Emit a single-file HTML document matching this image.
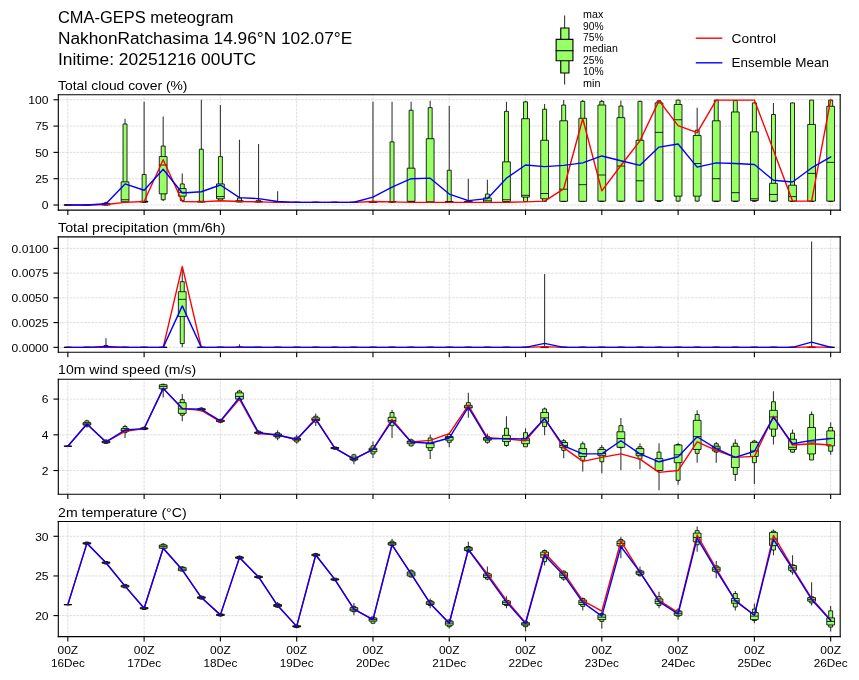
<!DOCTYPE html>
<html><head><meta charset="utf-8"><title>CMA-GEPS meteogram</title><style>html,body{margin:0;padding:0;background:#fff;overflow:hidden}svg{display:block;font-family:"Liberation Sans",sans-serif;will-change:transform}</style></head><body>
<svg width="859" height="680" viewBox="0 0 618.48 489.6" version="1.1">
<defs>
<style type="text/css">*{stroke-linejoin: round; stroke-linecap: butt}</style>
</defs>
<g id="figure_1">
<g id="patch_1">
<path d="M 0 489.6 L 618.48 489.6 L 618.48 0 L 0 0 z
" style="fill: #ffffff"/>
</g>
<g id="axes_1">
<g id="patch_2">
<path d="M 41.98 151.27 L 604.94 151.27 L 604.94 68.18 L 41.98 68.18 z
" style="fill: #ffffff"/>
</g>
<g id="matplotlib.axis_1">
<g id="xtick_1">
<g id="line2d_1">
<path d="M 48.84 151.27 L 48.84 68.18 " clip-path="url(#p63c5d4109b)" style="fill: none; stroke-dasharray: 1.85,0.8; stroke-dashoffset: 0; stroke: #b0b0b0; stroke-opacity: 0.6; stroke-width: 0.5"/>
</g>
<g id="line2d_2">
<defs>
<path id="mde36ec28b2" d="M 0 0 L 0 3.5 " style="stroke: #000000; stroke-width: 0.8"/>
</defs>
<g>
<use href="#mde36ec28b2" x="48.84" y="151.27" style="stroke: #000000; stroke-width: 0.8"/>
</g>
</g>
</g>
<g id="xtick_2">
<g id="line2d_3">
<path d="M 103.77 151.27 L 103.77 68.18 " clip-path="url(#p63c5d4109b)" style="fill: none; stroke-dasharray: 1.85,0.8; stroke-dashoffset: 0; stroke: #b0b0b0; stroke-opacity: 0.6; stroke-width: 0.5"/>
</g>
<g id="line2d_4">
<g>
<use href="#mde36ec28b2" x="103.77" y="151.27" style="stroke: #000000; stroke-width: 0.8"/>
</g>
</g>
</g>
<g id="xtick_3">
<g id="line2d_5">
<path d="M 158.69 151.27 L 158.69 68.18 " clip-path="url(#p63c5d4109b)" style="fill: none; stroke-dasharray: 1.85,0.8; stroke-dashoffset: 0; stroke: #b0b0b0; stroke-opacity: 0.6; stroke-width: 0.5"/>
</g>
<g id="line2d_6">
<g>
<use href="#mde36ec28b2" x="158.69" y="151.27" style="stroke: #000000; stroke-width: 0.8"/>
</g>
</g>
</g>
<g id="xtick_4">
<g id="line2d_7">
<path d="M 213.61 151.27 L 213.61 68.18 " clip-path="url(#p63c5d4109b)" style="fill: none; stroke-dasharray: 1.85,0.8; stroke-dashoffset: 0; stroke: #b0b0b0; stroke-opacity: 0.6; stroke-width: 0.5"/>
</g>
<g id="line2d_8">
<g>
<use href="#mde36ec28b2" x="213.61" y="151.27" style="stroke: #000000; stroke-width: 0.8"/>
</g>
</g>
</g>
<g id="xtick_5">
<g id="line2d_9">
<path d="M 268.54 151.27 L 268.54 68.18 " clip-path="url(#p63c5d4109b)" style="fill: none; stroke-dasharray: 1.85,0.8; stroke-dashoffset: 0; stroke: #b0b0b0; stroke-opacity: 0.6; stroke-width: 0.5"/>
</g>
<g id="line2d_10">
<g>
<use href="#mde36ec28b2" x="268.54" y="151.27" style="stroke: #000000; stroke-width: 0.8"/>
</g>
</g>
</g>
<g id="xtick_6">
<g id="line2d_11">
<path d="M 323.46 151.27 L 323.46 68.18 " clip-path="url(#p63c5d4109b)" style="fill: none; stroke-dasharray: 1.85,0.8; stroke-dashoffset: 0; stroke: #b0b0b0; stroke-opacity: 0.6; stroke-width: 0.5"/>
</g>
<g id="line2d_12">
<g>
<use href="#mde36ec28b2" x="323.46" y="151.27" style="stroke: #000000; stroke-width: 0.8"/>
</g>
</g>
</g>
<g id="xtick_7">
<g id="line2d_13">
<path d="M 378.38 151.27 L 378.38 68.18 " clip-path="url(#p63c5d4109b)" style="fill: none; stroke-dasharray: 1.85,0.8; stroke-dashoffset: 0; stroke: #b0b0b0; stroke-opacity: 0.6; stroke-width: 0.5"/>
</g>
<g id="line2d_14">
<g>
<use href="#mde36ec28b2" x="378.38" y="151.27" style="stroke: #000000; stroke-width: 0.8"/>
</g>
</g>
</g>
<g id="xtick_8">
<g id="line2d_15">
<path d="M 433.31 151.27 L 433.31 68.18 " clip-path="url(#p63c5d4109b)" style="fill: none; stroke-dasharray: 1.85,0.8; stroke-dashoffset: 0; stroke: #b0b0b0; stroke-opacity: 0.6; stroke-width: 0.5"/>
</g>
<g id="line2d_16">
<g>
<use href="#mde36ec28b2" x="433.31" y="151.27" style="stroke: #000000; stroke-width: 0.8"/>
</g>
</g>
</g>
<g id="xtick_9">
<g id="line2d_17">
<path d="M 488.23 151.27 L 488.23 68.18 " clip-path="url(#p63c5d4109b)" style="fill: none; stroke-dasharray: 1.85,0.8; stroke-dashoffset: 0; stroke: #b0b0b0; stroke-opacity: 0.6; stroke-width: 0.5"/>
</g>
<g id="line2d_18">
<g>
<use href="#mde36ec28b2" x="488.23" y="151.27" style="stroke: #000000; stroke-width: 0.8"/>
</g>
</g>
</g>
<g id="xtick_10">
<g id="line2d_19">
<path d="M 543.15 151.27 L 543.15 68.18 " clip-path="url(#p63c5d4109b)" style="fill: none; stroke-dasharray: 1.85,0.8; stroke-dashoffset: 0; stroke: #b0b0b0; stroke-opacity: 0.6; stroke-width: 0.5"/>
</g>
<g id="line2d_20">
<g>
<use href="#mde36ec28b2" x="543.15" y="151.27" style="stroke: #000000; stroke-width: 0.8"/>
</g>
</g>
</g>
<g id="xtick_11">
<g id="line2d_21">
<path d="M 598.08 151.27 L 598.08 68.18 " clip-path="url(#p63c5d4109b)" style="fill: none; stroke-dasharray: 1.85,0.8; stroke-dashoffset: 0; stroke: #b0b0b0; stroke-opacity: 0.6; stroke-width: 0.5"/>
</g>
<g id="line2d_22">
<g>
<use href="#mde36ec28b2" x="598.08" y="151.27" style="stroke: #000000; stroke-width: 0.8"/>
</g>
</g>
</g>
</g>
<g id="matplotlib.axis_2">
<g id="ytick_1">
<g id="line2d_23">
<path d="M 41.98 147.6 L 604.94 147.6 " clip-path="url(#p63c5d4109b)" style="fill: none; stroke-dasharray: 1.85,0.8; stroke-dashoffset: 0; stroke: #b0b0b0; stroke-opacity: 0.6; stroke-width: 0.5"/>
</g>
<g id="line2d_24">
<defs>
<path id="mc78ae8635a" d="M 0 0 L -3.5 0 " style="stroke: #000000; stroke-width: 0.8"/>
</defs>
<g>
<use href="#mc78ae8635a" x="41.98" y="147.6" style="stroke: #000000; stroke-width: 0.8"/>
</g>
</g>
<g id="text_1">
<text style="font-size: 8.28px; font-family: 'Liberation Sans'; text-anchor: end" x="34.98" y="150.64" transform="rotate(-0 34.98 150.64)" textLength="4.85" lengthAdjust="spacingAndGlyphs">0</text>
</g>
</g>
<g id="ytick_2">
<g id="line2d_25">
<path d="M 41.98 128.66 L 604.94 128.66 " clip-path="url(#p63c5d4109b)" style="fill: none; stroke-dasharray: 1.85,0.8; stroke-dashoffset: 0; stroke: #b0b0b0; stroke-opacity: 0.6; stroke-width: 0.5"/>
</g>
<g id="line2d_26">
<g>
<use href="#mc78ae8635a" x="41.98" y="128.66" style="stroke: #000000; stroke-width: 0.8"/>
</g>
</g>
<g id="text_2">
<text style="font-size: 8.28px; font-family: 'Liberation Sans'; text-anchor: end" x="34.98" y="131.69" transform="rotate(-0 34.98 131.69)" textLength="9.69" lengthAdjust="spacingAndGlyphs">25</text>
</g>
</g>
<g id="ytick_3">
<g id="line2d_27">
<path d="M 41.98 109.71 L 604.94 109.71 " clip-path="url(#p63c5d4109b)" style="fill: none; stroke-dasharray: 1.85,0.8; stroke-dashoffset: 0; stroke: #b0b0b0; stroke-opacity: 0.6; stroke-width: 0.5"/>
</g>
<g id="line2d_28">
<g>
<use href="#mc78ae8635a" x="41.98" y="109.71" style="stroke: #000000; stroke-width: 0.8"/>
</g>
</g>
<g id="text_3">
<text style="font-size: 8.28px; font-family: 'Liberation Sans'; text-anchor: end" x="34.98" y="112.75" transform="rotate(-0 34.98 112.75)" textLength="9.69" lengthAdjust="spacingAndGlyphs">50</text>
</g>
</g>
<g id="ytick_4">
<g id="line2d_29">
<path d="M 41.98 90.77 L 604.94 90.77 " clip-path="url(#p63c5d4109b)" style="fill: none; stroke-dasharray: 1.85,0.8; stroke-dashoffset: 0; stroke: #b0b0b0; stroke-opacity: 0.6; stroke-width: 0.5"/>
</g>
<g id="line2d_30">
<g>
<use href="#mc78ae8635a" x="41.98" y="90.77" style="stroke: #000000; stroke-width: 0.8"/>
</g>
</g>
<g id="text_4">
<text style="font-size: 8.28px; font-family: 'Liberation Sans'; text-anchor: end" x="34.98" y="93.81" transform="rotate(-0 34.98 93.81)" textLength="9.69" lengthAdjust="spacingAndGlyphs">75</text>
</g>
</g>
<g id="ytick_5">
<g id="line2d_31">
<path d="M 41.98 71.83 L 604.94 71.83 " clip-path="url(#p63c5d4109b)" style="fill: none; stroke-dasharray: 1.85,0.8; stroke-dashoffset: 0; stroke: #b0b0b0; stroke-opacity: 0.6; stroke-width: 0.5"/>
</g>
<g id="line2d_32">
<g>
<use href="#mc78ae8635a" x="41.98" y="71.83" style="stroke: #000000; stroke-width: 0.8"/>
</g>
</g>
<g id="text_5">
<text style="font-size: 8.28px; font-family: 'Liberation Sans'; text-anchor: end" x="34.98" y="74.87" transform="rotate(-0 34.98 74.87)" textLength="14.54" lengthAdjust="spacingAndGlyphs">100</text>
</g>
</g>
</g>
<g id="line2d_33">
<path d="M 48.84 147.6 L 48.84 147.22 " clip-path="url(#p63c5d4109b)" style="fill: none; stroke: #3a3a3a; stroke-width: 0.8"/>
</g>
<g id="line2d_34">
<path d="M 62.57 147.6 L 62.57 147.22 " clip-path="url(#p63c5d4109b)" style="fill: none; stroke: #3a3a3a; stroke-width: 0.8"/>
</g>
<g id="line2d_35">
<path d="M 76.3 147.6 L 76.3 145.32 " clip-path="url(#p63c5d4109b)" style="fill: none; stroke: #3a3a3a; stroke-width: 0.8"/>
</g>
<g id="line2d_36">
<path d="M 90.03 146.08 L 90.03 85.47 " clip-path="url(#p63c5d4109b)" style="fill: none; stroke: #3a3a3a; stroke-width: 0.8"/>
</g>
<g id="line2d_37">
<path d="M 103.77 145.7 L 103.77 73.34 " clip-path="url(#p63c5d4109b)" style="fill: none; stroke: #3a3a3a; stroke-width: 0.8"/>
</g>
<g id="line2d_38">
<path d="M 117.5 144.79 L 117.5 83.95 " clip-path="url(#p63c5d4109b)" style="fill: none; stroke: #3a3a3a; stroke-width: 0.8"/>
</g>
<g id="line2d_39">
<path d="M 131.23 144.79 L 131.23 124.87 " clip-path="url(#p63c5d4109b)" style="fill: none; stroke: #3a3a3a; stroke-width: 0.8"/>
</g>
<g id="line2d_40">
<path d="M 144.96 145.32 L 144.96 71.83 " clip-path="url(#p63c5d4109b)" style="fill: none; stroke: #3a3a3a; stroke-width: 0.8"/>
</g>
<g id="line2d_41">
<path d="M 158.69 144.57 L 158.69 75.62 " clip-path="url(#p63c5d4109b)" style="fill: none; stroke: #3a3a3a; stroke-width: 0.8"/>
</g>
<g id="line2d_42">
<path d="M 172.42 145.32 L 172.42 100.62 " clip-path="url(#p63c5d4109b)" style="fill: none; stroke: #3a3a3a; stroke-width: 0.8"/>
</g>
<g id="line2d_43">
<path d="M 186.15 145.32 L 186.15 103.65 " clip-path="url(#p63c5d4109b)" style="fill: none; stroke: #3a3a3a; stroke-width: 0.8"/>
</g>
<g id="line2d_44">
<path d="M 199.88 145.7 L 199.88 137.75 " clip-path="url(#p63c5d4109b)" style="fill: none; stroke: #3a3a3a; stroke-width: 0.8"/>
</g>
<g id="line2d_45">
<path d="M 213.61 145.7 L 213.61 145.7 " clip-path="url(#p63c5d4109b)" style="fill: none; stroke: #3a3a3a; stroke-width: 0.8"/>
</g>
<g id="line2d_46">
<path d="M 227.34 145.7 L 227.34 145.7 " clip-path="url(#p63c5d4109b)" style="fill: none; stroke: #3a3a3a; stroke-width: 0.8"/>
</g>
<g id="line2d_47">
<path d="M 241.07 145.7 L 241.07 145.7 " clip-path="url(#p63c5d4109b)" style="fill: none; stroke: #3a3a3a; stroke-width: 0.8"/>
</g>
<g id="line2d_48">
<path d="M 254.81 145.7 L 254.81 145.7 " clip-path="url(#p63c5d4109b)" style="fill: none; stroke: #3a3a3a; stroke-width: 0.8"/>
</g>
<g id="line2d_49">
<path d="M 268.54 145.7 L 268.54 73.34 " clip-path="url(#p63c5d4109b)" style="fill: none; stroke: #3a3a3a; stroke-width: 0.8"/>
</g>
<g id="line2d_50">
<path d="M 282.27 145.7 L 282.27 73.34 " clip-path="url(#p63c5d4109b)" style="fill: none; stroke: #3a3a3a; stroke-width: 0.8"/>
</g>
<g id="line2d_51">
<path d="M 296 145.7 L 296 73.34 " clip-path="url(#p63c5d4109b)" style="fill: none; stroke: #3a3a3a; stroke-width: 0.8"/>
</g>
<g id="line2d_52">
<path d="M 309.73 145.7 L 309.73 72.59 " clip-path="url(#p63c5d4109b)" style="fill: none; stroke: #3a3a3a; stroke-width: 0.8"/>
</g>
<g id="line2d_53">
<path d="M 323.46 145.7 L 323.46 76.37 " clip-path="url(#p63c5d4109b)" style="fill: none; stroke: #3a3a3a; stroke-width: 0.8"/>
</g>
<g id="line2d_54">
<path d="M 337.19 145.7 L 337.19 128.66 " clip-path="url(#p63c5d4109b)" style="fill: none; stroke: #3a3a3a; stroke-width: 0.8"/>
</g>
<g id="line2d_55">
<path d="M 350.92 145.7 L 350.92 129.41 " clip-path="url(#p63c5d4109b)" style="fill: none; stroke: #3a3a3a; stroke-width: 0.8"/>
</g>
<g id="line2d_56">
<path d="M 364.65 145.7 L 364.65 73.34 " clip-path="url(#p63c5d4109b)" style="fill: none; stroke: #3a3a3a; stroke-width: 0.8"/>
</g>
<g id="line2d_57">
<path d="M 378.38 145.32 L 378.38 72.59 " clip-path="url(#p63c5d4109b)" style="fill: none; stroke: #3a3a3a; stroke-width: 0.8"/>
</g>
<g id="line2d_58">
<path d="M 392.11 145.32 L 392.11 74.86 " clip-path="url(#p63c5d4109b)" style="fill: none; stroke: #3a3a3a; stroke-width: 0.8"/>
</g>
<g id="line2d_59">
<path d="M 405.85 145.32 L 405.85 72.06 " clip-path="url(#p63c5d4109b)" style="fill: none; stroke: #3a3a3a; stroke-width: 0.8"/>
</g>
<g id="line2d_60">
<path d="M 419.58 145.32 L 419.58 72.06 " clip-path="url(#p63c5d4109b)" style="fill: none; stroke: #3a3a3a; stroke-width: 0.8"/>
</g>
<g id="line2d_61">
<path d="M 433.31 145.32 L 433.31 72.06 " clip-path="url(#p63c5d4109b)" style="fill: none; stroke: #3a3a3a; stroke-width: 0.8"/>
</g>
<g id="line2d_62">
<path d="M 447.04 145.32 L 447.04 72.43 " clip-path="url(#p63c5d4109b)" style="fill: none; stroke: #3a3a3a; stroke-width: 0.8"/>
</g>
<g id="line2d_63">
<path d="M 460.77 145.32 L 460.77 72.59 " clip-path="url(#p63c5d4109b)" style="fill: none; stroke: #3a3a3a; stroke-width: 0.8"/>
</g>
<g id="line2d_64">
<path d="M 474.5 145.32 L 474.5 72.21 " clip-path="url(#p63c5d4109b)" style="fill: none; stroke: #3a3a3a; stroke-width: 0.8"/>
</g>
<g id="line2d_65">
<path d="M 488.23 145.32 L 488.23 71.98 " clip-path="url(#p63c5d4109b)" style="fill: none; stroke: #3a3a3a; stroke-width: 0.8"/>
</g>
<g id="line2d_66">
<path d="M 501.96 145.32 L 501.96 77.51 " clip-path="url(#p63c5d4109b)" style="fill: none; stroke: #3a3a3a; stroke-width: 0.8"/>
</g>
<g id="line2d_67">
<path d="M 515.69 145.32 L 515.69 71.98 " clip-path="url(#p63c5d4109b)" style="fill: none; stroke: #3a3a3a; stroke-width: 0.8"/>
</g>
<g id="line2d_68">
<path d="M 529.42 145.32 L 529.42 72.06 " clip-path="url(#p63c5d4109b)" style="fill: none; stroke: #3a3a3a; stroke-width: 0.8"/>
</g>
<g id="line2d_69">
<path d="M 543.15 145.32 L 543.15 73.34 " clip-path="url(#p63c5d4109b)" style="fill: none; stroke: #3a3a3a; stroke-width: 0.8"/>
</g>
<g id="line2d_70">
<path d="M 556.89 145.32 L 556.89 74.1 " clip-path="url(#p63c5d4109b)" style="fill: none; stroke: #3a3a3a; stroke-width: 0.8"/>
</g>
<g id="line2d_71">
<path d="M 570.62 145.32 L 570.62 73.72 " clip-path="url(#p63c5d4109b)" style="fill: none; stroke: #3a3a3a; stroke-width: 0.8"/>
</g>
<g id="line2d_72">
<path d="M 584.35 145.32 L 584.35 72.06 " clip-path="url(#p63c5d4109b)" style="fill: none; stroke: #3a3a3a; stroke-width: 0.8"/>
</g>
<g id="line2d_73">
<path d="M 598.08 145.32 L 598.08 71.98 " clip-path="url(#p63c5d4109b)" style="fill: none; stroke: #3a3a3a; stroke-width: 0.8"/>
</g>
<g id="patch_3">
<path d="M 41.98 151.27 L 41.98 68.18 " style="fill: none; stroke: #000000; stroke-width: 0.8; stroke-linejoin: miter; stroke-linecap: square"/>
</g>
<g id="patch_4">
<path d="M 604.94 151.27 L 604.94 68.18 " style="fill: none; stroke: #000000; stroke-width: 0.8; stroke-linejoin: miter; stroke-linecap: square"/>
</g>
<g id="patch_5">
<path d="M 41.98 151.27 L 604.94 151.27 " style="fill: none; stroke: #000000; stroke-width: 0.8; stroke-linejoin: miter; stroke-linecap: square"/>
</g>
<g id="patch_6">
<path d="M 41.98 68.18 L 604.94 68.18 " style="fill: none; stroke: #000000; stroke-width: 0.8; stroke-linejoin: miter; stroke-linecap: square"/>
</g>
<g id="patch_7">
<path d="M 47.41 147.6 L 50.27 147.6 L 50.27 147.6 L 47.41 147.6 z
" clip-path="url(#p63c5d4109b)" style="fill: #99ff66; stroke: #000000; stroke-width: 0.6; stroke-linejoin: miter"/>
</g>
<g id="patch_8">
<path d="M 61.14 147.6 L 64 147.6 L 64 147.6 L 61.14 147.6 z
" clip-path="url(#p63c5d4109b)" style="fill: #99ff66; stroke: #000000; stroke-width: 0.6; stroke-linejoin: miter"/>
</g>
<g id="patch_9">
<path d="M 74.87 147.6 L 77.73 147.6 L 77.73 146.08 L 74.87 146.08 z
" clip-path="url(#p63c5d4109b)" style="fill: #99ff66; stroke: #000000; stroke-width: 0.6; stroke-linejoin: miter"/>
</g>
<g id="patch_10">
<path d="M 88.6 145.7 L 91.46 145.7 L 91.46 89.26 L 88.6 89.26 z
" clip-path="url(#p63c5d4109b)" style="fill: #99ff66; stroke: #000000; stroke-width: 0.6; stroke-linejoin: miter"/>
</g>
<g id="patch_11">
<path d="M 102.33 145.7 L 105.2 145.7 L 105.2 125.62 L 102.33 125.62 z
" clip-path="url(#p63c5d4109b)" style="fill: #99ff66; stroke: #000000; stroke-width: 0.6; stroke-linejoin: miter"/>
</g>
<g id="patch_12">
<path d="M 116.07 143.81 L 118.93 143.81 L 118.93 105.17 L 116.07 105.17 z
" clip-path="url(#p63c5d4109b)" style="fill: #99ff66; stroke: #000000; stroke-width: 0.6; stroke-linejoin: miter"/>
</g>
<g id="patch_13">
<path d="M 129.8 144.41 L 132.66 144.41 L 132.66 132.44 L 129.8 132.44 z
" clip-path="url(#p63c5d4109b)" style="fill: #99ff66; stroke: #000000; stroke-width: 0.6; stroke-linejoin: miter"/>
</g>
<g id="patch_14">
<path d="M 143.53 145.32 L 146.39 145.32 L 146.39 107.44 L 143.53 107.44 z
" clip-path="url(#p63c5d4109b)" style="fill: #99ff66; stroke: #000000; stroke-width: 0.6; stroke-linejoin: miter"/>
</g>
<g id="patch_15">
<path d="M 157.26 144.19 L 160.12 144.19 L 160.12 112.74 L 157.26 112.74 z
" clip-path="url(#p63c5d4109b)" style="fill: #99ff66; stroke: #000000; stroke-width: 0.6; stroke-linejoin: miter"/>
</g>
<g id="patch_16">
<path d="M 170.99 145.32 L 173.85 145.32 L 173.85 142.52 L 170.99 142.52 z
" clip-path="url(#p63c5d4109b)" style="fill: #99ff66; stroke: #000000; stroke-width: 0.6; stroke-linejoin: miter"/>
</g>
<g id="patch_17">
<path d="M 184.72 145.32 L 187.58 145.32 L 187.58 144.19 L 184.72 144.19 z
" clip-path="url(#p63c5d4109b)" style="fill: #99ff66; stroke: #000000; stroke-width: 0.6; stroke-linejoin: miter"/>
</g>
<g id="patch_18">
<path d="M 198.45 145.7 L 201.31 145.7 L 201.31 145.1 L 198.45 145.1 z
" clip-path="url(#p63c5d4109b)" style="fill: #99ff66; stroke: #000000; stroke-width: 0.6; stroke-linejoin: miter"/>
</g>
<g id="patch_19">
<path d="M 212.18 145.7 L 215.04 145.7 L 215.04 145.7 L 212.18 145.7 z
" clip-path="url(#p63c5d4109b)" style="fill: #99ff66; stroke: #000000; stroke-width: 0.6; stroke-linejoin: miter"/>
</g>
<g id="patch_20">
<path d="M 225.91 145.7 L 228.77 145.7 L 228.77 145.7 L 225.91 145.7 z
" clip-path="url(#p63c5d4109b)" style="fill: #99ff66; stroke: #000000; stroke-width: 0.6; stroke-linejoin: miter"/>
</g>
<g id="patch_21">
<path d="M 239.64 145.7 L 242.5 145.7 L 242.5 145.7 L 239.64 145.7 z
" clip-path="url(#p63c5d4109b)" style="fill: #99ff66; stroke: #000000; stroke-width: 0.6; stroke-linejoin: miter"/>
</g>
<g id="patch_22">
<path d="M 253.38 145.7 L 256.24 145.7 L 256.24 145.7 L 253.38 145.7 z
" clip-path="url(#p63c5d4109b)" style="fill: #99ff66; stroke: #000000; stroke-width: 0.6; stroke-linejoin: miter"/>
</g>
<g id="patch_23">
<path d="M 267.11 145.7 L 269.97 145.7 L 269.97 144.95 L 267.11 144.95 z
" clip-path="url(#p63c5d4109b)" style="fill: #99ff66; stroke: #000000; stroke-width: 0.6; stroke-linejoin: miter"/>
</g>
<g id="patch_24">
<path d="M 280.84 145.7 L 283.7 145.7 L 283.7 102.14 L 280.84 102.14 z
" clip-path="url(#p63c5d4109b)" style="fill: #99ff66; stroke: #000000; stroke-width: 0.6; stroke-linejoin: miter"/>
</g>
<g id="patch_25">
<path d="M 294.57 145.7 L 297.43 145.7 L 297.43 79.41 L 294.57 79.41 z
" clip-path="url(#p63c5d4109b)" style="fill: #99ff66; stroke: #000000; stroke-width: 0.6; stroke-linejoin: miter"/>
</g>
<g id="patch_26">
<path d="M 308.3 145.7 L 311.16 145.7 L 311.16 77.51 L 308.3 77.51 z
" clip-path="url(#p63c5d4109b)" style="fill: #99ff66; stroke: #000000; stroke-width: 0.6; stroke-linejoin: miter"/>
</g>
<g id="patch_27">
<path d="M 322.03 145.7 L 324.89 145.7 L 324.89 122.59 L 322.03 122.59 z
" clip-path="url(#p63c5d4109b)" style="fill: #99ff66; stroke: #000000; stroke-width: 0.6; stroke-linejoin: miter"/>
</g>
<g id="patch_28">
<path d="M 335.76 145.7 L 338.62 145.7 L 338.62 144.57 L 335.76 144.57 z
" clip-path="url(#p63c5d4109b)" style="fill: #99ff66; stroke: #000000; stroke-width: 0.6; stroke-linejoin: miter"/>
</g>
<g id="patch_29">
<path d="M 349.49 145.7 L 352.35 145.7 L 352.35 139.72 L 349.49 139.72 z
" clip-path="url(#p63c5d4109b)" style="fill: #99ff66; stroke: #000000; stroke-width: 0.6; stroke-linejoin: miter"/>
</g>
<g id="patch_30">
<path d="M 363.22 145.32 L 366.08 145.32 L 366.08 80.16 L 363.22 80.16 z
" clip-path="url(#p63c5d4109b)" style="fill: #99ff66; stroke: #000000; stroke-width: 0.6; stroke-linejoin: miter"/>
</g>
<g id="patch_31">
<path d="M 376.95 145.1 L 379.81 145.1 L 379.81 73.34 L 376.95 73.34 z
" clip-path="url(#p63c5d4109b)" style="fill: #99ff66; stroke: #000000; stroke-width: 0.6; stroke-linejoin: miter"/>
</g>
<g id="patch_32">
<path d="M 390.68 144.95 L 393.54 144.95 L 393.54 78.65 L 390.68 78.65 z
" clip-path="url(#p63c5d4109b)" style="fill: #99ff66; stroke: #000000; stroke-width: 0.6; stroke-linejoin: miter"/>
</g>
<g id="patch_33">
<path d="M 404.42 145.1 L 407.28 145.1 L 407.28 75.62 L 404.42 75.62 z
" clip-path="url(#p63c5d4109b)" style="fill: #99ff66; stroke: #000000; stroke-width: 0.6; stroke-linejoin: miter"/>
</g>
<g id="patch_34">
<path d="M 418.15 145.1 L 421.01 145.1 L 421.01 72.97 L 418.15 72.97 z
" clip-path="url(#p63c5d4109b)" style="fill: #99ff66; stroke: #000000; stroke-width: 0.6; stroke-linejoin: miter"/>
</g>
<g id="patch_35">
<path d="M 431.88 145.1 L 434.74 145.1 L 434.74 72.97 L 431.88 72.97 z
" clip-path="url(#p63c5d4109b)" style="fill: #99ff66; stroke: #000000; stroke-width: 0.6; stroke-linejoin: miter"/>
</g>
<g id="patch_36">
<path d="M 445.61 145.1 L 448.47 145.1 L 448.47 76.37 L 445.61 76.37 z
" clip-path="url(#p63c5d4109b)" style="fill: #99ff66; stroke: #000000; stroke-width: 0.6; stroke-linejoin: miter"/>
</g>
<g id="patch_37">
<path d="M 459.34 145.1 L 462.2 145.1 L 462.2 72.97 L 459.34 72.97 z
" clip-path="url(#p63c5d4109b)" style="fill: #99ff66; stroke: #000000; stroke-width: 0.6; stroke-linejoin: miter"/>
</g>
<g id="patch_38">
<path d="M 473.07 145.1 L 475.93 145.1 L 475.93 72.59 L 473.07 72.59 z
" clip-path="url(#p63c5d4109b)" style="fill: #99ff66; stroke: #000000; stroke-width: 0.6; stroke-linejoin: miter"/>
</g>
<g id="patch_39">
<path d="M 486.8 144.79 L 489.66 144.79 L 489.66 72.06 L 486.8 72.06 z
" clip-path="url(#p63c5d4109b)" style="fill: #99ff66; stroke: #000000; stroke-width: 0.6; stroke-linejoin: miter"/>
</g>
<g id="patch_40">
<path d="M 500.53 144.79 L 503.39 144.79 L 503.39 93.8 L 500.53 93.8 z
" clip-path="url(#p63c5d4109b)" style="fill: #99ff66; stroke: #000000; stroke-width: 0.6; stroke-linejoin: miter"/>
</g>
<g id="patch_41">
<path d="M 514.26 145.1 L 517.12 145.1 L 517.12 72.06 L 514.26 72.06 z
" clip-path="url(#p63c5d4109b)" style="fill: #99ff66; stroke: #000000; stroke-width: 0.6; stroke-linejoin: miter"/>
</g>
<g id="patch_42">
<path d="M 527.99 145.1 L 530.85 145.1 L 530.85 72.43 L 527.99 72.43 z
" clip-path="url(#p63c5d4109b)" style="fill: #99ff66; stroke: #000000; stroke-width: 0.6; stroke-linejoin: miter"/>
</g>
<g id="patch_43">
<path d="M 541.72 144.95 L 544.59 144.95 L 544.59 74.1 L 541.72 74.1 z
" clip-path="url(#p63c5d4109b)" style="fill: #99ff66; stroke: #000000; stroke-width: 0.6; stroke-linejoin: miter"/>
</g>
<g id="patch_44">
<path d="M 555.46 145.1 L 558.32 145.1 L 558.32 82.44 L 555.46 82.44 z
" clip-path="url(#p63c5d4109b)" style="fill: #99ff66; stroke: #000000; stroke-width: 0.6; stroke-linejoin: miter"/>
</g>
<g id="patch_45">
<path d="M 569.19 145.1 L 572.05 145.1 L 572.05 74.1 L 569.19 74.1 z
" clip-path="url(#p63c5d4109b)" style="fill: #99ff66; stroke: #000000; stroke-width: 0.6; stroke-linejoin: miter"/>
</g>
<g id="patch_46">
<path d="M 582.92 145.1 L 585.78 145.1 L 585.78 72.06 L 582.92 72.06 z
" clip-path="url(#p63c5d4109b)" style="fill: #99ff66; stroke: #000000; stroke-width: 0.6; stroke-linejoin: miter"/>
</g>
<g id="patch_47">
<path d="M 596.65 145.1 L 599.51 145.1 L 599.51 72.06 L 596.65 72.06 z
" clip-path="url(#p63c5d4109b)" style="fill: #99ff66; stroke: #000000; stroke-width: 0.6; stroke-linejoin: miter"/>
</g>
<g id="patch_48">
<path d="M 46.04 147.6 L 51.64 147.6 L 51.64 147.6 L 46.04 147.6 z
" clip-path="url(#p63c5d4109b)" style="fill: #99ff66; stroke: #000000; stroke-width: 0.6; stroke-linejoin: miter"/>
</g>
<g id="patch_49">
<path d="M 59.77 147.6 L 65.38 147.6 L 65.38 147.6 L 59.77 147.6 z
" clip-path="url(#p63c5d4109b)" style="fill: #99ff66; stroke: #000000; stroke-width: 0.6; stroke-linejoin: miter"/>
</g>
<g id="patch_50">
<path d="M 73.5 147.6 L 79.11 147.6 L 79.11 146.46 L 73.5 146.46 z
" clip-path="url(#p63c5d4109b)" style="fill: #99ff66; stroke: #000000; stroke-width: 0.6; stroke-linejoin: miter"/>
</g>
<g id="patch_51">
<path d="M 87.23 145.32 L 92.84 145.32 L 92.84 130.93 L 87.23 130.93 z
" clip-path="url(#p63c5d4109b)" style="fill: #99ff66; stroke: #000000; stroke-width: 0.6; stroke-linejoin: miter"/>
</g>
<g id="patch_52">
<path d="M 100.96 145.32 L 106.57 145.32 L 106.57 144.95 L 100.96 144.95 z
" clip-path="url(#p63c5d4109b)" style="fill: #99ff66; stroke: #000000; stroke-width: 0.6; stroke-linejoin: miter"/>
</g>
<g id="patch_53">
<path d="M 114.69 139.57 L 120.3 139.57 L 120.3 112.74 L 114.69 112.74 z
" clip-path="url(#p63c5d4109b)" style="fill: #99ff66; stroke: #000000; stroke-width: 0.6; stroke-linejoin: miter"/>
</g>
<g id="patch_54">
<path d="M 128.42 141.23 L 134.03 141.23 L 134.03 135.78 L 128.42 135.78 z
" clip-path="url(#p63c5d4109b)" style="fill: #99ff66; stroke: #000000; stroke-width: 0.6; stroke-linejoin: miter"/>
</g>
<g id="patch_55">
<path d="M 142.15 145.32 L 147.76 145.32 L 147.76 144.95 L 142.15 144.95 z
" clip-path="url(#p63c5d4109b)" style="fill: #99ff66; stroke: #000000; stroke-width: 0.6; stroke-linejoin: miter"/>
</g>
<g id="patch_56">
<path d="M 155.89 143.13 L 161.49 143.13 L 161.49 132.44 L 155.89 132.44 z
" clip-path="url(#p63c5d4109b)" style="fill: #99ff66; stroke: #000000; stroke-width: 0.6; stroke-linejoin: miter"/>
</g>
<g id="patch_57">
<path d="M 169.62 145.32 L 175.22 145.32 L 175.22 144.57 L 169.62 144.57 z
" clip-path="url(#p63c5d4109b)" style="fill: #99ff66; stroke: #000000; stroke-width: 0.6; stroke-linejoin: miter"/>
</g>
<g id="patch_58">
<path d="M 183.35 145.32 L 188.95 145.32 L 188.95 144.95 L 183.35 144.95 z
" clip-path="url(#p63c5d4109b)" style="fill: #99ff66; stroke: #000000; stroke-width: 0.6; stroke-linejoin: miter"/>
</g>
<g id="patch_59">
<path d="M 197.08 145.7 L 202.69 145.7 L 202.69 145.32 L 197.08 145.32 z
" clip-path="url(#p63c5d4109b)" style="fill: #99ff66; stroke: #000000; stroke-width: 0.6; stroke-linejoin: miter"/>
</g>
<g id="patch_60">
<path d="M 210.81 145.7 L 216.42 145.7 L 216.42 145.7 L 210.81 145.7 z
" clip-path="url(#p63c5d4109b)" style="fill: #99ff66; stroke: #000000; stroke-width: 0.6; stroke-linejoin: miter"/>
</g>
<g id="patch_61">
<path d="M 224.54 145.7 L 230.15 145.7 L 230.15 145.7 L 224.54 145.7 z
" clip-path="url(#p63c5d4109b)" style="fill: #99ff66; stroke: #000000; stroke-width: 0.6; stroke-linejoin: miter"/>
</g>
<g id="patch_62">
<path d="M 238.27 145.7 L 243.88 145.7 L 243.88 145.7 L 238.27 145.7 z
" clip-path="url(#p63c5d4109b)" style="fill: #99ff66; stroke: #000000; stroke-width: 0.6; stroke-linejoin: miter"/>
</g>
<g id="patch_63">
<path d="M 252 145.7 L 257.61 145.7 L 257.61 145.7 L 252 145.7 z
" clip-path="url(#p63c5d4109b)" style="fill: #99ff66; stroke: #000000; stroke-width: 0.6; stroke-linejoin: miter"/>
</g>
<g id="patch_64">
<path d="M 265.73 145.7 L 271.34 145.7 L 271.34 145.32 L 265.73 145.32 z
" clip-path="url(#p63c5d4109b)" style="fill: #99ff66; stroke: #000000; stroke-width: 0.6; stroke-linejoin: miter"/>
</g>
<g id="patch_65">
<path d="M 279.46 145.32 L 285.07 145.32 L 285.07 145.1 L 279.46 145.1 z
" clip-path="url(#p63c5d4109b)" style="fill: #99ff66; stroke: #000000; stroke-width: 0.6; stroke-linejoin: miter"/>
</g>
<g id="patch_66">
<path d="M 293.19 145.1 L 298.8 145.1 L 298.8 121.08 L 293.19 121.08 z
" clip-path="url(#p63c5d4109b)" style="fill: #99ff66; stroke: #000000; stroke-width: 0.6; stroke-linejoin: miter"/>
</g>
<g id="patch_67">
<path d="M 306.93 145.7 L 312.53 145.7 L 312.53 99.86 L 306.93 99.86 z
" clip-path="url(#p63c5d4109b)" style="fill: #99ff66; stroke: #000000; stroke-width: 0.6; stroke-linejoin: miter"/>
</g>
<g id="patch_68">
<path d="M 320.66 145.32 L 326.26 145.32 L 326.26 145.1 L 320.66 145.1 z
" clip-path="url(#p63c5d4109b)" style="fill: #99ff66; stroke: #000000; stroke-width: 0.6; stroke-linejoin: miter"/>
</g>
<g id="patch_69">
<path d="M 334.39 145.7 L 339.99 145.7 L 339.99 144.95 L 334.39 144.95 z
" clip-path="url(#p63c5d4109b)" style="fill: #99ff66; stroke: #000000; stroke-width: 0.6; stroke-linejoin: miter"/>
</g>
<g id="patch_70">
<path d="M 348.12 145.7 L 353.73 145.7 L 353.73 142.52 L 348.12 142.52 z
" clip-path="url(#p63c5d4109b)" style="fill: #99ff66; stroke: #000000; stroke-width: 0.6; stroke-linejoin: miter"/>
</g>
<g id="patch_71">
<path d="M 361.85 145.1 L 367.46 145.1 L 367.46 116.53 L 361.85 116.53 z
" clip-path="url(#p63c5d4109b)" style="fill: #99ff66; stroke: #000000; stroke-width: 0.6; stroke-linejoin: miter"/>
</g>
<g id="patch_72">
<path d="M 375.58 141.91 L 381.19 141.91 L 381.19 85.47 L 375.58 85.47 z
" clip-path="url(#p63c5d4109b)" style="fill: #99ff66; stroke: #000000; stroke-width: 0.6; stroke-linejoin: miter"/>
</g>
<g id="patch_73">
<path d="M 389.31 143.13 L 394.92 143.13 L 394.92 101 L 389.31 101 z
" clip-path="url(#p63c5d4109b)" style="fill: #99ff66; stroke: #000000; stroke-width: 0.6; stroke-linejoin: miter"/>
</g>
<g id="patch_74">
<path d="M 403.04 144.95 L 408.65 144.95 L 408.65 86.98 L 403.04 86.98 z
" clip-path="url(#p63c5d4109b)" style="fill: #99ff66; stroke: #000000; stroke-width: 0.6; stroke-linejoin: miter"/>
</g>
<g id="patch_75">
<path d="M 416.77 144.95 L 422.38 144.95 L 422.38 85.16 L 416.77 85.16 z
" clip-path="url(#p63c5d4109b)" style="fill: #99ff66; stroke: #000000; stroke-width: 0.6; stroke-linejoin: miter"/>
</g>
<g id="patch_76">
<path d="M 430.5 144.79 L 436.11 144.79 L 436.11 75.62 L 430.5 75.62 z
" clip-path="url(#p63c5d4109b)" style="fill: #99ff66; stroke: #000000; stroke-width: 0.6; stroke-linejoin: miter"/>
</g>
<g id="patch_77">
<path d="M 444.23 144.79 L 449.84 144.79 L 449.84 84.71 L 444.23 84.71 z
" clip-path="url(#p63c5d4109b)" style="fill: #99ff66; stroke: #000000; stroke-width: 0.6; stroke-linejoin: miter"/>
</g>
<g id="patch_78">
<path d="M 457.97 144.79 L 463.57 144.79 L 463.57 101 L 457.97 101 z
" clip-path="url(#p63c5d4109b)" style="fill: #99ff66; stroke: #000000; stroke-width: 0.6; stroke-linejoin: miter"/>
</g>
<g id="patch_79">
<path d="M 471.7 144.41 L 477.3 144.41 L 477.3 74.1 L 471.7 74.1 z
" clip-path="url(#p63c5d4109b)" style="fill: #99ff66; stroke: #000000; stroke-width: 0.6; stroke-linejoin: miter"/>
</g>
<g id="patch_80">
<path d="M 485.43 141.23 L 491.03 141.23 L 491.03 75.24 L 485.43 75.24 z
" clip-path="url(#p63c5d4109b)" style="fill: #99ff66; stroke: #000000; stroke-width: 0.6; stroke-linejoin: miter"/>
</g>
<g id="patch_81">
<path d="M 499.16 141.23 L 504.77 141.23 L 504.77 97.59 L 499.16 97.59 z
" clip-path="url(#p63c5d4109b)" style="fill: #99ff66; stroke: #000000; stroke-width: 0.6; stroke-linejoin: miter"/>
</g>
<g id="patch_82">
<path d="M 512.89 144.79 L 518.5 144.79 L 518.5 86.98 L 512.89 86.98 z
" clip-path="url(#p63c5d4109b)" style="fill: #99ff66; stroke: #000000; stroke-width: 0.6; stroke-linejoin: miter"/>
</g>
<g id="patch_83">
<path d="M 526.62 144.79 L 532.23 144.79 L 532.23 80.62 L 526.62 80.62 z
" clip-path="url(#p63c5d4109b)" style="fill: #99ff66; stroke: #000000; stroke-width: 0.6; stroke-linejoin: miter"/>
</g>
<g id="patch_84">
<path d="M 540.35 144.41 L 545.96 144.41 L 545.96 94.94 L 540.35 94.94 z
" clip-path="url(#p63c5d4109b)" style="fill: #99ff66; stroke: #000000; stroke-width: 0.6; stroke-linejoin: miter"/>
</g>
<g id="patch_85">
<path d="M 554.08 144.79 L 559.69 144.79 L 559.69 131.99 L 554.08 131.99 z
" clip-path="url(#p63c5d4109b)" style="fill: #99ff66; stroke: #000000; stroke-width: 0.6; stroke-linejoin: miter"/>
</g>
<g id="patch_86">
<path d="M 567.81 144.79 L 573.42 144.79 L 573.42 133.35 L 567.81 133.35 z
" clip-path="url(#p63c5d4109b)" style="fill: #99ff66; stroke: #000000; stroke-width: 0.6; stroke-linejoin: miter"/>
</g>
<g id="patch_87">
<path d="M 581.54 144.79 L 587.15 144.79 L 587.15 89.63 L 581.54 89.63 z
" clip-path="url(#p63c5d4109b)" style="fill: #99ff66; stroke: #000000; stroke-width: 0.6; stroke-linejoin: miter"/>
</g>
<g id="patch_88">
<path d="M 595.28 144.79 L 600.88 144.79 L 600.88 76.53 L 595.28 76.53 z
" clip-path="url(#p63c5d4109b)" style="fill: #99ff66; stroke: #000000; stroke-width: 0.6; stroke-linejoin: miter"/>
</g>
<g id="line2d_74">
<path d="M 46.04 147.6 L 51.64 147.6 " clip-path="url(#p63c5d4109b)" style="fill: none; stroke: #000000; stroke-width: 0.6"/>
</g>
<g id="line2d_75">
<path d="M 59.77 147.6 L 65.38 147.6 " clip-path="url(#p63c5d4109b)" style="fill: none; stroke: #000000; stroke-width: 0.6"/>
</g>
<g id="line2d_76">
<path d="M 73.5 146.84 L 79.11 146.84 " clip-path="url(#p63c5d4109b)" style="fill: none; stroke: #000000; stroke-width: 0.6"/>
</g>
<g id="line2d_77">
<path d="M 87.23 143.81 L 92.84 143.81 " clip-path="url(#p63c5d4109b)" style="fill: none; stroke: #000000; stroke-width: 0.6"/>
</g>
<g id="line2d_78">
<path d="M 100.96 145.32 L 106.57 145.32 " clip-path="url(#p63c5d4109b)" style="fill: none; stroke: #000000; stroke-width: 0.6"/>
</g>
<g id="line2d_79">
<path d="M 114.69 118.81 L 120.3 118.81 " clip-path="url(#p63c5d4109b)" style="fill: none; stroke: #000000; stroke-width: 0.6"/>
</g>
<g id="line2d_80">
<path d="M 128.42 138.5 L 134.03 138.5 " clip-path="url(#p63c5d4109b)" style="fill: none; stroke: #000000; stroke-width: 0.6"/>
</g>
<g id="line2d_81">
<path d="M 142.15 145.32 L 147.76 145.32 " clip-path="url(#p63c5d4109b)" style="fill: none; stroke: #000000; stroke-width: 0.6"/>
</g>
<g id="line2d_82">
<path d="M 155.89 141.54 L 161.49 141.54 " clip-path="url(#p63c5d4109b)" style="fill: none; stroke: #000000; stroke-width: 0.6"/>
</g>
<g id="line2d_83">
<path d="M 169.62 144.95 L 175.22 144.95 " clip-path="url(#p63c5d4109b)" style="fill: none; stroke: #000000; stroke-width: 0.6"/>
</g>
<g id="line2d_84">
<path d="M 183.35 145.32 L 188.95 145.32 " clip-path="url(#p63c5d4109b)" style="fill: none; stroke: #000000; stroke-width: 0.6"/>
</g>
<g id="line2d_85">
<path d="M 197.08 145.7 L 202.69 145.7 " clip-path="url(#p63c5d4109b)" style="fill: none; stroke: #000000; stroke-width: 0.6"/>
</g>
<g id="line2d_86">
<path d="M 210.81 145.7 L 216.42 145.7 " clip-path="url(#p63c5d4109b)" style="fill: none; stroke: #000000; stroke-width: 0.6"/>
</g>
<g id="line2d_87">
<path d="M 224.54 145.7 L 230.15 145.7 " clip-path="url(#p63c5d4109b)" style="fill: none; stroke: #000000; stroke-width: 0.6"/>
</g>
<g id="line2d_88">
<path d="M 238.27 145.7 L 243.88 145.7 " clip-path="url(#p63c5d4109b)" style="fill: none; stroke: #000000; stroke-width: 0.6"/>
</g>
<g id="line2d_89">
<path d="M 252 145.7 L 257.61 145.7 " clip-path="url(#p63c5d4109b)" style="fill: none; stroke: #000000; stroke-width: 0.6"/>
</g>
<g id="line2d_90">
<path d="M 265.73 145.32 L 271.34 145.32 " clip-path="url(#p63c5d4109b)" style="fill: none; stroke: #000000; stroke-width: 0.6"/>
</g>
<g id="line2d_91">
<path d="M 279.46 145.32 L 285.07 145.32 " clip-path="url(#p63c5d4109b)" style="fill: none; stroke: #000000; stroke-width: 0.6"/>
</g>
<g id="line2d_92">
<path d="M 293.19 144.95 L 298.8 144.95 " clip-path="url(#p63c5d4109b)" style="fill: none; stroke: #000000; stroke-width: 0.6"/>
</g>
<g id="line2d_93">
<path d="M 306.93 145.32 L 312.53 145.32 " clip-path="url(#p63c5d4109b)" style="fill: none; stroke: #000000; stroke-width: 0.6"/>
</g>
<g id="line2d_94">
<path d="M 320.66 145.32 L 326.26 145.32 " clip-path="url(#p63c5d4109b)" style="fill: none; stroke: #000000; stroke-width: 0.6"/>
</g>
<g id="line2d_95">
<path d="M 334.39 145.32 L 339.99 145.32 " clip-path="url(#p63c5d4109b)" style="fill: none; stroke: #000000; stroke-width: 0.6"/>
</g>
<g id="line2d_96">
<path d="M 348.12 144.57 L 353.73 144.57 " clip-path="url(#p63c5d4109b)" style="fill: none; stroke: #000000; stroke-width: 0.6"/>
</g>
<g id="line2d_97">
<path d="M 361.85 143.81 L 367.46 143.81 " clip-path="url(#p63c5d4109b)" style="fill: none; stroke: #000000; stroke-width: 0.6"/>
</g>
<g id="line2d_98">
<path d="M 375.58 140.63 L 381.19 140.63 " clip-path="url(#p63c5d4109b)" style="fill: none; stroke: #000000; stroke-width: 0.6"/>
</g>
<g id="line2d_99">
<path d="M 389.31 139.34 L 394.92 139.34 " clip-path="url(#p63c5d4109b)" style="fill: none; stroke: #000000; stroke-width: 0.6"/>
</g>
<g id="line2d_100">
<path d="M 403.04 136.23 L 408.65 136.23 " clip-path="url(#p63c5d4109b)" style="fill: none; stroke: #000000; stroke-width: 0.6"/>
</g>
<g id="line2d_101">
<path d="M 416.77 132.97 L 422.38 132.97 " clip-path="url(#p63c5d4109b)" style="fill: none; stroke: #000000; stroke-width: 0.6"/>
</g>
<g id="line2d_102">
<path d="M 430.5 126 L 436.11 126 " clip-path="url(#p63c5d4109b)" style="fill: none; stroke: #000000; stroke-width: 0.6"/>
</g>
<g id="line2d_103">
<path d="M 444.23 119.56 L 449.84 119.56 " clip-path="url(#p63c5d4109b)" style="fill: none; stroke: #000000; stroke-width: 0.6"/>
</g>
<g id="line2d_104">
<path d="M 457.97 130.17 L 463.57 130.17 " clip-path="url(#p63c5d4109b)" style="fill: none; stroke: #000000; stroke-width: 0.6"/>
</g>
<g id="line2d_105">
<path d="M 471.7 95.32 L 477.3 95.32 " clip-path="url(#p63c5d4109b)" style="fill: none; stroke: #000000; stroke-width: 0.6"/>
</g>
<g id="line2d_106">
<path d="M 485.43 86.22 L 491.03 86.22 " clip-path="url(#p63c5d4109b)" style="fill: none; stroke: #000000; stroke-width: 0.6"/>
</g>
<g id="line2d_107">
<path d="M 499.16 117.74 L 504.77 117.74 " clip-path="url(#p63c5d4109b)" style="fill: none; stroke: #000000; stroke-width: 0.6"/>
</g>
<g id="line2d_108">
<path d="M 512.89 128.66 L 518.5 128.66 " clip-path="url(#p63c5d4109b)" style="fill: none; stroke: #000000; stroke-width: 0.6"/>
</g>
<g id="line2d_109">
<path d="M 526.62 138.73 L 532.23 138.73 " clip-path="url(#p63c5d4109b)" style="fill: none; stroke: #000000; stroke-width: 0.6"/>
</g>
<g id="line2d_110">
<path d="M 540.35 143.13 L 545.96 143.13 " clip-path="url(#p63c5d4109b)" style="fill: none; stroke: #000000; stroke-width: 0.6"/>
</g>
<g id="line2d_111">
<path d="M 554.08 140.02 L 559.69 140.02 " clip-path="url(#p63c5d4109b)" style="fill: none; stroke: #000000; stroke-width: 0.6"/>
</g>
<g id="line2d_112">
<path d="M 567.81 141.54 L 573.42 141.54 " clip-path="url(#p63c5d4109b)" style="fill: none; stroke: #000000; stroke-width: 0.6"/>
</g>
<g id="line2d_113">
<path d="M 581.54 124.87 L 587.15 124.87 " clip-path="url(#p63c5d4109b)" style="fill: none; stroke: #000000; stroke-width: 0.6"/>
</g>
<g id="line2d_114">
<path d="M 595.28 116.91 L 600.88 116.91 " clip-path="url(#p63c5d4109b)" style="fill: none; stroke: #000000; stroke-width: 0.6"/>
</g>
<g id="line2d_115">
<path d="M 48.84 147.6 L 62.57 147.6 L 76.3 147.22 L 90.03 145.7 L 103.77 145.1 L 117.5 115.02 L 131.23 145.1 L 144.96 145.32 L 158.69 144.57 L 172.42 145.1 L 186.15 145.32 L 199.88 145.7 L 213.61 145.7 L 227.34 145.7 L 241.07 145.7 L 254.81 145.7 L 268.54 145.1 L 282.27 145.32 L 296 145.7 L 309.73 145.7 L 323.46 145.7 L 337.19 145.7 L 350.92 145.7 L 364.65 145.7 L 378.38 145.32 L 392.11 144.79 L 405.85 135.93 L 419.58 85.47 L 433.31 137.44 L 447.04 119.18 L 460.77 101.38 L 474.5 72.43 L 488.23 90.47 L 501.96 95.54 L 515.69 72.06 L 529.42 72.06 L 543.15 72.06 L 556.89 108.2 L 570.62 144.79 L 584.35 144.79 L 598.08 72.06 " clip-path="url(#p63c5d4109b)" style="fill: none; stroke: #ff0000; stroke-linecap: square"/>
</g>
<g id="line2d_116">
<path d="M 48.84 147.6 L 62.57 147.6 L 76.3 146.69 L 90.03 132.44 L 103.77 136.99 L 117.5 121.84 L 131.23 138.96 L 144.96 138.05 L 158.69 133.2 L 172.42 142.29 L 186.15 143.05 L 199.88 145.1 L 213.61 145.7 L 227.34 145.7 L 241.07 145.7 L 254.81 145.63 L 268.54 141.91 L 282.27 134.72 L 296 128.66 L 309.73 128.28 L 323.46 139.72 L 337.19 144.41 L 350.92 143.05 L 364.65 128.28 L 378.38 118.81 L 392.11 119.94 L 405.85 119.03 L 419.58 117.29 L 433.31 112.29 L 447.04 115.77 L 460.77 119.03 L 474.5 105.92 L 488.23 103.65 L 501.96 120.32 L 515.69 117.29 L 529.42 117.74 L 543.15 118.43 L 556.89 129.79 L 570.62 131.08 L 584.35 120.93 L 598.08 113.05 " clip-path="url(#p63c5d4109b)" style="fill: none; stroke: #0000ff; stroke-linecap: square"/>
</g>
</g>
<g id="axes_2">
<g id="patch_89">
<path d="M 41.98 253.66 L 604.94 253.66 L 604.94 170.57 L 41.98 170.57 z
" style="fill: #ffffff"/>
</g>
<g id="matplotlib.axis_3">
<g id="xtick_12">
<g id="line2d_117">
<path d="M 48.84 253.66 L 48.84 170.57 " clip-path="url(#p84e7c9f761)" style="fill: none; stroke-dasharray: 1.85,0.8; stroke-dashoffset: 0; stroke: #b0b0b0; stroke-opacity: 0.6; stroke-width: 0.5"/>
</g>
<g id="line2d_118">
<g>
<use href="#mde36ec28b2" x="48.84" y="253.66" style="stroke: #000000; stroke-width: 0.8"/>
</g>
</g>
</g>
<g id="xtick_13">
<g id="line2d_119">
<path d="M 103.77 253.66 L 103.77 170.57 " clip-path="url(#p84e7c9f761)" style="fill: none; stroke-dasharray: 1.85,0.8; stroke-dashoffset: 0; stroke: #b0b0b0; stroke-opacity: 0.6; stroke-width: 0.5"/>
</g>
<g id="line2d_120">
<g>
<use href="#mde36ec28b2" x="103.77" y="253.66" style="stroke: #000000; stroke-width: 0.8"/>
</g>
</g>
</g>
<g id="xtick_14">
<g id="line2d_121">
<path d="M 158.69 253.66 L 158.69 170.57 " clip-path="url(#p84e7c9f761)" style="fill: none; stroke-dasharray: 1.85,0.8; stroke-dashoffset: 0; stroke: #b0b0b0; stroke-opacity: 0.6; stroke-width: 0.5"/>
</g>
<g id="line2d_122">
<g>
<use href="#mde36ec28b2" x="158.69" y="253.66" style="stroke: #000000; stroke-width: 0.8"/>
</g>
</g>
</g>
<g id="xtick_15">
<g id="line2d_123">
<path d="M 213.61 253.66 L 213.61 170.57 " clip-path="url(#p84e7c9f761)" style="fill: none; stroke-dasharray: 1.85,0.8; stroke-dashoffset: 0; stroke: #b0b0b0; stroke-opacity: 0.6; stroke-width: 0.5"/>
</g>
<g id="line2d_124">
<g>
<use href="#mde36ec28b2" x="213.61" y="253.66" style="stroke: #000000; stroke-width: 0.8"/>
</g>
</g>
</g>
<g id="xtick_16">
<g id="line2d_125">
<path d="M 268.54 253.66 L 268.54 170.57 " clip-path="url(#p84e7c9f761)" style="fill: none; stroke-dasharray: 1.85,0.8; stroke-dashoffset: 0; stroke: #b0b0b0; stroke-opacity: 0.6; stroke-width: 0.5"/>
</g>
<g id="line2d_126">
<g>
<use href="#mde36ec28b2" x="268.54" y="253.66" style="stroke: #000000; stroke-width: 0.8"/>
</g>
</g>
</g>
<g id="xtick_17">
<g id="line2d_127">
<path d="M 323.46 253.66 L 323.46 170.57 " clip-path="url(#p84e7c9f761)" style="fill: none; stroke-dasharray: 1.85,0.8; stroke-dashoffset: 0; stroke: #b0b0b0; stroke-opacity: 0.6; stroke-width: 0.5"/>
</g>
<g id="line2d_128">
<g>
<use href="#mde36ec28b2" x="323.46" y="253.66" style="stroke: #000000; stroke-width: 0.8"/>
</g>
</g>
</g>
<g id="xtick_18">
<g id="line2d_129">
<path d="M 378.38 253.66 L 378.38 170.57 " clip-path="url(#p84e7c9f761)" style="fill: none; stroke-dasharray: 1.85,0.8; stroke-dashoffset: 0; stroke: #b0b0b0; stroke-opacity: 0.6; stroke-width: 0.5"/>
</g>
<g id="line2d_130">
<g>
<use href="#mde36ec28b2" x="378.38" y="253.66" style="stroke: #000000; stroke-width: 0.8"/>
</g>
</g>
</g>
<g id="xtick_19">
<g id="line2d_131">
<path d="M 433.31 253.66 L 433.31 170.57 " clip-path="url(#p84e7c9f761)" style="fill: none; stroke-dasharray: 1.85,0.8; stroke-dashoffset: 0; stroke: #b0b0b0; stroke-opacity: 0.6; stroke-width: 0.5"/>
</g>
<g id="line2d_132">
<g>
<use href="#mde36ec28b2" x="433.31" y="253.66" style="stroke: #000000; stroke-width: 0.8"/>
</g>
</g>
</g>
<g id="xtick_20">
<g id="line2d_133">
<path d="M 488.23 253.66 L 488.23 170.57 " clip-path="url(#p84e7c9f761)" style="fill: none; stroke-dasharray: 1.85,0.8; stroke-dashoffset: 0; stroke: #b0b0b0; stroke-opacity: 0.6; stroke-width: 0.5"/>
</g>
<g id="line2d_134">
<g>
<use href="#mde36ec28b2" x="488.23" y="253.66" style="stroke: #000000; stroke-width: 0.8"/>
</g>
</g>
</g>
<g id="xtick_21">
<g id="line2d_135">
<path d="M 543.15 253.66 L 543.15 170.57 " clip-path="url(#p84e7c9f761)" style="fill: none; stroke-dasharray: 1.85,0.8; stroke-dashoffset: 0; stroke: #b0b0b0; stroke-opacity: 0.6; stroke-width: 0.5"/>
</g>
<g id="line2d_136">
<g>
<use href="#mde36ec28b2" x="543.15" y="253.66" style="stroke: #000000; stroke-width: 0.8"/>
</g>
</g>
</g>
<g id="xtick_22">
<g id="line2d_137">
<path d="M 598.08 253.66 L 598.08 170.57 " clip-path="url(#p84e7c9f761)" style="fill: none; stroke-dasharray: 1.85,0.8; stroke-dashoffset: 0; stroke: #b0b0b0; stroke-opacity: 0.6; stroke-width: 0.5"/>
</g>
<g id="line2d_138">
<g>
<use href="#mde36ec28b2" x="598.08" y="253.66" style="stroke: #000000; stroke-width: 0.8"/>
</g>
</g>
</g>
</g>
<g id="matplotlib.axis_4">
<g id="ytick_6">
<g id="line2d_139">
<path d="M 41.98 250.09 L 604.94 250.09 " clip-path="url(#p84e7c9f761)" style="fill: none; stroke-dasharray: 1.85,0.8; stroke-dashoffset: 0; stroke: #b0b0b0; stroke-opacity: 0.6; stroke-width: 0.5"/>
</g>
<g id="line2d_140">
<g>
<use href="#mc78ae8635a" x="41.98" y="250.09" style="stroke: #000000; stroke-width: 0.8"/>
</g>
</g>
<g id="text_6">
<text style="font-size: 8.28px; font-family: 'Liberation Sans'; text-anchor: end" x="34.98" y="253.12" transform="rotate(-0 34.98 253.12)" textLength="26.65" lengthAdjust="spacingAndGlyphs">0.0000</text>
</g>
</g>
<g id="ytick_7">
<g id="line2d_141">
<path d="M 41.98 232.27 L 604.94 232.27 " clip-path="url(#p84e7c9f761)" style="fill: none; stroke-dasharray: 1.85,0.8; stroke-dashoffset: 0; stroke: #b0b0b0; stroke-opacity: 0.6; stroke-width: 0.5"/>
</g>
<g id="line2d_142">
<g>
<use href="#mc78ae8635a" x="41.98" y="232.27" style="stroke: #000000; stroke-width: 0.8"/>
</g>
</g>
<g id="text_7">
<text style="font-size: 8.28px; font-family: 'Liberation Sans'; text-anchor: end" x="34.98" y="235.31" transform="rotate(-0 34.98 235.31)" textLength="26.65" lengthAdjust="spacingAndGlyphs">0.0025</text>
</g>
</g>
<g id="ytick_8">
<g id="line2d_143">
<path d="M 41.98 214.45 L 604.94 214.45 " clip-path="url(#p84e7c9f761)" style="fill: none; stroke-dasharray: 1.85,0.8; stroke-dashoffset: 0; stroke: #b0b0b0; stroke-opacity: 0.6; stroke-width: 0.5"/>
</g>
<g id="line2d_144">
<g>
<use href="#mc78ae8635a" x="41.98" y="214.45" style="stroke: #000000; stroke-width: 0.8"/>
</g>
</g>
<g id="text_8">
<text style="font-size: 8.28px; font-family: 'Liberation Sans'; text-anchor: end" x="34.98" y="217.49" transform="rotate(-0 34.98 217.49)" textLength="26.65" lengthAdjust="spacingAndGlyphs">0.0050</text>
</g>
</g>
<g id="ytick_9">
<g id="line2d_145">
<path d="M 41.98 196.64 L 604.94 196.64 " clip-path="url(#p84e7c9f761)" style="fill: none; stroke-dasharray: 1.85,0.8; stroke-dashoffset: 0; stroke: #b0b0b0; stroke-opacity: 0.6; stroke-width: 0.5"/>
</g>
<g id="line2d_146">
<g>
<use href="#mc78ae8635a" x="41.98" y="196.64" style="stroke: #000000; stroke-width: 0.8"/>
</g>
</g>
<g id="text_9">
<text style="font-size: 8.28px; font-family: 'Liberation Sans'; text-anchor: end" x="34.98" y="199.68" transform="rotate(-0 34.98 199.68)" textLength="26.65" lengthAdjust="spacingAndGlyphs">0.0075</text>
</g>
</g>
<g id="ytick_10">
<g id="line2d_147">
<path d="M 41.98 178.82 L 604.94 178.82 " clip-path="url(#p84e7c9f761)" style="fill: none; stroke-dasharray: 1.85,0.8; stroke-dashoffset: 0; stroke: #b0b0b0; stroke-opacity: 0.6; stroke-width: 0.5"/>
</g>
<g id="line2d_148">
<g>
<use href="#mc78ae8635a" x="41.98" y="178.82" style="stroke: #000000; stroke-width: 0.8"/>
</g>
</g>
<g id="text_10">
<text style="font-size: 8.28px; font-family: 'Liberation Sans'; text-anchor: end" x="34.98" y="181.86" transform="rotate(-0 34.98 181.86)" textLength="26.65" lengthAdjust="spacingAndGlyphs">0.0100</text>
</g>
</g>
</g>
<g id="line2d_149">
<path d="M 48.84 250.09 L 48.84 250.09 " clip-path="url(#p84e7c9f761)" style="fill: none; stroke: #3a3a3a; stroke-width: 0.8"/>
</g>
<g id="line2d_150">
<path d="M 62.57 250.09 L 62.57 250.09 " clip-path="url(#p84e7c9f761)" style="fill: none; stroke: #3a3a3a; stroke-width: 0.8"/>
</g>
<g id="line2d_151">
<path d="M 76.3 250.09 L 76.3 243.46 " clip-path="url(#p84e7c9f761)" style="fill: none; stroke: #3a3a3a; stroke-width: 0.8"/>
</g>
<g id="line2d_152">
<path d="M 90.03 250.09 L 90.03 250.09 " clip-path="url(#p84e7c9f761)" style="fill: none; stroke: #3a3a3a; stroke-width: 0.8"/>
</g>
<g id="line2d_153">
<path d="M 103.77 250.09 L 103.77 250.09 " clip-path="url(#p84e7c9f761)" style="fill: none; stroke: #3a3a3a; stroke-width: 0.8"/>
</g>
<g id="line2d_154">
<path d="M 117.5 250.09 L 117.5 250.09 " clip-path="url(#p84e7c9f761)" style="fill: none; stroke: #3a3a3a; stroke-width: 0.8"/>
</g>
<g id="line2d_155">
<path d="M 131.23 250.09 L 131.23 193.79 " clip-path="url(#p84e7c9f761)" style="fill: none; stroke: #3a3a3a; stroke-width: 0.8"/>
</g>
<g id="line2d_156">
<path d="M 144.96 250.09 L 144.96 250.09 " clip-path="url(#p84e7c9f761)" style="fill: none; stroke: #3a3a3a; stroke-width: 0.8"/>
</g>
<g id="line2d_157">
<path d="M 158.69 250.09 L 158.69 250.09 " clip-path="url(#p84e7c9f761)" style="fill: none; stroke: #3a3a3a; stroke-width: 0.8"/>
</g>
<g id="line2d_158">
<path d="M 172.42 250.09 L 172.42 247.95 " clip-path="url(#p84e7c9f761)" style="fill: none; stroke: #3a3a3a; stroke-width: 0.8"/>
</g>
<g id="line2d_159">
<path d="M 186.15 250.09 L 186.15 250.09 " clip-path="url(#p84e7c9f761)" style="fill: none; stroke: #3a3a3a; stroke-width: 0.8"/>
</g>
<g id="line2d_160">
<path d="M 199.88 250.09 L 199.88 250.09 " clip-path="url(#p84e7c9f761)" style="fill: none; stroke: #3a3a3a; stroke-width: 0.8"/>
</g>
<g id="line2d_161">
<path d="M 213.61 250.09 L 213.61 250.09 " clip-path="url(#p84e7c9f761)" style="fill: none; stroke: #3a3a3a; stroke-width: 0.8"/>
</g>
<g id="line2d_162">
<path d="M 227.34 250.09 L 227.34 250.09 " clip-path="url(#p84e7c9f761)" style="fill: none; stroke: #3a3a3a; stroke-width: 0.8"/>
</g>
<g id="line2d_163">
<path d="M 241.07 250.09 L 241.07 250.09 " clip-path="url(#p84e7c9f761)" style="fill: none; stroke: #3a3a3a; stroke-width: 0.8"/>
</g>
<g id="line2d_164">
<path d="M 254.81 250.09 L 254.81 250.09 " clip-path="url(#p84e7c9f761)" style="fill: none; stroke: #3a3a3a; stroke-width: 0.8"/>
</g>
<g id="line2d_165">
<path d="M 268.54 250.09 L 268.54 250.09 " clip-path="url(#p84e7c9f761)" style="fill: none; stroke: #3a3a3a; stroke-width: 0.8"/>
</g>
<g id="line2d_166">
<path d="M 282.27 250.09 L 282.27 250.09 " clip-path="url(#p84e7c9f761)" style="fill: none; stroke: #3a3a3a; stroke-width: 0.8"/>
</g>
<g id="line2d_167">
<path d="M 296 250.09 L 296 250.09 " clip-path="url(#p84e7c9f761)" style="fill: none; stroke: #3a3a3a; stroke-width: 0.8"/>
</g>
<g id="line2d_168">
<path d="M 309.73 250.09 L 309.73 250.09 " clip-path="url(#p84e7c9f761)" style="fill: none; stroke: #3a3a3a; stroke-width: 0.8"/>
</g>
<g id="line2d_169">
<path d="M 323.46 250.09 L 323.46 250.09 " clip-path="url(#p84e7c9f761)" style="fill: none; stroke: #3a3a3a; stroke-width: 0.8"/>
</g>
<g id="line2d_170">
<path d="M 337.19 250.09 L 337.19 250.09 " clip-path="url(#p84e7c9f761)" style="fill: none; stroke: #3a3a3a; stroke-width: 0.8"/>
</g>
<g id="line2d_171">
<path d="M 350.92 250.09 L 350.92 250.09 " clip-path="url(#p84e7c9f761)" style="fill: none; stroke: #3a3a3a; stroke-width: 0.8"/>
</g>
<g id="line2d_172">
<path d="M 364.65 250.09 L 364.65 250.09 " clip-path="url(#p84e7c9f761)" style="fill: none; stroke: #3a3a3a; stroke-width: 0.8"/>
</g>
<g id="line2d_173">
<path d="M 378.38 250.09 L 378.38 250.09 " clip-path="url(#p84e7c9f761)" style="fill: none; stroke: #3a3a3a; stroke-width: 0.8"/>
</g>
<g id="line2d_174">
<path d="M 392.11 250.09 L 392.11 197.35 " clip-path="url(#p84e7c9f761)" style="fill: none; stroke: #3a3a3a; stroke-width: 0.8"/>
</g>
<g id="line2d_175">
<path d="M 405.85 250.09 L 405.85 250.09 " clip-path="url(#p84e7c9f761)" style="fill: none; stroke: #3a3a3a; stroke-width: 0.8"/>
</g>
<g id="line2d_176">
<path d="M 419.58 250.09 L 419.58 250.09 " clip-path="url(#p84e7c9f761)" style="fill: none; stroke: #3a3a3a; stroke-width: 0.8"/>
</g>
<g id="line2d_177">
<path d="M 433.31 250.09 L 433.31 250.09 " clip-path="url(#p84e7c9f761)" style="fill: none; stroke: #3a3a3a; stroke-width: 0.8"/>
</g>
<g id="line2d_178">
<path d="M 447.04 250.09 L 447.04 250.09 " clip-path="url(#p84e7c9f761)" style="fill: none; stroke: #3a3a3a; stroke-width: 0.8"/>
</g>
<g id="line2d_179">
<path d="M 460.77 250.09 L 460.77 250.09 " clip-path="url(#p84e7c9f761)" style="fill: none; stroke: #3a3a3a; stroke-width: 0.8"/>
</g>
<g id="line2d_180">
<path d="M 474.5 250.09 L 474.5 250.09 " clip-path="url(#p84e7c9f761)" style="fill: none; stroke: #3a3a3a; stroke-width: 0.8"/>
</g>
<g id="line2d_181">
<path d="M 488.23 250.09 L 488.23 250.09 " clip-path="url(#p84e7c9f761)" style="fill: none; stroke: #3a3a3a; stroke-width: 0.8"/>
</g>
<g id="line2d_182">
<path d="M 501.96 250.09 L 501.96 250.09 " clip-path="url(#p84e7c9f761)" style="fill: none; stroke: #3a3a3a; stroke-width: 0.8"/>
</g>
<g id="line2d_183">
<path d="M 515.69 250.09 L 515.69 250.09 " clip-path="url(#p84e7c9f761)" style="fill: none; stroke: #3a3a3a; stroke-width: 0.8"/>
</g>
<g id="line2d_184">
<path d="M 529.42 250.09 L 529.42 250.09 " clip-path="url(#p84e7c9f761)" style="fill: none; stroke: #3a3a3a; stroke-width: 0.8"/>
</g>
<g id="line2d_185">
<path d="M 543.15 250.09 L 543.15 250.09 " clip-path="url(#p84e7c9f761)" style="fill: none; stroke: #3a3a3a; stroke-width: 0.8"/>
</g>
<g id="line2d_186">
<path d="M 556.89 250.09 L 556.89 250.09 " clip-path="url(#p84e7c9f761)" style="fill: none; stroke: #3a3a3a; stroke-width: 0.8"/>
</g>
<g id="line2d_187">
<path d="M 570.62 250.09 L 570.62 250.09 " clip-path="url(#p84e7c9f761)" style="fill: none; stroke: #3a3a3a; stroke-width: 0.8"/>
</g>
<g id="line2d_188">
<path d="M 584.35 250.09 L 584.35 173.83 " clip-path="url(#p84e7c9f761)" style="fill: none; stroke: #3a3a3a; stroke-width: 0.8"/>
</g>
<g id="line2d_189">
<path d="M 598.08 250.09 L 598.08 250.09 " clip-path="url(#p84e7c9f761)" style="fill: none; stroke: #3a3a3a; stroke-width: 0.8"/>
</g>
<g id="patch_90">
<path d="M 41.98 253.66 L 41.98 170.57 " style="fill: none; stroke: #000000; stroke-width: 0.8; stroke-linejoin: miter; stroke-linecap: square"/>
</g>
<g id="patch_91">
<path d="M 604.94 253.66 L 604.94 170.57 " style="fill: none; stroke: #000000; stroke-width: 0.8; stroke-linejoin: miter; stroke-linecap: square"/>
</g>
<g id="patch_92">
<path d="M 41.98 253.66 L 604.94 253.66 " style="fill: none; stroke: #000000; stroke-width: 0.8; stroke-linejoin: miter; stroke-linecap: square"/>
</g>
<g id="patch_93">
<path d="M 41.98 170.57 L 604.94 170.57 " style="fill: none; stroke: #000000; stroke-width: 0.8; stroke-linejoin: miter; stroke-linecap: square"/>
</g>
<g id="patch_94">
<path d="M 47.41 250.09 L 50.27 250.09 L 50.27 250.09 L 47.41 250.09 z
" clip-path="url(#p84e7c9f761)" style="fill: #99ff66; stroke: #000000; stroke-width: 0.6; stroke-linejoin: miter"/>
</g>
<g id="patch_95">
<path d="M 61.14 250.09 L 64 250.09 L 64 250.09 L 61.14 250.09 z
" clip-path="url(#p84e7c9f761)" style="fill: #99ff66; stroke: #000000; stroke-width: 0.6; stroke-linejoin: miter"/>
</g>
<g id="patch_96">
<path d="M 74.87 250.09 L 77.73 250.09 L 77.73 248.8 L 74.87 248.8 z
" clip-path="url(#p84e7c9f761)" style="fill: #99ff66; stroke: #000000; stroke-width: 0.6; stroke-linejoin: miter"/>
</g>
<g id="patch_97">
<path d="M 88.6 250.09 L 91.46 250.09 L 91.46 250.09 L 88.6 250.09 z
" clip-path="url(#p84e7c9f761)" style="fill: #99ff66; stroke: #000000; stroke-width: 0.6; stroke-linejoin: miter"/>
</g>
<g id="patch_98">
<path d="M 102.33 250.09 L 105.2 250.09 L 105.2 250.09 L 102.33 250.09 z
" clip-path="url(#p84e7c9f761)" style="fill: #99ff66; stroke: #000000; stroke-width: 0.6; stroke-linejoin: miter"/>
</g>
<g id="patch_99">
<path d="M 116.07 250.09 L 118.93 250.09 L 118.93 250.09 L 116.07 250.09 z
" clip-path="url(#p84e7c9f761)" style="fill: #99ff66; stroke: #000000; stroke-width: 0.6; stroke-linejoin: miter"/>
</g>
<g id="patch_100">
<path d="M 129.8 247.38 L 132.66 247.38 L 132.66 202.77 L 129.8 202.77 z
" clip-path="url(#p84e7c9f761)" style="fill: #99ff66; stroke: #000000; stroke-width: 0.6; stroke-linejoin: miter"/>
</g>
<g id="patch_101">
<path d="M 143.53 250.09 L 146.39 250.09 L 146.39 250.09 L 143.53 250.09 z
" clip-path="url(#p84e7c9f761)" style="fill: #99ff66; stroke: #000000; stroke-width: 0.6; stroke-linejoin: miter"/>
</g>
<g id="patch_102">
<path d="M 157.26 250.09 L 160.12 250.09 L 160.12 250.09 L 157.26 250.09 z
" clip-path="url(#p84e7c9f761)" style="fill: #99ff66; stroke: #000000; stroke-width: 0.6; stroke-linejoin: miter"/>
</g>
<g id="patch_103">
<path d="M 170.99 250.09 L 173.85 250.09 L 173.85 249.94 L 170.99 249.94 z
" clip-path="url(#p84e7c9f761)" style="fill: #99ff66; stroke: #000000; stroke-width: 0.6; stroke-linejoin: miter"/>
</g>
<g id="patch_104">
<path d="M 184.72 250.09 L 187.58 250.09 L 187.58 250.09 L 184.72 250.09 z
" clip-path="url(#p84e7c9f761)" style="fill: #99ff66; stroke: #000000; stroke-width: 0.6; stroke-linejoin: miter"/>
</g>
<g id="patch_105">
<path d="M 198.45 250.09 L 201.31 250.09 L 201.31 250.09 L 198.45 250.09 z
" clip-path="url(#p84e7c9f761)" style="fill: #99ff66; stroke: #000000; stroke-width: 0.6; stroke-linejoin: miter"/>
</g>
<g id="patch_106">
<path d="M 212.18 250.09 L 215.04 250.09 L 215.04 250.09 L 212.18 250.09 z
" clip-path="url(#p84e7c9f761)" style="fill: #99ff66; stroke: #000000; stroke-width: 0.6; stroke-linejoin: miter"/>
</g>
<g id="patch_107">
<path d="M 225.91 250.09 L 228.77 250.09 L 228.77 250.09 L 225.91 250.09 z
" clip-path="url(#p84e7c9f761)" style="fill: #99ff66; stroke: #000000; stroke-width: 0.6; stroke-linejoin: miter"/>
</g>
<g id="patch_108">
<path d="M 239.64 250.09 L 242.5 250.09 L 242.5 250.09 L 239.64 250.09 z
" clip-path="url(#p84e7c9f761)" style="fill: #99ff66; stroke: #000000; stroke-width: 0.6; stroke-linejoin: miter"/>
</g>
<g id="patch_109">
<path d="M 253.38 250.09 L 256.24 250.09 L 256.24 250.09 L 253.38 250.09 z
" clip-path="url(#p84e7c9f761)" style="fill: #99ff66; stroke: #000000; stroke-width: 0.6; stroke-linejoin: miter"/>
</g>
<g id="patch_110">
<path d="M 267.11 250.09 L 269.97 250.09 L 269.97 250.09 L 267.11 250.09 z
" clip-path="url(#p84e7c9f761)" style="fill: #99ff66; stroke: #000000; stroke-width: 0.6; stroke-linejoin: miter"/>
</g>
<g id="patch_111">
<path d="M 280.84 250.09 L 283.7 250.09 L 283.7 250.09 L 280.84 250.09 z
" clip-path="url(#p84e7c9f761)" style="fill: #99ff66; stroke: #000000; stroke-width: 0.6; stroke-linejoin: miter"/>
</g>
<g id="patch_112">
<path d="M 294.57 250.09 L 297.43 250.09 L 297.43 250.09 L 294.57 250.09 z
" clip-path="url(#p84e7c9f761)" style="fill: #99ff66; stroke: #000000; stroke-width: 0.6; stroke-linejoin: miter"/>
</g>
<g id="patch_113">
<path d="M 308.3 250.09 L 311.16 250.09 L 311.16 250.09 L 308.3 250.09 z
" clip-path="url(#p84e7c9f761)" style="fill: #99ff66; stroke: #000000; stroke-width: 0.6; stroke-linejoin: miter"/>
</g>
<g id="patch_114">
<path d="M 322.03 250.09 L 324.89 250.09 L 324.89 250.09 L 322.03 250.09 z
" clip-path="url(#p84e7c9f761)" style="fill: #99ff66; stroke: #000000; stroke-width: 0.6; stroke-linejoin: miter"/>
</g>
<g id="patch_115">
<path d="M 335.76 250.09 L 338.62 250.09 L 338.62 250.09 L 335.76 250.09 z
" clip-path="url(#p84e7c9f761)" style="fill: #99ff66; stroke: #000000; stroke-width: 0.6; stroke-linejoin: miter"/>
</g>
<g id="patch_116">
<path d="M 349.49 250.09 L 352.35 250.09 L 352.35 250.09 L 349.49 250.09 z
" clip-path="url(#p84e7c9f761)" style="fill: #99ff66; stroke: #000000; stroke-width: 0.6; stroke-linejoin: miter"/>
</g>
<g id="patch_117">
<path d="M 363.22 250.09 L 366.08 250.09 L 366.08 250.09 L 363.22 250.09 z
" clip-path="url(#p84e7c9f761)" style="fill: #99ff66; stroke: #000000; stroke-width: 0.6; stroke-linejoin: miter"/>
</g>
<g id="patch_118">
<path d="M 376.95 250.09 L 379.81 250.09 L 379.81 250.09 L 376.95 250.09 z
" clip-path="url(#p84e7c9f761)" style="fill: #99ff66; stroke: #000000; stroke-width: 0.6; stroke-linejoin: miter"/>
</g>
<g id="patch_119">
<path d="M 390.68 250.09 L 393.54 250.09 L 393.54 249.94 L 390.68 249.94 z
" clip-path="url(#p84e7c9f761)" style="fill: #99ff66; stroke: #000000; stroke-width: 0.6; stroke-linejoin: miter"/>
</g>
<g id="patch_120">
<path d="M 404.42 250.09 L 407.28 250.09 L 407.28 250.09 L 404.42 250.09 z
" clip-path="url(#p84e7c9f761)" style="fill: #99ff66; stroke: #000000; stroke-width: 0.6; stroke-linejoin: miter"/>
</g>
<g id="patch_121">
<path d="M 418.15 250.09 L 421.01 250.09 L 421.01 250.09 L 418.15 250.09 z
" clip-path="url(#p84e7c9f761)" style="fill: #99ff66; stroke: #000000; stroke-width: 0.6; stroke-linejoin: miter"/>
</g>
<g id="patch_122">
<path d="M 431.88 250.09 L 434.74 250.09 L 434.74 250.09 L 431.88 250.09 z
" clip-path="url(#p84e7c9f761)" style="fill: #99ff66; stroke: #000000; stroke-width: 0.6; stroke-linejoin: miter"/>
</g>
<g id="patch_123">
<path d="M 445.61 250.09 L 448.47 250.09 L 448.47 250.09 L 445.61 250.09 z
" clip-path="url(#p84e7c9f761)" style="fill: #99ff66; stroke: #000000; stroke-width: 0.6; stroke-linejoin: miter"/>
</g>
<g id="patch_124">
<path d="M 459.34 250.09 L 462.2 250.09 L 462.2 250.09 L 459.34 250.09 z
" clip-path="url(#p84e7c9f761)" style="fill: #99ff66; stroke: #000000; stroke-width: 0.6; stroke-linejoin: miter"/>
</g>
<g id="patch_125">
<path d="M 473.07 250.09 L 475.93 250.09 L 475.93 250.09 L 473.07 250.09 z
" clip-path="url(#p84e7c9f761)" style="fill: #99ff66; stroke: #000000; stroke-width: 0.6; stroke-linejoin: miter"/>
</g>
<g id="patch_126">
<path d="M 486.8 250.09 L 489.66 250.09 L 489.66 250.09 L 486.8 250.09 z
" clip-path="url(#p84e7c9f761)" style="fill: #99ff66; stroke: #000000; stroke-width: 0.6; stroke-linejoin: miter"/>
</g>
<g id="patch_127">
<path d="M 500.53 250.09 L 503.39 250.09 L 503.39 250.09 L 500.53 250.09 z
" clip-path="url(#p84e7c9f761)" style="fill: #99ff66; stroke: #000000; stroke-width: 0.6; stroke-linejoin: miter"/>
</g>
<g id="patch_128">
<path d="M 514.26 250.09 L 517.12 250.09 L 517.12 250.09 L 514.26 250.09 z
" clip-path="url(#p84e7c9f761)" style="fill: #99ff66; stroke: #000000; stroke-width: 0.6; stroke-linejoin: miter"/>
</g>
<g id="patch_129">
<path d="M 527.99 250.09 L 530.85 250.09 L 530.85 250.09 L 527.99 250.09 z
" clip-path="url(#p84e7c9f761)" style="fill: #99ff66; stroke: #000000; stroke-width: 0.6; stroke-linejoin: miter"/>
</g>
<g id="patch_130">
<path d="M 541.72 250.09 L 544.59 250.09 L 544.59 250.09 L 541.72 250.09 z
" clip-path="url(#p84e7c9f761)" style="fill: #99ff66; stroke: #000000; stroke-width: 0.6; stroke-linejoin: miter"/>
</g>
<g id="patch_131">
<path d="M 555.46 250.09 L 558.32 250.09 L 558.32 250.09 L 555.46 250.09 z
" clip-path="url(#p84e7c9f761)" style="fill: #99ff66; stroke: #000000; stroke-width: 0.6; stroke-linejoin: miter"/>
</g>
<g id="patch_132">
<path d="M 569.19 250.09 L 572.05 250.09 L 572.05 250.09 L 569.19 250.09 z
" clip-path="url(#p84e7c9f761)" style="fill: #99ff66; stroke: #000000; stroke-width: 0.6; stroke-linejoin: miter"/>
</g>
<g id="patch_133">
<path d="M 582.92 250.09 L 585.78 250.09 L 585.78 249.94 L 582.92 249.94 z
" clip-path="url(#p84e7c9f761)" style="fill: #99ff66; stroke: #000000; stroke-width: 0.6; stroke-linejoin: miter"/>
</g>
<g id="patch_134">
<path d="M 596.65 250.09 L 599.51 250.09 L 599.51 250.09 L 596.65 250.09 z
" clip-path="url(#p84e7c9f761)" style="fill: #99ff66; stroke: #000000; stroke-width: 0.6; stroke-linejoin: miter"/>
</g>
<g id="patch_135">
<path d="M 46.04 250.09 L 51.64 250.09 L 51.64 250.09 L 46.04 250.09 z
" clip-path="url(#p84e7c9f761)" style="fill: #99ff66; stroke: #000000; stroke-width: 0.6; stroke-linejoin: miter"/>
</g>
<g id="patch_136">
<path d="M 59.77 250.09 L 65.38 250.09 L 65.38 250.09 L 59.77 250.09 z
" clip-path="url(#p84e7c9f761)" style="fill: #99ff66; stroke: #000000; stroke-width: 0.6; stroke-linejoin: miter"/>
</g>
<g id="patch_137">
<path d="M 73.5 250.09 L 79.11 250.09 L 79.11 249.73 L 73.5 249.73 z
" clip-path="url(#p84e7c9f761)" style="fill: #99ff66; stroke: #000000; stroke-width: 0.6; stroke-linejoin: miter"/>
</g>
<g id="patch_138">
<path d="M 87.23 250.09 L 92.84 250.09 L 92.84 250.09 L 87.23 250.09 z
" clip-path="url(#p84e7c9f761)" style="fill: #99ff66; stroke: #000000; stroke-width: 0.6; stroke-linejoin: miter"/>
</g>
<g id="patch_139">
<path d="M 100.96 250.09 L 106.57 250.09 L 106.57 250.09 L 100.96 250.09 z
" clip-path="url(#p84e7c9f761)" style="fill: #99ff66; stroke: #000000; stroke-width: 0.6; stroke-linejoin: miter"/>
</g>
<g id="patch_140">
<path d="M 114.69 250.09 L 120.3 250.09 L 120.3 250.09 L 114.69 250.09 z
" clip-path="url(#p84e7c9f761)" style="fill: #99ff66; stroke: #000000; stroke-width: 0.6; stroke-linejoin: miter"/>
</g>
<g id="patch_141">
<path d="M 128.42 227.92 L 134.03 227.92 L 134.03 210.03 L 128.42 210.03 z
" clip-path="url(#p84e7c9f761)" style="fill: #99ff66; stroke: #000000; stroke-width: 0.6; stroke-linejoin: miter"/>
</g>
<g id="patch_142">
<path d="M 142.15 250.09 L 147.76 250.09 L 147.76 250.09 L 142.15 250.09 z
" clip-path="url(#p84e7c9f761)" style="fill: #99ff66; stroke: #000000; stroke-width: 0.6; stroke-linejoin: miter"/>
</g>
<g id="patch_143">
<path d="M 155.89 250.09 L 161.49 250.09 L 161.49 250.09 L 155.89 250.09 z
" clip-path="url(#p84e7c9f761)" style="fill: #99ff66; stroke: #000000; stroke-width: 0.6; stroke-linejoin: miter"/>
</g>
<g id="patch_144">
<path d="M 169.62 250.09 L 175.22 250.09 L 175.22 250.09 L 169.62 250.09 z
" clip-path="url(#p84e7c9f761)" style="fill: #99ff66; stroke: #000000; stroke-width: 0.6; stroke-linejoin: miter"/>
</g>
<g id="patch_145">
<path d="M 183.35 250.09 L 188.95 250.09 L 188.95 250.09 L 183.35 250.09 z
" clip-path="url(#p84e7c9f761)" style="fill: #99ff66; stroke: #000000; stroke-width: 0.6; stroke-linejoin: miter"/>
</g>
<g id="patch_146">
<path d="M 197.08 250.09 L 202.69 250.09 L 202.69 250.09 L 197.08 250.09 z
" clip-path="url(#p84e7c9f761)" style="fill: #99ff66; stroke: #000000; stroke-width: 0.6; stroke-linejoin: miter"/>
</g>
<g id="patch_147">
<path d="M 210.81 250.09 L 216.42 250.09 L 216.42 250.09 L 210.81 250.09 z
" clip-path="url(#p84e7c9f761)" style="fill: #99ff66; stroke: #000000; stroke-width: 0.6; stroke-linejoin: miter"/>
</g>
<g id="patch_148">
<path d="M 224.54 250.09 L 230.15 250.09 L 230.15 250.09 L 224.54 250.09 z
" clip-path="url(#p84e7c9f761)" style="fill: #99ff66; stroke: #000000; stroke-width: 0.6; stroke-linejoin: miter"/>
</g>
<g id="patch_149">
<path d="M 238.27 250.09 L 243.88 250.09 L 243.88 250.09 L 238.27 250.09 z
" clip-path="url(#p84e7c9f761)" style="fill: #99ff66; stroke: #000000; stroke-width: 0.6; stroke-linejoin: miter"/>
</g>
<g id="patch_150">
<path d="M 252 250.09 L 257.61 250.09 L 257.61 250.09 L 252 250.09 z
" clip-path="url(#p84e7c9f761)" style="fill: #99ff66; stroke: #000000; stroke-width: 0.6; stroke-linejoin: miter"/>
</g>
<g id="patch_151">
<path d="M 265.73 250.09 L 271.34 250.09 L 271.34 250.09 L 265.73 250.09 z
" clip-path="url(#p84e7c9f761)" style="fill: #99ff66; stroke: #000000; stroke-width: 0.6; stroke-linejoin: miter"/>
</g>
<g id="patch_152">
<path d="M 279.46 250.09 L 285.07 250.09 L 285.07 250.09 L 279.46 250.09 z
" clip-path="url(#p84e7c9f761)" style="fill: #99ff66; stroke: #000000; stroke-width: 0.6; stroke-linejoin: miter"/>
</g>
<g id="patch_153">
<path d="M 293.19 250.09 L 298.8 250.09 L 298.8 250.09 L 293.19 250.09 z
" clip-path="url(#p84e7c9f761)" style="fill: #99ff66; stroke: #000000; stroke-width: 0.6; stroke-linejoin: miter"/>
</g>
<g id="patch_154">
<path d="M 306.93 250.09 L 312.53 250.09 L 312.53 250.09 L 306.93 250.09 z
" clip-path="url(#p84e7c9f761)" style="fill: #99ff66; stroke: #000000; stroke-width: 0.6; stroke-linejoin: miter"/>
</g>
<g id="patch_155">
<path d="M 320.66 250.09 L 326.26 250.09 L 326.26 250.09 L 320.66 250.09 z
" clip-path="url(#p84e7c9f761)" style="fill: #99ff66; stroke: #000000; stroke-width: 0.6; stroke-linejoin: miter"/>
</g>
<g id="patch_156">
<path d="M 334.39 250.09 L 339.99 250.09 L 339.99 250.09 L 334.39 250.09 z
" clip-path="url(#p84e7c9f761)" style="fill: #99ff66; stroke: #000000; stroke-width: 0.6; stroke-linejoin: miter"/>
</g>
<g id="patch_157">
<path d="M 348.12 250.09 L 353.73 250.09 L 353.73 250.09 L 348.12 250.09 z
" clip-path="url(#p84e7c9f761)" style="fill: #99ff66; stroke: #000000; stroke-width: 0.6; stroke-linejoin: miter"/>
</g>
<g id="patch_158">
<path d="M 361.85 250.09 L 367.46 250.09 L 367.46 250.09 L 361.85 250.09 z
" clip-path="url(#p84e7c9f761)" style="fill: #99ff66; stroke: #000000; stroke-width: 0.6; stroke-linejoin: miter"/>
</g>
<g id="patch_159">
<path d="M 375.58 250.09 L 381.19 250.09 L 381.19 250.09 L 375.58 250.09 z
" clip-path="url(#p84e7c9f761)" style="fill: #99ff66; stroke: #000000; stroke-width: 0.6; stroke-linejoin: miter"/>
</g>
<g id="patch_160">
<path d="M 389.31 250.09 L 394.92 250.09 L 394.92 250.09 L 389.31 250.09 z
" clip-path="url(#p84e7c9f761)" style="fill: #99ff66; stroke: #000000; stroke-width: 0.6; stroke-linejoin: miter"/>
</g>
<g id="patch_161">
<path d="M 403.04 250.09 L 408.65 250.09 L 408.65 250.09 L 403.04 250.09 z
" clip-path="url(#p84e7c9f761)" style="fill: #99ff66; stroke: #000000; stroke-width: 0.6; stroke-linejoin: miter"/>
</g>
<g id="patch_162">
<path d="M 416.77 250.09 L 422.38 250.09 L 422.38 250.09 L 416.77 250.09 z
" clip-path="url(#p84e7c9f761)" style="fill: #99ff66; stroke: #000000; stroke-width: 0.6; stroke-linejoin: miter"/>
</g>
<g id="patch_163">
<path d="M 430.5 250.09 L 436.11 250.09 L 436.11 250.09 L 430.5 250.09 z
" clip-path="url(#p84e7c9f761)" style="fill: #99ff66; stroke: #000000; stroke-width: 0.6; stroke-linejoin: miter"/>
</g>
<g id="patch_164">
<path d="M 444.23 250.09 L 449.84 250.09 L 449.84 250.09 L 444.23 250.09 z
" clip-path="url(#p84e7c9f761)" style="fill: #99ff66; stroke: #000000; stroke-width: 0.6; stroke-linejoin: miter"/>
</g>
<g id="patch_165">
<path d="M 457.97 250.09 L 463.57 250.09 L 463.57 250.09 L 457.97 250.09 z
" clip-path="url(#p84e7c9f761)" style="fill: #99ff66; stroke: #000000; stroke-width: 0.6; stroke-linejoin: miter"/>
</g>
<g id="patch_166">
<path d="M 471.7 250.09 L 477.3 250.09 L 477.3 250.09 L 471.7 250.09 z
" clip-path="url(#p84e7c9f761)" style="fill: #99ff66; stroke: #000000; stroke-width: 0.6; stroke-linejoin: miter"/>
</g>
<g id="patch_167">
<path d="M 485.43 250.09 L 491.03 250.09 L 491.03 250.09 L 485.43 250.09 z
" clip-path="url(#p84e7c9f761)" style="fill: #99ff66; stroke: #000000; stroke-width: 0.6; stroke-linejoin: miter"/>
</g>
<g id="patch_168">
<path d="M 499.16 250.09 L 504.77 250.09 L 504.77 250.09 L 499.16 250.09 z
" clip-path="url(#p84e7c9f761)" style="fill: #99ff66; stroke: #000000; stroke-width: 0.6; stroke-linejoin: miter"/>
</g>
<g id="patch_169">
<path d="M 512.89 250.09 L 518.5 250.09 L 518.5 250.09 L 512.89 250.09 z
" clip-path="url(#p84e7c9f761)" style="fill: #99ff66; stroke: #000000; stroke-width: 0.6; stroke-linejoin: miter"/>
</g>
<g id="patch_170">
<path d="M 526.62 250.09 L 532.23 250.09 L 532.23 250.09 L 526.62 250.09 z
" clip-path="url(#p84e7c9f761)" style="fill: #99ff66; stroke: #000000; stroke-width: 0.6; stroke-linejoin: miter"/>
</g>
<g id="patch_171">
<path d="M 540.35 250.09 L 545.96 250.09 L 545.96 250.09 L 540.35 250.09 z
" clip-path="url(#p84e7c9f761)" style="fill: #99ff66; stroke: #000000; stroke-width: 0.6; stroke-linejoin: miter"/>
</g>
<g id="patch_172">
<path d="M 554.08 250.09 L 559.69 250.09 L 559.69 250.09 L 554.08 250.09 z
" clip-path="url(#p84e7c9f761)" style="fill: #99ff66; stroke: #000000; stroke-width: 0.6; stroke-linejoin: miter"/>
</g>
<g id="patch_173">
<path d="M 567.81 250.09 L 573.42 250.09 L 573.42 250.09 L 567.81 250.09 z
" clip-path="url(#p84e7c9f761)" style="fill: #99ff66; stroke: #000000; stroke-width: 0.6; stroke-linejoin: miter"/>
</g>
<g id="patch_174">
<path d="M 581.54 250.09 L 587.15 250.09 L 587.15 250.09 L 581.54 250.09 z
" clip-path="url(#p84e7c9f761)" style="fill: #99ff66; stroke: #000000; stroke-width: 0.6; stroke-linejoin: miter"/>
</g>
<g id="patch_175">
<path d="M 595.28 250.09 L 600.88 250.09 L 600.88 250.09 L 595.28 250.09 z
" clip-path="url(#p84e7c9f761)" style="fill: #99ff66; stroke: #000000; stroke-width: 0.6; stroke-linejoin: miter"/>
</g>
<g id="line2d_190">
<path d="M 46.04 250.09 L 51.64 250.09 " clip-path="url(#p84e7c9f761)" style="fill: none; stroke: #000000; stroke-width: 0.6"/>
</g>
<g id="line2d_191">
<path d="M 59.77 250.09 L 65.38 250.09 " clip-path="url(#p84e7c9f761)" style="fill: none; stroke: #000000; stroke-width: 0.6"/>
</g>
<g id="line2d_192">
<path d="M 73.5 250.09 L 79.11 250.09 " clip-path="url(#p84e7c9f761)" style="fill: none; stroke: #000000; stroke-width: 0.6"/>
</g>
<g id="line2d_193">
<path d="M 87.23 250.09 L 92.84 250.09 " clip-path="url(#p84e7c9f761)" style="fill: none; stroke: #000000; stroke-width: 0.6"/>
</g>
<g id="line2d_194">
<path d="M 100.96 250.09 L 106.57 250.09 " clip-path="url(#p84e7c9f761)" style="fill: none; stroke: #000000; stroke-width: 0.6"/>
</g>
<g id="line2d_195">
<path d="M 114.69 250.09 L 120.3 250.09 " clip-path="url(#p84e7c9f761)" style="fill: none; stroke: #000000; stroke-width: 0.6"/>
</g>
<g id="line2d_196">
<path d="M 128.42 215.52 L 134.03 215.52 " clip-path="url(#p84e7c9f761)" style="fill: none; stroke: #000000; stroke-width: 0.6"/>
</g>
<g id="line2d_197">
<path d="M 142.15 250.09 L 147.76 250.09 " clip-path="url(#p84e7c9f761)" style="fill: none; stroke: #000000; stroke-width: 0.6"/>
</g>
<g id="line2d_198">
<path d="M 155.89 250.09 L 161.49 250.09 " clip-path="url(#p84e7c9f761)" style="fill: none; stroke: #000000; stroke-width: 0.6"/>
</g>
<g id="line2d_199">
<path d="M 169.62 250.09 L 175.22 250.09 " clip-path="url(#p84e7c9f761)" style="fill: none; stroke: #000000; stroke-width: 0.6"/>
</g>
<g id="line2d_200">
<path d="M 183.35 250.09 L 188.95 250.09 " clip-path="url(#p84e7c9f761)" style="fill: none; stroke: #000000; stroke-width: 0.6"/>
</g>
<g id="line2d_201">
<path d="M 197.08 250.09 L 202.69 250.09 " clip-path="url(#p84e7c9f761)" style="fill: none; stroke: #000000; stroke-width: 0.6"/>
</g>
<g id="line2d_202">
<path d="M 210.81 250.09 L 216.42 250.09 " clip-path="url(#p84e7c9f761)" style="fill: none; stroke: #000000; stroke-width: 0.6"/>
</g>
<g id="line2d_203">
<path d="M 224.54 250.09 L 230.15 250.09 " clip-path="url(#p84e7c9f761)" style="fill: none; stroke: #000000; stroke-width: 0.6"/>
</g>
<g id="line2d_204">
<path d="M 238.27 250.09 L 243.88 250.09 " clip-path="url(#p84e7c9f761)" style="fill: none; stroke: #000000; stroke-width: 0.6"/>
</g>
<g id="line2d_205">
<path d="M 252 250.09 L 257.61 250.09 " clip-path="url(#p84e7c9f761)" style="fill: none; stroke: #000000; stroke-width: 0.6"/>
</g>
<g id="line2d_206">
<path d="M 265.73 250.09 L 271.34 250.09 " clip-path="url(#p84e7c9f761)" style="fill: none; stroke: #000000; stroke-width: 0.6"/>
</g>
<g id="line2d_207">
<path d="M 279.46 250.09 L 285.07 250.09 " clip-path="url(#p84e7c9f761)" style="fill: none; stroke: #000000; stroke-width: 0.6"/>
</g>
<g id="line2d_208">
<path d="M 293.19 250.09 L 298.8 250.09 " clip-path="url(#p84e7c9f761)" style="fill: none; stroke: #000000; stroke-width: 0.6"/>
</g>
<g id="line2d_209">
<path d="M 306.93 250.09 L 312.53 250.09 " clip-path="url(#p84e7c9f761)" style="fill: none; stroke: #000000; stroke-width: 0.6"/>
</g>
<g id="line2d_210">
<path d="M 320.66 250.09 L 326.26 250.09 " clip-path="url(#p84e7c9f761)" style="fill: none; stroke: #000000; stroke-width: 0.6"/>
</g>
<g id="line2d_211">
<path d="M 334.39 250.09 L 339.99 250.09 " clip-path="url(#p84e7c9f761)" style="fill: none; stroke: #000000; stroke-width: 0.6"/>
</g>
<g id="line2d_212">
<path d="M 348.12 250.09 L 353.73 250.09 " clip-path="url(#p84e7c9f761)" style="fill: none; stroke: #000000; stroke-width: 0.6"/>
</g>
<g id="line2d_213">
<path d="M 361.85 250.09 L 367.46 250.09 " clip-path="url(#p84e7c9f761)" style="fill: none; stroke: #000000; stroke-width: 0.6"/>
</g>
<g id="line2d_214">
<path d="M 375.58 250.09 L 381.19 250.09 " clip-path="url(#p84e7c9f761)" style="fill: none; stroke: #000000; stroke-width: 0.6"/>
</g>
<g id="line2d_215">
<path d="M 389.31 250.09 L 394.92 250.09 " clip-path="url(#p84e7c9f761)" style="fill: none; stroke: #000000; stroke-width: 0.6"/>
</g>
<g id="line2d_216">
<path d="M 403.04 250.09 L 408.65 250.09 " clip-path="url(#p84e7c9f761)" style="fill: none; stroke: #000000; stroke-width: 0.6"/>
</g>
<g id="line2d_217">
<path d="M 416.77 250.09 L 422.38 250.09 " clip-path="url(#p84e7c9f761)" style="fill: none; stroke: #000000; stroke-width: 0.6"/>
</g>
<g id="line2d_218">
<path d="M 430.5 250.09 L 436.11 250.09 " clip-path="url(#p84e7c9f761)" style="fill: none; stroke: #000000; stroke-width: 0.6"/>
</g>
<g id="line2d_219">
<path d="M 444.23 250.09 L 449.84 250.09 " clip-path="url(#p84e7c9f761)" style="fill: none; stroke: #000000; stroke-width: 0.6"/>
</g>
<g id="line2d_220">
<path d="M 457.97 250.09 L 463.57 250.09 " clip-path="url(#p84e7c9f761)" style="fill: none; stroke: #000000; stroke-width: 0.6"/>
</g>
<g id="line2d_221">
<path d="M 471.7 250.09 L 477.3 250.09 " clip-path="url(#p84e7c9f761)" style="fill: none; stroke: #000000; stroke-width: 0.6"/>
</g>
<g id="line2d_222">
<path d="M 485.43 250.09 L 491.03 250.09 " clip-path="url(#p84e7c9f761)" style="fill: none; stroke: #000000; stroke-width: 0.6"/>
</g>
<g id="line2d_223">
<path d="M 499.16 250.09 L 504.77 250.09 " clip-path="url(#p84e7c9f761)" style="fill: none; stroke: #000000; stroke-width: 0.6"/>
</g>
<g id="line2d_224">
<path d="M 512.89 250.09 L 518.5 250.09 " clip-path="url(#p84e7c9f761)" style="fill: none; stroke: #000000; stroke-width: 0.6"/>
</g>
<g id="line2d_225">
<path d="M 526.62 250.09 L 532.23 250.09 " clip-path="url(#p84e7c9f761)" style="fill: none; stroke: #000000; stroke-width: 0.6"/>
</g>
<g id="line2d_226">
<path d="M 540.35 250.09 L 545.96 250.09 " clip-path="url(#p84e7c9f761)" style="fill: none; stroke: #000000; stroke-width: 0.6"/>
</g>
<g id="line2d_227">
<path d="M 554.08 250.09 L 559.69 250.09 " clip-path="url(#p84e7c9f761)" style="fill: none; stroke: #000000; stroke-width: 0.6"/>
</g>
<g id="line2d_228">
<path d="M 567.81 250.09 L 573.42 250.09 " clip-path="url(#p84e7c9f761)" style="fill: none; stroke: #000000; stroke-width: 0.6"/>
</g>
<g id="line2d_229">
<path d="M 581.54 250.09 L 587.15 250.09 " clip-path="url(#p84e7c9f761)" style="fill: none; stroke: #000000; stroke-width: 0.6"/>
</g>
<g id="line2d_230">
<path d="M 595.28 250.09 L 600.88 250.09 " clip-path="url(#p84e7c9f761)" style="fill: none; stroke: #000000; stroke-width: 0.6"/>
</g>
<g id="line2d_231">
<path d="M 48.84 250.09 L 62.57 250.09 L 76.3 250.09 L 90.03 250.09 L 103.77 250.09 L 117.5 250.09 L 131.23 191.79 L 144.96 250.09 L 158.69 250.09 L 172.42 250.09 L 186.15 250.09 L 199.88 250.09 L 213.61 250.09 L 227.34 250.09 L 241.07 250.09 L 254.81 250.09 L 268.54 250.09 L 282.27 250.09 L 296 250.09 L 309.73 250.09 L 323.46 250.09 L 337.19 250.09 L 350.92 250.09 L 364.65 250.09 L 378.38 250.09 L 392.11 249.59 L 405.85 250.09 L 419.58 250.09 L 433.31 250.09 L 447.04 250.09 L 460.77 250.09 L 474.5 250.09 L 488.23 250.09 L 501.96 250.09 L 515.69 250.09 L 529.42 250.09 L 543.15 250.09 L 556.89 250.09 L 570.62 250.09 L 584.35 249.73 L 598.08 250.09 " clip-path="url(#p84e7c9f761)" style="fill: none; stroke: #ff0000; stroke-linecap: square"/>
</g>
<g id="line2d_232">
<path d="M 48.84 250.09 L 62.57 250.09 L 76.3 249.52 L 90.03 250.09 L 103.77 250.09 L 117.5 250.09 L 131.23 220.23 L 144.96 250.09 L 158.69 250.09 L 172.42 249.94 L 186.15 250.09 L 199.88 250.09 L 213.61 250.09 L 227.34 250.09 L 241.07 250.09 L 254.81 250.09 L 268.54 250.09 L 282.27 250.09 L 296 250.09 L 309.73 250.09 L 323.46 250.09 L 337.19 250.09 L 350.92 250.09 L 364.65 250.09 L 378.38 250.09 L 392.11 247.24 L 405.85 250.09 L 419.58 250.09 L 433.31 250.09 L 447.04 250.09 L 460.77 250.09 L 474.5 250.09 L 488.23 250.09 L 501.96 250.09 L 515.69 250.09 L 529.42 250.09 L 543.15 250.09 L 556.89 250.09 L 570.62 250.09 L 584.35 246.38 L 598.08 250.09 " clip-path="url(#p84e7c9f761)" style="fill: none; stroke: #0000ff; stroke-linecap: square"/>
</g>
</g>
<g id="axes_3">
<g id="patch_176">
<path d="M 41.98 355.82 L 604.94 355.82 L 604.94 273.1 L 41.98 273.1 z
" style="fill: #ffffff"/>
</g>
<g id="matplotlib.axis_5">
<g id="xtick_23">
<g id="line2d_233">
<path d="M 48.84 355.82 L 48.84 273.1 " clip-path="url(#p38d35d230c)" style="fill: none; stroke-dasharray: 1.85,0.8; stroke-dashoffset: 0; stroke: #b0b0b0; stroke-opacity: 0.6; stroke-width: 0.5"/>
</g>
<g id="line2d_234">
<g>
<use href="#mde36ec28b2" x="48.84" y="355.82" style="stroke: #000000; stroke-width: 0.8"/>
</g>
</g>
</g>
<g id="xtick_24">
<g id="line2d_235">
<path d="M 103.77 355.82 L 103.77 273.1 " clip-path="url(#p38d35d230c)" style="fill: none; stroke-dasharray: 1.85,0.8; stroke-dashoffset: 0; stroke: #b0b0b0; stroke-opacity: 0.6; stroke-width: 0.5"/>
</g>
<g id="line2d_236">
<g>
<use href="#mde36ec28b2" x="103.77" y="355.82" style="stroke: #000000; stroke-width: 0.8"/>
</g>
</g>
</g>
<g id="xtick_25">
<g id="line2d_237">
<path d="M 158.69 355.82 L 158.69 273.1 " clip-path="url(#p38d35d230c)" style="fill: none; stroke-dasharray: 1.85,0.8; stroke-dashoffset: 0; stroke: #b0b0b0; stroke-opacity: 0.6; stroke-width: 0.5"/>
</g>
<g id="line2d_238">
<g>
<use href="#mde36ec28b2" x="158.69" y="355.82" style="stroke: #000000; stroke-width: 0.8"/>
</g>
</g>
</g>
<g id="xtick_26">
<g id="line2d_239">
<path d="M 213.61 355.82 L 213.61 273.1 " clip-path="url(#p38d35d230c)" style="fill: none; stroke-dasharray: 1.85,0.8; stroke-dashoffset: 0; stroke: #b0b0b0; stroke-opacity: 0.6; stroke-width: 0.5"/>
</g>
<g id="line2d_240">
<g>
<use href="#mde36ec28b2" x="213.61" y="355.82" style="stroke: #000000; stroke-width: 0.8"/>
</g>
</g>
</g>
<g id="xtick_27">
<g id="line2d_241">
<path d="M 268.54 355.82 L 268.54 273.1 " clip-path="url(#p38d35d230c)" style="fill: none; stroke-dasharray: 1.85,0.8; stroke-dashoffset: 0; stroke: #b0b0b0; stroke-opacity: 0.6; stroke-width: 0.5"/>
</g>
<g id="line2d_242">
<g>
<use href="#mde36ec28b2" x="268.54" y="355.82" style="stroke: #000000; stroke-width: 0.8"/>
</g>
</g>
</g>
<g id="xtick_28">
<g id="line2d_243">
<path d="M 323.46 355.82 L 323.46 273.1 " clip-path="url(#p38d35d230c)" style="fill: none; stroke-dasharray: 1.85,0.8; stroke-dashoffset: 0; stroke: #b0b0b0; stroke-opacity: 0.6; stroke-width: 0.5"/>
</g>
<g id="line2d_244">
<g>
<use href="#mde36ec28b2" x="323.46" y="355.82" style="stroke: #000000; stroke-width: 0.8"/>
</g>
</g>
</g>
<g id="xtick_29">
<g id="line2d_245">
<path d="M 378.38 355.82 L 378.38 273.1 " clip-path="url(#p38d35d230c)" style="fill: none; stroke-dasharray: 1.85,0.8; stroke-dashoffset: 0; stroke: #b0b0b0; stroke-opacity: 0.6; stroke-width: 0.5"/>
</g>
<g id="line2d_246">
<g>
<use href="#mde36ec28b2" x="378.38" y="355.82" style="stroke: #000000; stroke-width: 0.8"/>
</g>
</g>
</g>
<g id="xtick_30">
<g id="line2d_247">
<path d="M 433.31 355.82 L 433.31 273.1 " clip-path="url(#p38d35d230c)" style="fill: none; stroke-dasharray: 1.85,0.8; stroke-dashoffset: 0; stroke: #b0b0b0; stroke-opacity: 0.6; stroke-width: 0.5"/>
</g>
<g id="line2d_248">
<g>
<use href="#mde36ec28b2" x="433.31" y="355.82" style="stroke: #000000; stroke-width: 0.8"/>
</g>
</g>
</g>
<g id="xtick_31">
<g id="line2d_249">
<path d="M 488.23 355.82 L 488.23 273.1 " clip-path="url(#p38d35d230c)" style="fill: none; stroke-dasharray: 1.85,0.8; stroke-dashoffset: 0; stroke: #b0b0b0; stroke-opacity: 0.6; stroke-width: 0.5"/>
</g>
<g id="line2d_250">
<g>
<use href="#mde36ec28b2" x="488.23" y="355.82" style="stroke: #000000; stroke-width: 0.8"/>
</g>
</g>
</g>
<g id="xtick_32">
<g id="line2d_251">
<path d="M 543.15 355.82 L 543.15 273.1 " clip-path="url(#p38d35d230c)" style="fill: none; stroke-dasharray: 1.85,0.8; stroke-dashoffset: 0; stroke: #b0b0b0; stroke-opacity: 0.6; stroke-width: 0.5"/>
</g>
<g id="line2d_252">
<g>
<use href="#mde36ec28b2" x="543.15" y="355.82" style="stroke: #000000; stroke-width: 0.8"/>
</g>
</g>
</g>
<g id="xtick_33">
<g id="line2d_253">
<path d="M 598.08 355.82 L 598.08 273.1 " clip-path="url(#p38d35d230c)" style="fill: none; stroke-dasharray: 1.85,0.8; stroke-dashoffset: 0; stroke: #b0b0b0; stroke-opacity: 0.6; stroke-width: 0.5"/>
</g>
<g id="line2d_254">
<g>
<use href="#mde36ec28b2" x="598.08" y="355.82" style="stroke: #000000; stroke-width: 0.8"/>
</g>
</g>
</g>
</g>
<g id="matplotlib.axis_6">
<g id="ytick_11">
<g id="line2d_255">
<path d="M 41.98 338.78 L 604.94 338.78 " clip-path="url(#p38d35d230c)" style="fill: none; stroke-dasharray: 1.85,0.8; stroke-dashoffset: 0; stroke: #b0b0b0; stroke-opacity: 0.6; stroke-width: 0.5"/>
</g>
<g id="line2d_256">
<g>
<use href="#mc78ae8635a" x="41.98" y="338.78" style="stroke: #000000; stroke-width: 0.8"/>
</g>
</g>
<g id="text_11">
<text style="font-size: 8.28px; font-family: 'Liberation Sans'; text-anchor: end" x="34.98" y="341.82" transform="rotate(-0 34.98 341.82)" textLength="4.85" lengthAdjust="spacingAndGlyphs">2</text>
</g>
</g>
<g id="ytick_12">
<g id="line2d_257">
<path d="M 41.98 313.07 L 604.94 313.07 " clip-path="url(#p38d35d230c)" style="fill: none; stroke-dasharray: 1.85,0.8; stroke-dashoffset: 0; stroke: #b0b0b0; stroke-opacity: 0.6; stroke-width: 0.5"/>
</g>
<g id="line2d_258">
<g>
<use href="#mc78ae8635a" x="41.98" y="313.07" style="stroke: #000000; stroke-width: 0.8"/>
</g>
</g>
<g id="text_12">
<text style="font-size: 8.28px; font-family: 'Liberation Sans'; text-anchor: end" x="34.98" y="316.11" transform="rotate(-0 34.98 316.11)" textLength="4.85" lengthAdjust="spacingAndGlyphs">4</text>
</g>
</g>
<g id="ytick_13">
<g id="line2d_259">
<path d="M 41.98 287.35 L 604.94 287.35 " clip-path="url(#p38d35d230c)" style="fill: none; stroke-dasharray: 1.85,0.8; stroke-dashoffset: 0; stroke: #b0b0b0; stroke-opacity: 0.6; stroke-width: 0.5"/>
</g>
<g id="line2d_260">
<g>
<use href="#mc78ae8635a" x="41.98" y="287.35" style="stroke: #000000; stroke-width: 0.8"/>
</g>
</g>
<g id="text_13">
<text style="font-size: 8.28px; font-family: 'Liberation Sans'; text-anchor: end" x="34.98" y="290.39" transform="rotate(-0 34.98 290.39)" textLength="4.85" lengthAdjust="spacingAndGlyphs">6</text>
</g>
</g>
</g>
<g id="line2d_261">
<path d="M 48.84 321.3 L 48.84 321.3 " clip-path="url(#p38d35d230c)" style="fill: none; stroke: #3a3a3a; stroke-width: 0.8"/>
</g>
<g id="line2d_262">
<path d="M 62.57 307.93 L 62.57 302.14 " clip-path="url(#p38d35d230c)" style="fill: none; stroke: #3a3a3a; stroke-width: 0.8"/>
</g>
<g id="line2d_263">
<path d="M 76.3 319.5 L 76.3 316.28 " clip-path="url(#p38d35d230c)" style="fill: none; stroke: #3a3a3a; stroke-width: 0.8"/>
</g>
<g id="line2d_264">
<path d="M 90.03 315.38 L 90.03 305.87 " clip-path="url(#p38d35d230c)" style="fill: none; stroke: #3a3a3a; stroke-width: 0.8"/>
</g>
<g id="line2d_265">
<path d="M 103.77 309.85 L 103.77 307.28 " clip-path="url(#p38d35d230c)" style="fill: none; stroke: #3a3a3a; stroke-width: 0.8"/>
</g>
<g id="line2d_266">
<path d="M 117.5 286.2 L 117.5 276.3 " clip-path="url(#p38d35d230c)" style="fill: none; stroke: #3a3a3a; stroke-width: 0.8"/>
</g>
<g id="line2d_267">
<path d="M 131.23 303.3 L 131.23 283.63 " clip-path="url(#p38d35d230c)" style="fill: none; stroke: #3a3a3a; stroke-width: 0.8"/>
</g>
<g id="line2d_268">
<path d="M 144.96 296.35 L 144.96 293.14 " clip-path="url(#p38d35d230c)" style="fill: none; stroke: #3a3a3a; stroke-width: 0.8"/>
</g>
<g id="line2d_269">
<path d="M 158.69 304.71 L 158.69 301.5 " clip-path="url(#p38d35d230c)" style="fill: none; stroke: #3a3a3a; stroke-width: 0.8"/>
</g>
<g id="line2d_270">
<path d="M 172.42 288.64 L 172.42 280.67 " clip-path="url(#p38d35d230c)" style="fill: none; stroke: #3a3a3a; stroke-width: 0.8"/>
</g>
<g id="line2d_271">
<path d="M 186.15 313.07 L 186.15 309.85 " clip-path="url(#p38d35d230c)" style="fill: none; stroke: #3a3a3a; stroke-width: 0.8"/>
</g>
<g id="line2d_272">
<path d="M 199.88 316.93 L 199.88 309.85 " clip-path="url(#p38d35d230c)" style="fill: none; stroke: #3a3a3a; stroke-width: 0.8"/>
</g>
<g id="line2d_273">
<path d="M 213.61 319.5 L 213.61 313.07 " clip-path="url(#p38d35d230c)" style="fill: none; stroke: #3a3a3a; stroke-width: 0.8"/>
</g>
<g id="line2d_274">
<path d="M 227.34 306.64 L 227.34 297.64 " clip-path="url(#p38d35d230c)" style="fill: none; stroke: #3a3a3a; stroke-width: 0.8"/>
</g>
<g id="line2d_275">
<path d="M 241.07 324 L 241.07 321.43 " clip-path="url(#p38d35d230c)" style="fill: none; stroke: #3a3a3a; stroke-width: 0.8"/>
</g>
<g id="line2d_276">
<path d="M 254.81 334.28 L 254.81 326.7 " clip-path="url(#p38d35d230c)" style="fill: none; stroke: #3a3a3a; stroke-width: 0.8"/>
</g>
<g id="line2d_277">
<path d="M 268.54 329.78 L 268.54 317.95 " clip-path="url(#p38d35d230c)" style="fill: none; stroke: #3a3a3a; stroke-width: 0.8"/>
</g>
<g id="line2d_278">
<path d="M 282.27 315.38 L 282.27 295.07 " clip-path="url(#p38d35d230c)" style="fill: none; stroke: #3a3a3a; stroke-width: 0.8"/>
</g>
<g id="line2d_279">
<path d="M 296 321.43 L 296 315.64 " clip-path="url(#p38d35d230c)" style="fill: none; stroke: #3a3a3a; stroke-width: 0.8"/>
</g>
<g id="line2d_280">
<path d="M 309.73 330.55 L 309.73 312.81 " clip-path="url(#p38d35d230c)" style="fill: none; stroke: #3a3a3a; stroke-width: 0.8"/>
</g>
<g id="line2d_281">
<path d="M 323.46 322.07 L 323.46 311.53 " clip-path="url(#p38d35d230c)" style="fill: none; stroke: #3a3a3a; stroke-width: 0.8"/>
</g>
<g id="line2d_282">
<path d="M 337.19 300.73 L 337.19 282.73 " clip-path="url(#p38d35d230c)" style="fill: none; stroke: #3a3a3a; stroke-width: 0.8"/>
</g>
<g id="line2d_283">
<path d="M 350.92 319.5 L 350.92 312.17 " clip-path="url(#p38d35d230c)" style="fill: none; stroke: #3a3a3a; stroke-width: 0.8"/>
</g>
<g id="line2d_284">
<path d="M 364.65 321.68 L 364.65 299.7 " clip-path="url(#p38d35d230c)" style="fill: none; stroke: #3a3a3a; stroke-width: 0.8"/>
</g>
<g id="line2d_285">
<path d="M 378.38 321.68 L 378.38 308.31 " clip-path="url(#p38d35d230c)" style="fill: none; stroke: #3a3a3a; stroke-width: 0.8"/>
</g>
<g id="line2d_286">
<path d="M 392.11 313.45 L 392.11 293.4 " clip-path="url(#p38d35d230c)" style="fill: none; stroke: #3a3a3a; stroke-width: 0.8"/>
</g>
<g id="line2d_287">
<path d="M 405.85 329.91 L 405.85 316.03 " clip-path="url(#p38d35d230c)" style="fill: none; stroke: #3a3a3a; stroke-width: 0.8"/>
</g>
<g id="line2d_288">
<path d="M 419.58 339.42 L 419.58 317.95 " clip-path="url(#p38d35d230c)" style="fill: none; stroke: #3a3a3a; stroke-width: 0.8"/>
</g>
<g id="line2d_289">
<path d="M 433.31 340.71 L 433.31 320.4 " clip-path="url(#p38d35d230c)" style="fill: none; stroke: #3a3a3a; stroke-width: 0.8"/>
</g>
<g id="line2d_290">
<path d="M 447.04 338.65 L 447.04 300.98 " clip-path="url(#p38d35d230c)" style="fill: none; stroke: #3a3a3a; stroke-width: 0.8"/>
</g>
<g id="line2d_291">
<path d="M 460.77 337.88 L 460.77 319.11 " clip-path="url(#p38d35d230c)" style="fill: none; stroke: #3a3a3a; stroke-width: 0.8"/>
</g>
<g id="line2d_292">
<path d="M 474.5 352.92 L 474.5 319.11 " clip-path="url(#p38d35d230c)" style="fill: none; stroke: #3a3a3a; stroke-width: 0.8"/>
</g>
<g id="line2d_293">
<path d="M 488.23 349.07 L 488.23 318.85 " clip-path="url(#p38d35d230c)" style="fill: none; stroke: #3a3a3a; stroke-width: 0.8"/>
</g>
<g id="line2d_294">
<path d="M 501.96 333.13 L 501.96 295.45 " clip-path="url(#p38d35d230c)" style="fill: none; stroke: #3a3a3a; stroke-width: 0.8"/>
</g>
<g id="line2d_295">
<path d="M 515.69 333.13 L 515.69 318.21 " clip-path="url(#p38d35d230c)" style="fill: none; stroke: #3a3a3a; stroke-width: 0.8"/>
</g>
<g id="line2d_296">
<path d="M 529.42 346.24 L 529.42 316.28 " clip-path="url(#p38d35d230c)" style="fill: none; stroke: #3a3a3a; stroke-width: 0.8"/>
</g>
<g id="line2d_297">
<path d="M 543.15 348.42 L 543.15 316.67 " clip-path="url(#p38d35d230c)" style="fill: none; stroke: #3a3a3a; stroke-width: 0.8"/>
</g>
<g id="line2d_298">
<path d="M 556.89 320.01 L 556.89 281.7 " clip-path="url(#p38d35d230c)" style="fill: none; stroke: #3a3a3a; stroke-width: 0.8"/>
</g>
<g id="line2d_299">
<path d="M 570.62 325.93 L 570.62 309.21 " clip-path="url(#p38d35d230c)" style="fill: none; stroke: #3a3a3a; stroke-width: 0.8"/>
</g>
<g id="line2d_300">
<path d="M 584.35 331.2 L 584.35 296.35 " clip-path="url(#p38d35d230c)" style="fill: none; stroke: #3a3a3a; stroke-width: 0.8"/>
</g>
<g id="line2d_301">
<path d="M 598.08 327.47 L 598.08 303.94 " clip-path="url(#p38d35d230c)" style="fill: none; stroke: #3a3a3a; stroke-width: 0.8"/>
</g>
<g id="patch_177">
<path d="M 41.98 355.82 L 41.98 273.1 " style="fill: none; stroke: #000000; stroke-width: 0.8; stroke-linejoin: miter; stroke-linecap: square"/>
</g>
<g id="patch_178">
<path d="M 604.94 355.82 L 604.94 273.1 " style="fill: none; stroke: #000000; stroke-width: 0.8; stroke-linejoin: miter; stroke-linecap: square"/>
</g>
<g id="patch_179">
<path d="M 41.98 355.82 L 604.94 355.82 " style="fill: none; stroke: #000000; stroke-width: 0.8; stroke-linejoin: miter; stroke-linecap: square"/>
</g>
<g id="patch_180">
<path d="M 41.98 273.1 L 604.94 273.1 " style="fill: none; stroke: #000000; stroke-width: 0.8; stroke-linejoin: miter; stroke-linecap: square"/>
</g>
<g id="patch_181">
<path d="M 47.41 321.3 L 50.27 321.3 L 50.27 321.3 L 47.41 321.3 z
" clip-path="url(#p38d35d230c)" style="fill: #99ff66; stroke: #000000; stroke-width: 0.6; stroke-linejoin: miter"/>
</g>
<g id="patch_182">
<path d="M 61.14 306.9 L 64 306.9 L 64 303.04 L 61.14 303.04 z
" clip-path="url(#p38d35d230c)" style="fill: #99ff66; stroke: #000000; stroke-width: 0.6; stroke-linejoin: miter"/>
</g>
<g id="patch_183">
<path d="M 74.87 319.24 L 77.73 319.24 L 77.73 316.93 L 74.87 316.93 z
" clip-path="url(#p38d35d230c)" style="fill: #99ff66; stroke: #000000; stroke-width: 0.6; stroke-linejoin: miter"/>
</g>
<g id="patch_184">
<path d="M 88.6 311.53 L 91.46 311.53 L 91.46 307.15 L 88.6 307.15 z
" clip-path="url(#p38d35d230c)" style="fill: #99ff66; stroke: #000000; stroke-width: 0.6; stroke-linejoin: miter"/>
</g>
<g id="patch_185">
<path d="M 102.33 309.21 L 105.2 309.21 L 105.2 307.67 L 102.33 307.67 z
" clip-path="url(#p38d35d230c)" style="fill: #99ff66; stroke: #000000; stroke-width: 0.6; stroke-linejoin: miter"/>
</g>
<g id="patch_186">
<path d="M 116.07 280.93 L 118.93 280.93 L 118.93 276.68 L 116.07 276.68 z
" clip-path="url(#p38d35d230c)" style="fill: #99ff66; stroke: #000000; stroke-width: 0.6; stroke-linejoin: miter"/>
</g>
<g id="patch_187">
<path d="M 129.8 298.93 L 132.66 298.93 L 132.66 287.74 L 129.8 287.74 z
" clip-path="url(#p38d35d230c)" style="fill: #99ff66; stroke: #000000; stroke-width: 0.6; stroke-linejoin: miter"/>
</g>
<g id="patch_188">
<path d="M 143.53 295.71 L 146.39 295.71 L 146.39 293.78 L 143.53 293.78 z
" clip-path="url(#p38d35d230c)" style="fill: #99ff66; stroke: #000000; stroke-width: 0.6; stroke-linejoin: miter"/>
</g>
<g id="patch_189">
<path d="M 157.26 304.07 L 160.12 304.07 L 160.12 302.01 L 157.26 302.01 z
" clip-path="url(#p38d35d230c)" style="fill: #99ff66; stroke: #000000; stroke-width: 0.6; stroke-linejoin: miter"/>
</g>
<g id="patch_190">
<path d="M 170.99 287.87 L 173.85 287.87 L 173.85 281.57 L 170.99 281.57 z
" clip-path="url(#p38d35d230c)" style="fill: #99ff66; stroke: #000000; stroke-width: 0.6; stroke-linejoin: miter"/>
</g>
<g id="patch_191">
<path d="M 184.72 312.43 L 187.58 312.43 L 187.58 310.5 L 184.72 310.5 z
" clip-path="url(#p38d35d230c)" style="fill: #99ff66; stroke: #000000; stroke-width: 0.6; stroke-linejoin: miter"/>
</g>
<g id="patch_192">
<path d="M 198.45 315.38 L 201.31 315.38 L 201.31 311.53 L 198.45 311.53 z
" clip-path="url(#p38d35d230c)" style="fill: #99ff66; stroke: #000000; stroke-width: 0.6; stroke-linejoin: miter"/>
</g>
<g id="patch_193">
<path d="M 212.18 318.21 L 215.04 318.21 L 215.04 314.74 L 212.18 314.74 z
" clip-path="url(#p38d35d230c)" style="fill: #99ff66; stroke: #000000; stroke-width: 0.6; stroke-linejoin: miter"/>
</g>
<g id="patch_194">
<path d="M 225.91 303.94 L 228.77 303.94 L 228.77 299.7 L 225.91 299.7 z
" clip-path="url(#p38d35d230c)" style="fill: #99ff66; stroke: #000000; stroke-width: 0.6; stroke-linejoin: miter"/>
</g>
<g id="patch_195">
<path d="M 239.64 323.35 L 242.5 323.35 L 242.5 321.81 L 239.64 321.81 z
" clip-path="url(#p38d35d230c)" style="fill: #99ff66; stroke: #000000; stroke-width: 0.6; stroke-linejoin: miter"/>
</g>
<g id="patch_196">
<path d="M 253.38 331.84 L 256.24 331.84 L 256.24 327.47 L 253.38 327.47 z
" clip-path="url(#p38d35d230c)" style="fill: #99ff66; stroke: #000000; stroke-width: 0.6; stroke-linejoin: miter"/>
</g>
<g id="patch_197">
<path d="M 267.11 326.83 L 269.97 326.83 L 269.97 321.04 L 267.11 321.04 z
" clip-path="url(#p38d35d230c)" style="fill: #99ff66; stroke: #000000; stroke-width: 0.6; stroke-linejoin: miter"/>
</g>
<g id="patch_198">
<path d="M 280.84 306.51 L 283.7 306.51 L 283.7 297 L 280.84 297 z
" clip-path="url(#p38d35d230c)" style="fill: #99ff66; stroke: #000000; stroke-width: 0.6; stroke-linejoin: miter"/>
</g>
<g id="patch_199">
<path d="M 294.57 321.04 L 297.43 321.04 L 297.43 316.67 L 294.57 316.67 z
" clip-path="url(#p38d35d230c)" style="fill: #99ff66; stroke: #000000; stroke-width: 0.6; stroke-linejoin: miter"/>
</g>
<g id="patch_200">
<path d="M 308.3 324.25 L 311.16 324.25 L 311.16 315.38 L 308.3 315.38 z
" clip-path="url(#p38d35d230c)" style="fill: #99ff66; stroke: #000000; stroke-width: 0.6; stroke-linejoin: miter"/>
</g>
<g id="patch_201">
<path d="M 322.03 318.47 L 324.89 318.47 L 324.89 312.81 L 322.03 312.81 z
" clip-path="url(#p38d35d230c)" style="fill: #99ff66; stroke: #000000; stroke-width: 0.6; stroke-linejoin: miter"/>
</g>
<g id="patch_202">
<path d="M 335.76 295.07 L 338.62 295.07 L 338.62 289.93 L 335.76 289.93 z
" clip-path="url(#p38d35d230c)" style="fill: #99ff66; stroke: #000000; stroke-width: 0.6; stroke-linejoin: miter"/>
</g>
<g id="patch_203">
<path d="M 349.49 318.47 L 352.35 318.47 L 352.35 314.1 L 349.49 314.1 z
" clip-path="url(#p38d35d230c)" style="fill: #99ff66; stroke: #000000; stroke-width: 0.6; stroke-linejoin: miter"/>
</g>
<g id="patch_204">
<path d="M 363.22 320.78 L 366.08 320.78 L 366.08 308.31 L 363.22 308.31 z
" clip-path="url(#p38d35d230c)" style="fill: #99ff66; stroke: #000000; stroke-width: 0.6; stroke-linejoin: miter"/>
</g>
<g id="patch_205">
<path d="M 376.95 321.68 L 379.81 321.68 L 379.81 311.53 L 376.95 311.53 z
" clip-path="url(#p38d35d230c)" style="fill: #99ff66; stroke: #000000; stroke-width: 0.6; stroke-linejoin: miter"/>
</g>
<g id="patch_206">
<path d="M 390.68 307.15 L 393.54 307.15 L 393.54 294.43 L 390.68 294.43 z
" clip-path="url(#p38d35d230c)" style="fill: #99ff66; stroke: #000000; stroke-width: 0.6; stroke-linejoin: miter"/>
</g>
<g id="patch_207">
<path d="M 404.42 324.25 L 407.28 324.25 L 407.28 317.31 L 404.42 317.31 z
" clip-path="url(#p38d35d230c)" style="fill: #99ff66; stroke: #000000; stroke-width: 0.6; stroke-linejoin: miter"/>
</g>
<g id="patch_208">
<path d="M 418.15 331.45 L 421.01 331.45 L 421.01 319.5 L 418.15 319.5 z
" clip-path="url(#p38d35d230c)" style="fill: #99ff66; stroke: #000000; stroke-width: 0.6; stroke-linejoin: miter"/>
</g>
<g id="patch_209">
<path d="M 431.88 332.48 L 434.74 332.48 L 434.74 322.33 L 431.88 322.33 z
" clip-path="url(#p38d35d230c)" style="fill: #99ff66; stroke: #000000; stroke-width: 0.6; stroke-linejoin: miter"/>
</g>
<g id="patch_210">
<path d="M 445.61 322.33 L 448.47 322.33 L 448.47 306.51 L 445.61 306.51 z
" clip-path="url(#p38d35d230c)" style="fill: #99ff66; stroke: #000000; stroke-width: 0.6; stroke-linejoin: miter"/>
</g>
<g id="patch_211">
<path d="M 459.34 330.55 L 462.2 330.55 L 462.2 321.68 L 459.34 321.68 z
" clip-path="url(#p38d35d230c)" style="fill: #99ff66; stroke: #000000; stroke-width: 0.6; stroke-linejoin: miter"/>
</g>
<g id="patch_212">
<path d="M 473.07 338.78 L 475.93 338.78 L 475.93 325.54 L 473.07 325.54 z
" clip-path="url(#p38d35d230c)" style="fill: #99ff66; stroke: #000000; stroke-width: 0.6; stroke-linejoin: miter"/>
</g>
<g id="patch_213">
<path d="M 486.8 345.85 L 489.66 345.85 L 489.66 320.14 L 486.8 320.14 z
" clip-path="url(#p38d35d230c)" style="fill: #99ff66; stroke: #000000; stroke-width: 0.6; stroke-linejoin: miter"/>
</g>
<g id="patch_214">
<path d="M 500.53 326.44 L 503.39 326.44 L 503.39 298.41 L 500.53 298.41 z
" clip-path="url(#p38d35d230c)" style="fill: #99ff66; stroke: #000000; stroke-width: 0.6; stroke-linejoin: miter"/>
</g>
<g id="patch_215">
<path d="M 514.26 325.54 L 517.12 325.54 L 517.12 319.5 L 514.26 319.5 z
" clip-path="url(#p38d35d230c)" style="fill: #99ff66; stroke: #000000; stroke-width: 0.6; stroke-linejoin: miter"/>
</g>
<g id="patch_216">
<path d="M 527.99 341.61 L 530.85 341.61 L 530.85 319.11 L 527.99 319.11 z
" clip-path="url(#p38d35d230c)" style="fill: #99ff66; stroke: #000000; stroke-width: 0.6; stroke-linejoin: miter"/>
</g>
<g id="patch_217">
<path d="M 541.72 333.13 L 544.59 333.13 L 544.59 317.57 L 541.72 317.57 z
" clip-path="url(#p38d35d230c)" style="fill: #99ff66; stroke: #000000; stroke-width: 0.6; stroke-linejoin: miter"/>
</g>
<g id="patch_218">
<path d="M 555.46 314.1 L 558.32 314.1 L 558.32 289.28 L 555.46 289.28 z
" clip-path="url(#p38d35d230c)" style="fill: #99ff66; stroke: #000000; stroke-width: 0.6; stroke-linejoin: miter"/>
</g>
<g id="patch_219">
<path d="M 569.19 325.54 L 572.05 325.54 L 572.05 311.91 L 569.19 311.91 z
" clip-path="url(#p38d35d230c)" style="fill: #99ff66; stroke: #000000; stroke-width: 0.6; stroke-linejoin: miter"/>
</g>
<g id="patch_220">
<path d="M 582.92 331.2 L 585.78 331.2 L 585.78 298.41 L 582.92 298.41 z
" clip-path="url(#p38d35d230c)" style="fill: #99ff66; stroke: #000000; stroke-width: 0.6; stroke-linejoin: miter"/>
</g>
<g id="patch_221">
<path d="M 596.65 324.9 L 599.51 324.9 L 599.51 307.8 L 596.65 307.8 z
" clip-path="url(#p38d35d230c)" style="fill: #99ff66; stroke: #000000; stroke-width: 0.6; stroke-linejoin: miter"/>
</g>
<g id="patch_222">
<path d="M 46.04 321.3 L 51.64 321.3 L 51.64 321.3 L 46.04 321.3 z
" clip-path="url(#p38d35d230c)" style="fill: #99ff66; stroke: #000000; stroke-width: 0.6; stroke-linejoin: miter"/>
</g>
<g id="patch_223">
<path d="M 59.77 306 L 65.38 306 L 65.38 304.33 L 59.77 304.33 z
" clip-path="url(#p38d35d230c)" style="fill: #99ff66; stroke: #000000; stroke-width: 0.6; stroke-linejoin: miter"/>
</g>
<g id="patch_224">
<path d="M 73.5 318.73 L 79.11 318.73 L 79.11 317.7 L 73.5 317.7 z
" clip-path="url(#p38d35d230c)" style="fill: #99ff66; stroke: #000000; stroke-width: 0.6; stroke-linejoin: miter"/>
</g>
<g id="patch_225">
<path d="M 87.23 310.5 L 92.84 310.5 L 92.84 308.57 L 87.23 308.57 z
" clip-path="url(#p38d35d230c)" style="fill: #99ff66; stroke: #000000; stroke-width: 0.6; stroke-linejoin: miter"/>
</g>
<g id="patch_226">
<path d="M 100.96 308.95 L 106.57 308.95 L 106.57 308.18 L 100.96 308.18 z
" clip-path="url(#p38d35d230c)" style="fill: #99ff66; stroke: #000000; stroke-width: 0.6; stroke-linejoin: miter"/>
</g>
<g id="patch_227">
<path d="M 114.69 279.9 L 120.3 279.9 L 120.3 277.07 L 114.69 277.07 z
" clip-path="url(#p38d35d230c)" style="fill: #99ff66; stroke: #000000; stroke-width: 0.6; stroke-linejoin: miter"/>
</g>
<g id="patch_228">
<path d="M 128.42 297.64 L 134.03 297.64 L 134.03 289.93 L 128.42 289.93 z
" clip-path="url(#p38d35d230c)" style="fill: #99ff66; stroke: #000000; stroke-width: 0.6; stroke-linejoin: miter"/>
</g>
<g id="patch_229">
<path d="M 142.15 295.33 L 147.76 295.33 L 147.76 294.3 L 142.15 294.3 z
" clip-path="url(#p38d35d230c)" style="fill: #99ff66; stroke: #000000; stroke-width: 0.6; stroke-linejoin: miter"/>
</g>
<g id="patch_230">
<path d="M 155.89 303.55 L 161.49 303.55 L 161.49 302.53 L 155.89 302.53 z
" clip-path="url(#p38d35d230c)" style="fill: #99ff66; stroke: #000000; stroke-width: 0.6; stroke-linejoin: miter"/>
</g>
<g id="patch_231">
<path d="M 169.62 287.35 L 175.22 287.35 L 175.22 282.85 L 169.62 282.85 z
" clip-path="url(#p38d35d230c)" style="fill: #99ff66; stroke: #000000; stroke-width: 0.6; stroke-linejoin: miter"/>
</g>
<g id="patch_232">
<path d="M 183.35 312.04 L 188.95 312.04 L 188.95 311.14 L 183.35 311.14 z
" clip-path="url(#p38d35d230c)" style="fill: #99ff66; stroke: #000000; stroke-width: 0.6; stroke-linejoin: miter"/>
</g>
<g id="patch_233">
<path d="M 197.08 314.35 L 202.69 314.35 L 202.69 312.43 L 197.08 312.43 z
" clip-path="url(#p38d35d230c)" style="fill: #99ff66; stroke: #000000; stroke-width: 0.6; stroke-linejoin: miter"/>
</g>
<g id="patch_234">
<path d="M 210.81 316.93 L 216.42 316.93 L 216.42 315.64 L 210.81 315.64 z
" clip-path="url(#p38d35d230c)" style="fill: #99ff66; stroke: #000000; stroke-width: 0.6; stroke-linejoin: miter"/>
</g>
<g id="patch_235">
<path d="M 224.54 302.78 L 230.15 302.78 L 230.15 300.85 L 224.54 300.85 z
" clip-path="url(#p38d35d230c)" style="fill: #99ff66; stroke: #000000; stroke-width: 0.6; stroke-linejoin: miter"/>
</g>
<g id="patch_236">
<path d="M 238.27 322.97 L 243.88 322.97 L 243.88 322.2 L 238.27 322.2 z
" clip-path="url(#p38d35d230c)" style="fill: #99ff66; stroke: #000000; stroke-width: 0.6; stroke-linejoin: miter"/>
</g>
<g id="patch_237">
<path d="M 252 331.07 L 257.61 331.07 L 257.61 329.14 L 252 329.14 z
" clip-path="url(#p38d35d230c)" style="fill: #99ff66; stroke: #000000; stroke-width: 0.6; stroke-linejoin: miter"/>
</g>
<g id="patch_238">
<path d="M 265.73 325.28 L 271.34 325.28 L 271.34 322.71 L 265.73 322.71 z
" clip-path="url(#p38d35d230c)" style="fill: #99ff66; stroke: #000000; stroke-width: 0.6; stroke-linejoin: miter"/>
</g>
<g id="patch_239">
<path d="M 279.46 303.94 L 285.07 303.94 L 285.07 300.47 L 279.46 300.47 z
" clip-path="url(#p38d35d230c)" style="fill: #99ff66; stroke: #000000; stroke-width: 0.6; stroke-linejoin: miter"/>
</g>
<g id="patch_240">
<path d="M 293.19 319.5 L 298.8 319.5 L 298.8 317.57 L 293.19 317.57 z
" clip-path="url(#p38d35d230c)" style="fill: #99ff66; stroke: #000000; stroke-width: 0.6; stroke-linejoin: miter"/>
</g>
<g id="patch_241">
<path d="M 306.93 322.33 L 312.53 322.33 L 312.53 319.11 L 306.93 319.11 z
" clip-path="url(#p38d35d230c)" style="fill: #99ff66; stroke: #000000; stroke-width: 0.6; stroke-linejoin: miter"/>
</g>
<g id="patch_242">
<path d="M 320.66 316.93 L 326.26 316.93 L 326.26 314.35 L 320.66 314.35 z
" clip-path="url(#p38d35d230c)" style="fill: #99ff66; stroke: #000000; stroke-width: 0.6; stroke-linejoin: miter"/>
</g>
<g id="patch_243">
<path d="M 334.39 293.78 L 339.99 293.78 L 339.99 291.85 L 334.39 291.85 z
" clip-path="url(#p38d35d230c)" style="fill: #99ff66; stroke: #000000; stroke-width: 0.6; stroke-linejoin: miter"/>
</g>
<g id="patch_244">
<path d="M 348.12 316.93 L 353.73 316.93 L 353.73 315 L 348.12 315 z
" clip-path="url(#p38d35d230c)" style="fill: #99ff66; stroke: #000000; stroke-width: 0.6; stroke-linejoin: miter"/>
</g>
<g id="patch_245">
<path d="M 361.85 317.95 L 367.46 317.95 L 367.46 313.45 L 361.85 313.45 z
" clip-path="url(#p38d35d230c)" style="fill: #99ff66; stroke: #000000; stroke-width: 0.6; stroke-linejoin: miter"/>
</g>
<g id="patch_246">
<path d="M 375.58 319.5 L 381.19 319.5 L 381.19 315.64 L 375.58 315.64 z
" clip-path="url(#p38d35d230c)" style="fill: #99ff66; stroke: #000000; stroke-width: 0.6; stroke-linejoin: miter"/>
</g>
<g id="patch_247">
<path d="M 389.31 303.94 L 394.92 303.94 L 394.92 297 L 389.31 297 z
" clip-path="url(#p38d35d230c)" style="fill: #99ff66; stroke: #000000; stroke-width: 0.6; stroke-linejoin: miter"/>
</g>
<g id="patch_248">
<path d="M 403.04 322.33 L 408.65 322.33 L 408.65 318.6 L 403.04 318.6 z
" clip-path="url(#p38d35d230c)" style="fill: #99ff66; stroke: #000000; stroke-width: 0.6; stroke-linejoin: miter"/>
</g>
<g id="patch_249">
<path d="M 416.77 328.63 L 422.38 328.63 L 422.38 322.97 L 416.77 322.97 z
" clip-path="url(#p38d35d230c)" style="fill: #99ff66; stroke: #000000; stroke-width: 0.6; stroke-linejoin: miter"/>
</g>
<g id="patch_250">
<path d="M 430.5 328.11 L 436.11 328.11 L 436.11 323.61 L 430.5 323.61 z
" clip-path="url(#p38d35d230c)" style="fill: #99ff66; stroke: #000000; stroke-width: 0.6; stroke-linejoin: miter"/>
</g>
<g id="patch_251">
<path d="M 444.23 322.07 L 449.84 322.07 L 449.84 310.88 L 444.23 310.88 z
" clip-path="url(#p38d35d230c)" style="fill: #99ff66; stroke: #000000; stroke-width: 0.6; stroke-linejoin: miter"/>
</g>
<g id="patch_252">
<path d="M 457.97 328.11 L 463.57 328.11 L 463.57 322.97 L 457.97 322.97 z
" clip-path="url(#p38d35d230c)" style="fill: #99ff66; stroke: #000000; stroke-width: 0.6; stroke-linejoin: miter"/>
</g>
<g id="patch_253">
<path d="M 471.7 338.78 L 477.3 338.78 L 477.3 330.17 L 471.7 330.17 z
" clip-path="url(#p38d35d230c)" style="fill: #99ff66; stroke: #000000; stroke-width: 0.6; stroke-linejoin: miter"/>
</g>
<g id="patch_254">
<path d="M 485.43 333.13 L 491.03 333.13 L 491.03 320.4 L 485.43 320.4 z
" clip-path="url(#p38d35d230c)" style="fill: #99ff66; stroke: #000000; stroke-width: 0.6; stroke-linejoin: miter"/>
</g>
<g id="patch_255">
<path d="M 499.16 323.61 L 504.77 323.61 L 504.77 302.65 L 499.16 302.65 z
" clip-path="url(#p38d35d230c)" style="fill: #99ff66; stroke: #000000; stroke-width: 0.6; stroke-linejoin: miter"/>
</g>
<g id="patch_256">
<path d="M 512.89 324.64 L 518.5 324.64 L 518.5 321.3 L 512.89 321.3 z
" clip-path="url(#p38d35d230c)" style="fill: #99ff66; stroke: #000000; stroke-width: 0.6; stroke-linejoin: miter"/>
</g>
<g id="patch_257">
<path d="M 526.62 336.6 L 532.23 336.6 L 532.23 321.3 L 526.62 321.3 z
" clip-path="url(#p38d35d230c)" style="fill: #99ff66; stroke: #000000; stroke-width: 0.6; stroke-linejoin: miter"/>
</g>
<g id="patch_258">
<path d="M 540.35 328.63 L 545.96 328.63 L 545.96 318.47 L 540.35 318.47 z
" clip-path="url(#p38d35d230c)" style="fill: #99ff66; stroke: #000000; stroke-width: 0.6; stroke-linejoin: miter"/>
</g>
<g id="patch_259">
<path d="M 554.08 308.95 L 559.69 308.95 L 559.69 295.45 L 554.08 295.45 z
" clip-path="url(#p38d35d230c)" style="fill: #99ff66; stroke: #000000; stroke-width: 0.6; stroke-linejoin: miter"/>
</g>
<g id="patch_260">
<path d="M 567.81 323.61 L 573.42 323.61 L 573.42 316.28 L 567.81 316.28 z
" clip-path="url(#p38d35d230c)" style="fill: #99ff66; stroke: #000000; stroke-width: 0.6; stroke-linejoin: miter"/>
</g>
<g id="patch_261">
<path d="M 581.54 326.83 L 587.15 326.83 L 587.15 307.8 L 581.54 307.8 z
" clip-path="url(#p38d35d230c)" style="fill: #99ff66; stroke: #000000; stroke-width: 0.6; stroke-linejoin: miter"/>
</g>
<g id="patch_262">
<path d="M 595.28 321.04 L 600.88 321.04 L 600.88 310.24 L 595.28 310.24 z
" clip-path="url(#p38d35d230c)" style="fill: #99ff66; stroke: #000000; stroke-width: 0.6; stroke-linejoin: miter"/>
</g>
<g id="line2d_302">
<path d="M 46.04 321.3 L 51.64 321.3 " clip-path="url(#p38d35d230c)" style="fill: none; stroke: #000000; stroke-width: 0.6"/>
</g>
<g id="line2d_303">
<path d="M 59.77 305.23 L 65.38 305.23 " clip-path="url(#p38d35d230c)" style="fill: none; stroke: #000000; stroke-width: 0.6"/>
</g>
<g id="line2d_304">
<path d="M 73.5 318.21 L 79.11 318.21 " clip-path="url(#p38d35d230c)" style="fill: none; stroke: #000000; stroke-width: 0.6"/>
</g>
<g id="line2d_305">
<path d="M 87.23 309.85 L 92.84 309.85 " clip-path="url(#p38d35d230c)" style="fill: none; stroke: #000000; stroke-width: 0.6"/>
</g>
<g id="line2d_306">
<path d="M 100.96 308.57 L 106.57 308.57 " clip-path="url(#p38d35d230c)" style="fill: none; stroke: #000000; stroke-width: 0.6"/>
</g>
<g id="line2d_307">
<path d="M 114.69 278.35 L 120.3 278.35 " clip-path="url(#p38d35d230c)" style="fill: none; stroke: #000000; stroke-width: 0.6"/>
</g>
<g id="line2d_308">
<path d="M 128.42 294.43 L 134.03 294.43 " clip-path="url(#p38d35d230c)" style="fill: none; stroke: #000000; stroke-width: 0.6"/>
</g>
<g id="line2d_309">
<path d="M 142.15 294.68 L 147.76 294.68 " clip-path="url(#p38d35d230c)" style="fill: none; stroke: #000000; stroke-width: 0.6"/>
</g>
<g id="line2d_310">
<path d="M 155.89 303.04 L 161.49 303.04 " clip-path="url(#p38d35d230c)" style="fill: none; stroke: #000000; stroke-width: 0.6"/>
</g>
<g id="line2d_311">
<path d="M 169.62 285.43 L 175.22 285.43 " clip-path="url(#p38d35d230c)" style="fill: none; stroke: #000000; stroke-width: 0.6"/>
</g>
<g id="line2d_312">
<path d="M 183.35 311.53 L 188.95 311.53 " clip-path="url(#p38d35d230c)" style="fill: none; stroke: #000000; stroke-width: 0.6"/>
</g>
<g id="line2d_313">
<path d="M 197.08 313.2 L 202.69 313.2 " clip-path="url(#p38d35d230c)" style="fill: none; stroke: #000000; stroke-width: 0.6"/>
</g>
<g id="line2d_314">
<path d="M 210.81 316.28 L 216.42 316.28 " clip-path="url(#p38d35d230c)" style="fill: none; stroke: #000000; stroke-width: 0.6"/>
</g>
<g id="line2d_315">
<path d="M 224.54 302.01 L 230.15 302.01 " clip-path="url(#p38d35d230c)" style="fill: none; stroke: #000000; stroke-width: 0.6"/>
</g>
<g id="line2d_316">
<path d="M 238.27 322.58 L 243.88 322.58 " clip-path="url(#p38d35d230c)" style="fill: none; stroke: #000000; stroke-width: 0.6"/>
</g>
<g id="line2d_317">
<path d="M 252 330.55 L 257.61 330.55 " clip-path="url(#p38d35d230c)" style="fill: none; stroke: #000000; stroke-width: 0.6"/>
</g>
<g id="line2d_318">
<path d="M 265.73 323.61 L 271.34 323.61 " clip-path="url(#p38d35d230c)" style="fill: none; stroke: #000000; stroke-width: 0.6"/>
</g>
<g id="line2d_319">
<path d="M 279.46 302.78 L 285.07 302.78 " clip-path="url(#p38d35d230c)" style="fill: none; stroke: #000000; stroke-width: 0.6"/>
</g>
<g id="line2d_320">
<path d="M 293.19 318.21 L 298.8 318.21 " clip-path="url(#p38d35d230c)" style="fill: none; stroke: #000000; stroke-width: 0.6"/>
</g>
<g id="line2d_321">
<path d="M 306.93 319.5 L 312.53 319.5 " clip-path="url(#p38d35d230c)" style="fill: none; stroke: #000000; stroke-width: 0.6"/>
</g>
<g id="line2d_322">
<path d="M 320.66 315 L 326.26 315 " clip-path="url(#p38d35d230c)" style="fill: none; stroke: #000000; stroke-width: 0.6"/>
</g>
<g id="line2d_323">
<path d="M 334.39 293.14 L 339.99 293.14 " clip-path="url(#p38d35d230c)" style="fill: none; stroke: #000000; stroke-width: 0.6"/>
</g>
<g id="line2d_324">
<path d="M 348.12 316.03 L 353.73 316.03 " clip-path="url(#p38d35d230c)" style="fill: none; stroke: #000000; stroke-width: 0.6"/>
</g>
<g id="line2d_325">
<path d="M 361.85 316.03 L 367.46 316.03 " clip-path="url(#p38d35d230c)" style="fill: none; stroke: #000000; stroke-width: 0.6"/>
</g>
<g id="line2d_326">
<path d="M 375.58 316.93 L 381.19 316.93 " clip-path="url(#p38d35d230c)" style="fill: none; stroke: #000000; stroke-width: 0.6"/>
</g>
<g id="line2d_327">
<path d="M 389.31 300.85 L 394.92 300.85 " clip-path="url(#p38d35d230c)" style="fill: none; stroke: #000000; stroke-width: 0.6"/>
</g>
<g id="line2d_328">
<path d="M 403.04 320.78 L 408.65 320.78 " clip-path="url(#p38d35d230c)" style="fill: none; stroke: #000000; stroke-width: 0.6"/>
</g>
<g id="line2d_329">
<path d="M 416.77 326.57 L 422.38 326.57 " clip-path="url(#p38d35d230c)" style="fill: none; stroke: #000000; stroke-width: 0.6"/>
</g>
<g id="line2d_330">
<path d="M 430.5 326.57 L 436.11 326.57 " clip-path="url(#p38d35d230c)" style="fill: none; stroke: #000000; stroke-width: 0.6"/>
</g>
<g id="line2d_331">
<path d="M 444.23 315.77 L 449.84 315.77 " clip-path="url(#p38d35d230c)" style="fill: none; stroke: #000000; stroke-width: 0.6"/>
</g>
<g id="line2d_332">
<path d="M 457.97 326.57 L 463.57 326.57 " clip-path="url(#p38d35d230c)" style="fill: none; stroke: #000000; stroke-width: 0.6"/>
</g>
<g id="line2d_333">
<path d="M 471.7 332.35 L 477.3 332.35 " clip-path="url(#p38d35d230c)" style="fill: none; stroke: #000000; stroke-width: 0.6"/>
</g>
<g id="line2d_334">
<path d="M 485.43 327.47 L 491.03 327.47 " clip-path="url(#p38d35d230c)" style="fill: none; stroke: #000000; stroke-width: 0.6"/>
</g>
<g id="line2d_335">
<path d="M 499.16 314.35 L 504.77 314.35 " clip-path="url(#p38d35d230c)" style="fill: none; stroke: #000000; stroke-width: 0.6"/>
</g>
<g id="line2d_336">
<path d="M 512.89 322.71 L 518.5 322.71 " clip-path="url(#p38d35d230c)" style="fill: none; stroke: #000000; stroke-width: 0.6"/>
</g>
<g id="line2d_337">
<path d="M 526.62 329.27 L 532.23 329.27 " clip-path="url(#p38d35d230c)" style="fill: none; stroke: #000000; stroke-width: 0.6"/>
</g>
<g id="line2d_338">
<path d="M 540.35 324.64 L 545.96 324.64 " clip-path="url(#p38d35d230c)" style="fill: none; stroke: #000000; stroke-width: 0.6"/>
</g>
<g id="line2d_339">
<path d="M 554.08 300.21 L 559.69 300.21 " clip-path="url(#p38d35d230c)" style="fill: none; stroke: #000000; stroke-width: 0.6"/>
</g>
<g id="line2d_340">
<path d="M 567.81 322.07 L 573.42 322.07 " clip-path="url(#p38d35d230c)" style="fill: none; stroke: #000000; stroke-width: 0.6"/>
</g>
<g id="line2d_341">
<path d="M 581.54 318.21 L 587.15 318.21 " clip-path="url(#p38d35d230c)" style="fill: none; stroke: #000000; stroke-width: 0.6"/>
</g>
<g id="line2d_342">
<path d="M 595.28 315.64 L 600.88 315.64 " clip-path="url(#p38d35d230c)" style="fill: none; stroke: #000000; stroke-width: 0.6"/>
</g>
<g id="line2d_343">
<path d="M 48.84 321.3 L 62.57 305.23 L 76.3 318.21 L 90.03 310.63 L 103.77 308.57 L 117.5 279.64 L 131.23 294.17 L 144.96 295.45 L 158.69 303.55 L 172.42 287.35 L 186.15 312.17 L 199.88 313.2 L 213.61 316.67 L 227.34 301.37 L 241.07 322.58 L 254.81 330.55 L 268.54 323.61 L 282.27 302.01 L 296 318.21 L 309.73 317.05 L 323.46 312.17 L 337.19 291.85 L 350.92 315.13 L 364.65 316.03 L 378.38 317.31 L 392.11 301.37 L 405.85 322.33 L 419.58 332.23 L 433.31 329.27 L 447.04 326.83 L 460.77 330.55 L 474.5 340.07 L 488.23 338.78 L 501.96 318.21 L 515.69 324.25 L 529.42 329.27 L 543.15 328.63 L 556.89 299.7 L 570.62 320.4 L 584.35 319.5 L 598.08 320.4 " clip-path="url(#p38d35d230c)" style="fill: none; stroke: #ff0000; stroke-linecap: square"/>
</g>
<g id="line2d_344">
<path d="M 48.84 321.3 L 62.57 305.23 L 76.3 318.21 L 90.03 309.6 L 103.77 308.57 L 117.5 279.64 L 131.23 294.17 L 144.96 294.68 L 158.69 303.04 L 172.42 286.2 L 186.15 311.53 L 199.88 313.2 L 213.61 316.28 L 227.34 302.01 L 241.07 322.58 L 254.81 330.55 L 268.54 323.61 L 282.27 303.04 L 296 318.21 L 309.73 319.11 L 323.46 315.38 L 337.19 293.14 L 350.92 316.03 L 364.65 315.77 L 378.38 316.03 L 392.11 301.37 L 405.85 321.04 L 419.58 326.83 L 433.31 326.83 L 447.04 317.31 L 460.77 326.83 L 474.5 332.48 L 488.23 328.88 L 501.96 314.48 L 515.69 322.97 L 529.42 329.27 L 543.15 324.9 L 556.89 300.47 L 570.62 319.5 L 584.35 317.05 L 598.08 315.77 " clip-path="url(#p38d35d230c)" style="fill: none; stroke: #0000ff; stroke-linecap: square"/>
</g>
</g>
<g id="axes_4">
<g id="patch_263">
<path d="M 41.98 458.35 L 604.94 458.35 L 604.94 375.48 L 41.98 375.48 z
" style="fill: #ffffff"/>
</g>
<g id="matplotlib.axis_7">
<g id="xtick_34">
<g id="line2d_345">
<path d="M 48.84 458.35 L 48.84 375.48 " clip-path="url(#p8f85cdcc2b)" style="fill: none; stroke-dasharray: 1.85,0.8; stroke-dashoffset: 0; stroke: #b0b0b0; stroke-opacity: 0.6; stroke-width: 0.5"/>
</g>
<g id="line2d_346">
<g>
<use href="#mde36ec28b2" x="48.84" y="458.35" style="stroke: #000000; stroke-width: 0.8"/>
</g>
</g>
<g id="text_14">
<text style="font-size: 8.28px; font-family: 'Liberation Sans'" transform="translate(41.39 471.14)" textLength="14.91" lengthAdjust="spacingAndGlyphs">00Z</text>
<text style="font-size: 8.28px; font-family: 'Liberation Sans'" transform="translate(36.63 480.1)" textLength="24.43" lengthAdjust="spacingAndGlyphs">16Dec</text>
</g>
</g>
<g id="xtick_35">
<g id="line2d_347">
<path d="M 103.77 458.35 L 103.77 375.48 " clip-path="url(#p8f85cdcc2b)" style="fill: none; stroke-dasharray: 1.85,0.8; stroke-dashoffset: 0; stroke: #b0b0b0; stroke-opacity: 0.6; stroke-width: 0.5"/>
</g>
<g id="line2d_348">
<g>
<use href="#mde36ec28b2" x="103.77" y="458.35" style="stroke: #000000; stroke-width: 0.8"/>
</g>
</g>
<g id="text_15">
<text style="font-size: 8.28px; font-family: 'Liberation Sans'" transform="translate(96.31 471.14)" textLength="14.91" lengthAdjust="spacingAndGlyphs">00Z</text>
<text style="font-size: 8.28px; font-family: 'Liberation Sans'" transform="translate(91.55 480.1)" textLength="24.43" lengthAdjust="spacingAndGlyphs">17Dec</text>
</g>
</g>
<g id="xtick_36">
<g id="line2d_349">
<path d="M 158.69 458.35 L 158.69 375.48 " clip-path="url(#p8f85cdcc2b)" style="fill: none; stroke-dasharray: 1.85,0.8; stroke-dashoffset: 0; stroke: #b0b0b0; stroke-opacity: 0.6; stroke-width: 0.5"/>
</g>
<g id="line2d_350">
<g>
<use href="#mde36ec28b2" x="158.69" y="458.35" style="stroke: #000000; stroke-width: 0.8"/>
</g>
</g>
<g id="text_16">
<text style="font-size: 8.28px; font-family: 'Liberation Sans'" transform="translate(151.24 471.14)" textLength="14.91" lengthAdjust="spacingAndGlyphs">00Z</text>
<text style="font-size: 8.28px; font-family: 'Liberation Sans'" transform="translate(146.47 480.1)" textLength="24.43" lengthAdjust="spacingAndGlyphs">18Dec</text>
</g>
</g>
<g id="xtick_37">
<g id="line2d_351">
<path d="M 213.61 458.35 L 213.61 375.48 " clip-path="url(#p8f85cdcc2b)" style="fill: none; stroke-dasharray: 1.85,0.8; stroke-dashoffset: 0; stroke: #b0b0b0; stroke-opacity: 0.6; stroke-width: 0.5"/>
</g>
<g id="line2d_352">
<g>
<use href="#mde36ec28b2" x="213.61" y="458.35" style="stroke: #000000; stroke-width: 0.8"/>
</g>
</g>
<g id="text_17">
<text style="font-size: 8.28px; font-family: 'Liberation Sans'" transform="translate(206.16 471.14)" textLength="14.91" lengthAdjust="spacingAndGlyphs">00Z</text>
<text style="font-size: 8.28px; font-family: 'Liberation Sans'" transform="translate(201.4 480.1)" textLength="24.43" lengthAdjust="spacingAndGlyphs">19Dec</text>
</g>
</g>
<g id="xtick_38">
<g id="line2d_353">
<path d="M 268.54 458.35 L 268.54 375.48 " clip-path="url(#p8f85cdcc2b)" style="fill: none; stroke-dasharray: 1.85,0.8; stroke-dashoffset: 0; stroke: #b0b0b0; stroke-opacity: 0.6; stroke-width: 0.5"/>
</g>
<g id="line2d_354">
<g>
<use href="#mde36ec28b2" x="268.54" y="458.35" style="stroke: #000000; stroke-width: 0.8"/>
</g>
</g>
<g id="text_18">
<text style="font-size: 8.28px; font-family: 'Liberation Sans'" transform="translate(261.08 471.14)" textLength="14.91" lengthAdjust="spacingAndGlyphs">00Z</text>
<text style="font-size: 8.28px; font-family: 'Liberation Sans'" transform="translate(256.32 480.1)" textLength="24.43" lengthAdjust="spacingAndGlyphs">20Dec</text>
</g>
</g>
<g id="xtick_39">
<g id="line2d_355">
<path d="M 323.46 458.35 L 323.46 375.48 " clip-path="url(#p8f85cdcc2b)" style="fill: none; stroke-dasharray: 1.85,0.8; stroke-dashoffset: 0; stroke: #b0b0b0; stroke-opacity: 0.6; stroke-width: 0.5"/>
</g>
<g id="line2d_356">
<g>
<use href="#mde36ec28b2" x="323.46" y="458.35" style="stroke: #000000; stroke-width: 0.8"/>
</g>
</g>
<g id="text_19">
<text style="font-size: 8.28px; font-family: 'Liberation Sans'" transform="translate(316.01 471.14)" textLength="14.91" lengthAdjust="spacingAndGlyphs">00Z</text>
<text style="font-size: 8.28px; font-family: 'Liberation Sans'" transform="translate(311.25 480.1)" textLength="24.43" lengthAdjust="spacingAndGlyphs">21Dec</text>
</g>
</g>
<g id="xtick_40">
<g id="line2d_357">
<path d="M 378.38 458.35 L 378.38 375.48 " clip-path="url(#p8f85cdcc2b)" style="fill: none; stroke-dasharray: 1.85,0.8; stroke-dashoffset: 0; stroke: #b0b0b0; stroke-opacity: 0.6; stroke-width: 0.5"/>
</g>
<g id="line2d_358">
<g>
<use href="#mde36ec28b2" x="378.38" y="458.35" style="stroke: #000000; stroke-width: 0.8"/>
</g>
</g>
<g id="text_20">
<text style="font-size: 8.28px; font-family: 'Liberation Sans'" transform="translate(370.93 471.14)" textLength="14.91" lengthAdjust="spacingAndGlyphs">00Z</text>
<text style="font-size: 8.28px; font-family: 'Liberation Sans'" transform="translate(366.17 480.1)" textLength="24.43" lengthAdjust="spacingAndGlyphs">22Dec</text>
</g>
</g>
<g id="xtick_41">
<g id="line2d_359">
<path d="M 433.31 458.35 L 433.31 375.48 " clip-path="url(#p8f85cdcc2b)" style="fill: none; stroke-dasharray: 1.85,0.8; stroke-dashoffset: 0; stroke: #b0b0b0; stroke-opacity: 0.6; stroke-width: 0.5"/>
</g>
<g id="line2d_360">
<g>
<use href="#mde36ec28b2" x="433.31" y="458.35" style="stroke: #000000; stroke-width: 0.8"/>
</g>
</g>
<g id="text_21">
<text style="font-size: 8.28px; font-family: 'Liberation Sans'" transform="translate(425.85 471.14)" textLength="14.91" lengthAdjust="spacingAndGlyphs">00Z</text>
<text style="font-size: 8.28px; font-family: 'Liberation Sans'" transform="translate(421.09 480.1)" textLength="24.43" lengthAdjust="spacingAndGlyphs">23Dec</text>
</g>
</g>
<g id="xtick_42">
<g id="line2d_361">
<path d="M 488.23 458.35 L 488.23 375.48 " clip-path="url(#p8f85cdcc2b)" style="fill: none; stroke-dasharray: 1.85,0.8; stroke-dashoffset: 0; stroke: #b0b0b0; stroke-opacity: 0.6; stroke-width: 0.5"/>
</g>
<g id="line2d_362">
<g>
<use href="#mde36ec28b2" x="488.23" y="458.35" style="stroke: #000000; stroke-width: 0.8"/>
</g>
</g>
<g id="text_22">
<text style="font-size: 8.28px; font-family: 'Liberation Sans'" transform="translate(480.78 471.14)" textLength="14.91" lengthAdjust="spacingAndGlyphs">00Z</text>
<text style="font-size: 8.28px; font-family: 'Liberation Sans'" transform="translate(476.02 480.1)" textLength="24.43" lengthAdjust="spacingAndGlyphs">24Dec</text>
</g>
</g>
<g id="xtick_43">
<g id="line2d_363">
<path d="M 543.15 458.35 L 543.15 375.48 " clip-path="url(#p8f85cdcc2b)" style="fill: none; stroke-dasharray: 1.85,0.8; stroke-dashoffset: 0; stroke: #b0b0b0; stroke-opacity: 0.6; stroke-width: 0.5"/>
</g>
<g id="line2d_364">
<g>
<use href="#mde36ec28b2" x="543.15" y="458.35" style="stroke: #000000; stroke-width: 0.8"/>
</g>
</g>
<g id="text_23">
<text style="font-size: 8.28px; font-family: 'Liberation Sans'" transform="translate(535.7 471.14)" textLength="14.91" lengthAdjust="spacingAndGlyphs">00Z</text>
<text style="font-size: 8.28px; font-family: 'Liberation Sans'" transform="translate(530.94 480.1)" textLength="24.43" lengthAdjust="spacingAndGlyphs">25Dec</text>
</g>
</g>
<g id="xtick_44">
<g id="line2d_365">
<path d="M 598.08 458.35 L 598.08 375.48 " clip-path="url(#p8f85cdcc2b)" style="fill: none; stroke-dasharray: 1.85,0.8; stroke-dashoffset: 0; stroke: #b0b0b0; stroke-opacity: 0.6; stroke-width: 0.5"/>
</g>
<g id="line2d_366">
<g>
<use href="#mde36ec28b2" x="598.08" y="458.35" style="stroke: #000000; stroke-width: 0.8"/>
</g>
</g>
<g id="text_24">
<text style="font-size: 8.28px; font-family: 'Liberation Sans'" transform="translate(590.62 471.14)" textLength="14.91" lengthAdjust="spacingAndGlyphs">00Z</text>
<text style="font-size: 8.28px; font-family: 'Liberation Sans'" transform="translate(585.86 480.1)" textLength="24.43" lengthAdjust="spacingAndGlyphs">26Dec</text>
</g>
</g>
</g>
<g id="matplotlib.axis_8">
<g id="ytick_14">
<g id="line2d_367">
<path d="M 41.98 443.23 L 604.94 443.23 " clip-path="url(#p8f85cdcc2b)" style="fill: none; stroke-dasharray: 1.85,0.8; stroke-dashoffset: 0; stroke: #b0b0b0; stroke-opacity: 0.6; stroke-width: 0.5"/>
</g>
<g id="line2d_368">
<g>
<use href="#mc78ae8635a" x="41.98" y="443.23" style="stroke: #000000; stroke-width: 0.8"/>
</g>
</g>
<g id="text_25">
<text style="font-size: 8.28px; font-family: 'Liberation Sans'; text-anchor: end" x="34.98" y="446.27" transform="rotate(-0 34.98 446.27)" textLength="9.69" lengthAdjust="spacingAndGlyphs">20</text>
</g>
</g>
<g id="ytick_15">
<g id="line2d_369">
<path d="M 41.98 414.68 L 604.94 414.68 " clip-path="url(#p8f85cdcc2b)" style="fill: none; stroke-dasharray: 1.85,0.8; stroke-dashoffset: 0; stroke: #b0b0b0; stroke-opacity: 0.6; stroke-width: 0.5"/>
</g>
<g id="line2d_370">
<g>
<use href="#mc78ae8635a" x="41.98" y="414.68" style="stroke: #000000; stroke-width: 0.8"/>
</g>
</g>
<g id="text_26">
<text style="font-size: 8.28px; font-family: 'Liberation Sans'; text-anchor: end" x="34.98" y="417.72" transform="rotate(-0 34.98 417.72)" textLength="9.69" lengthAdjust="spacingAndGlyphs">25</text>
</g>
</g>
<g id="ytick_16">
<g id="line2d_371">
<path d="M 41.98 386.12 L 604.94 386.12 " clip-path="url(#p8f85cdcc2b)" style="fill: none; stroke-dasharray: 1.85,0.8; stroke-dashoffset: 0; stroke: #b0b0b0; stroke-opacity: 0.6; stroke-width: 0.5"/>
</g>
<g id="line2d_372">
<g>
<use href="#mc78ae8635a" x="41.98" y="386.12" style="stroke: #000000; stroke-width: 0.8"/>
</g>
</g>
<g id="text_27">
<text style="font-size: 8.28px; font-family: 'Liberation Sans'; text-anchor: end" x="34.98" y="389.16" transform="rotate(-0 34.98 389.16)" textLength="9.69" lengthAdjust="spacingAndGlyphs">30</text>
</g>
</g>
</g>
<g id="line2d_373">
<path d="M 48.84 435.35 L 48.84 435.35 " clip-path="url(#p8f85cdcc2b)" style="fill: none; stroke: #3a3a3a; stroke-width: 0.8"/>
</g>
<g id="line2d_374">
<path d="M 62.57 392.49 L 62.57 389.92 " clip-path="url(#p8f85cdcc2b)" style="fill: none; stroke: #3a3a3a; stroke-width: 0.8"/>
</g>
<g id="line2d_375">
<path d="M 76.3 406.42 L 76.3 403.85 " clip-path="url(#p8f85cdcc2b)" style="fill: none; stroke: #3a3a3a; stroke-width: 0.8"/>
</g>
<g id="line2d_376">
<path d="M 90.03 423.76 L 90.03 420.33 " clip-path="url(#p8f85cdcc2b)" style="fill: none; stroke: #3a3a3a; stroke-width: 0.8"/>
</g>
<g id="line2d_377">
<path d="M 103.77 439.21 L 103.77 436.64 " clip-path="url(#p8f85cdcc2b)" style="fill: none; stroke: #3a3a3a; stroke-width: 0.8"/>
</g>
<g id="line2d_378">
<path d="M 117.5 395.54 L 117.5 391.03 " clip-path="url(#p8f85cdcc2b)" style="fill: none; stroke: #3a3a3a; stroke-width: 0.8"/>
</g>
<g id="line2d_379">
<path d="M 131.23 411.54 L 131.23 407.54 " clip-path="url(#p8f85cdcc2b)" style="fill: none; stroke: #3a3a3a; stroke-width: 0.8"/>
</g>
<g id="line2d_380">
<path d="M 144.96 431.81 L 144.96 428.73 " clip-path="url(#p8f85cdcc2b)" style="fill: none; stroke: #3a3a3a; stroke-width: 0.8"/>
</g>
<g id="line2d_381">
<path d="M 158.69 444.01 L 158.69 441.43 " clip-path="url(#p8f85cdcc2b)" style="fill: none; stroke: #3a3a3a; stroke-width: 0.8"/>
</g>
<g id="line2d_382">
<path d="M 172.42 403.03 L 172.42 399.94 " clip-path="url(#p8f85cdcc2b)" style="fill: none; stroke: #3a3a3a; stroke-width: 0.8"/>
</g>
<g id="line2d_383">
<path d="M 186.15 416.7 L 186.15 414.13 " clip-path="url(#p8f85cdcc2b)" style="fill: none; stroke: #3a3a3a; stroke-width: 0.8"/>
</g>
<g id="line2d_384">
<path d="M 199.88 437.52 L 199.88 433.52 " clip-path="url(#p8f85cdcc2b)" style="fill: none; stroke: #3a3a3a; stroke-width: 0.8"/>
</g>
<g id="line2d_385">
<path d="M 213.61 452.29 L 213.61 449.72 " clip-path="url(#p8f85cdcc2b)" style="fill: none; stroke: #3a3a3a; stroke-width: 0.8"/>
</g>
<g id="line2d_386">
<path d="M 227.34 401.14 L 227.34 398.06 " clip-path="url(#p8f85cdcc2b)" style="fill: none; stroke: #3a3a3a; stroke-width: 0.8"/>
</g>
<g id="line2d_387">
<path d="M 241.07 418.48 L 241.07 415.91 " clip-path="url(#p8f85cdcc2b)" style="fill: none; stroke: #3a3a3a; stroke-width: 0.8"/>
</g>
<g id="line2d_388">
<path d="M 254.81 443.01 L 254.81 434.1 " clip-path="url(#p8f85cdcc2b)" style="fill: none; stroke: #3a3a3a; stroke-width: 0.8"/>
</g>
<g id="line2d_389">
<path d="M 268.54 448.95 L 268.54 443.81 " clip-path="url(#p8f85cdcc2b)" style="fill: none; stroke: #3a3a3a; stroke-width: 0.8"/>
</g>
<g id="line2d_390">
<path d="M 282.27 394.12 L 282.27 387.83 " clip-path="url(#p8f85cdcc2b)" style="fill: none; stroke: #3a3a3a; stroke-width: 0.8"/>
</g>
<g id="line2d_391">
<path d="M 296 415.82 L 296 410.11 " clip-path="url(#p8f85cdcc2b)" style="fill: none; stroke: #3a3a3a; stroke-width: 0.8"/>
</g>
<g id="line2d_392">
<path d="M 309.73 437.92 L 309.73 430.9 " clip-path="url(#p8f85cdcc2b)" style="fill: none; stroke: #3a3a3a; stroke-width: 0.8"/>
</g>
<g id="line2d_393">
<path d="M 323.46 452.49 L 323.46 445.52 " clip-path="url(#p8f85cdcc2b)" style="fill: none; stroke: #3a3a3a; stroke-width: 0.8"/>
</g>
<g id="line2d_394">
<path d="M 337.19 397.94 L 337.19 390.12 " clip-path="url(#p8f85cdcc2b)" style="fill: none; stroke: #3a3a3a; stroke-width: 0.8"/>
</g>
<g id="line2d_395">
<path d="M 350.92 417.7 L 350.92 407.82 " clip-path="url(#p8f85cdcc2b)" style="fill: none; stroke: #3a3a3a; stroke-width: 0.8"/>
</g>
<g id="line2d_396">
<path d="M 364.65 437.92 L 364.65 429.3 " clip-path="url(#p8f85cdcc2b)" style="fill: none; stroke: #3a3a3a; stroke-width: 0.8"/>
</g>
<g id="line2d_397">
<path d="M 378.38 454.43 L 378.38 446.78 " clip-path="url(#p8f85cdcc2b)" style="fill: none; stroke: #3a3a3a; stroke-width: 0.8"/>
</g>
<g id="line2d_398">
<path d="M 392.11 407.2 L 392.11 395.66 " clip-path="url(#p8f85cdcc2b)" style="fill: none; stroke: #3a3a3a; stroke-width: 0.8"/>
</g>
<g id="line2d_399">
<path d="M 405.85 418.22 L 405.85 410.62 " clip-path="url(#p8f85cdcc2b)" style="fill: none; stroke: #3a3a3a; stroke-width: 0.8"/>
</g>
<g id="line2d_400">
<path d="M 419.58 439.58 L 419.58 430.27 " clip-path="url(#p8f85cdcc2b)" style="fill: none; stroke: #3a3a3a; stroke-width: 0.8"/>
</g>
<g id="line2d_401">
<path d="M 433.31 452.49 L 433.31 440.44 " clip-path="url(#p8f85cdcc2b)" style="fill: none; stroke: #3a3a3a; stroke-width: 0.8"/>
</g>
<g id="line2d_402">
<path d="M 447.04 402 L 447.04 386.52 " clip-path="url(#p8f85cdcc2b)" style="fill: none; stroke: #3a3a3a; stroke-width: 0.8"/>
</g>
<g id="line2d_403">
<path d="M 460.77 415.25 L 460.77 407.82 " clip-path="url(#p8f85cdcc2b)" style="fill: none; stroke: #3a3a3a; stroke-width: 0.8"/>
</g>
<g id="line2d_404">
<path d="M 474.5 437.92 L 474.5 426.1 " clip-path="url(#p8f85cdcc2b)" style="fill: none; stroke: #3a3a3a; stroke-width: 0.8"/>
</g>
<g id="line2d_405">
<path d="M 488.23 446.15 L 488.23 437.92 " clip-path="url(#p8f85cdcc2b)" style="fill: none; stroke: #3a3a3a; stroke-width: 0.8"/>
</g>
<g id="line2d_406">
<path d="M 501.96 397.31 L 501.96 379.15 " clip-path="url(#p8f85cdcc2b)" style="fill: none; stroke: #3a3a3a; stroke-width: 0.8"/>
</g>
<g id="line2d_407">
<path d="M 515.69 416.33 L 515.69 404 " clip-path="url(#p8f85cdcc2b)" style="fill: none; stroke: #3a3a3a; stroke-width: 0.8"/>
</g>
<g id="line2d_408">
<path d="M 529.42 439.58 L 529.42 425.59 " clip-path="url(#p8f85cdcc2b)" style="fill: none; stroke: #3a3a3a; stroke-width: 0.8"/>
</g>
<g id="line2d_409">
<path d="M 543.15 448.72 L 543.15 434.5 " clip-path="url(#p8f85cdcc2b)" style="fill: none; stroke: #3a3a3a; stroke-width: 0.8"/>
</g>
<g id="line2d_410">
<path d="M 556.89 399.83 L 556.89 381.15 " clip-path="url(#p8f85cdcc2b)" style="fill: none; stroke: #3a3a3a; stroke-width: 0.8"/>
</g>
<g id="line2d_411">
<path d="M 570.62 413.82 L 570.62 399.83 " clip-path="url(#p8f85cdcc2b)" style="fill: none; stroke: #3a3a3a; stroke-width: 0.8"/>
</g>
<g id="line2d_412">
<path d="M 584.35 435.98 L 584.35 419.25 " clip-path="url(#p8f85cdcc2b)" style="fill: none; stroke: #3a3a3a; stroke-width: 0.8"/>
</g>
<g id="line2d_413">
<path d="M 598.08 454.77 L 598.08 436.27 " clip-path="url(#p8f85cdcc2b)" style="fill: none; stroke: #3a3a3a; stroke-width: 0.8"/>
</g>
<g id="patch_264">
<path d="M 41.98 458.35 L 41.98 375.48 " style="fill: none; stroke: #000000; stroke-width: 0.8; stroke-linejoin: miter; stroke-linecap: square"/>
</g>
<g id="patch_265">
<path d="M 604.94 458.35 L 604.94 375.48 " style="fill: none; stroke: #000000; stroke-width: 0.8; stroke-linejoin: miter; stroke-linecap: square"/>
</g>
<g id="patch_266">
<path d="M 41.98 458.35 L 604.94 458.35 " style="fill: none; stroke: #000000; stroke-width: 0.8; stroke-linejoin: miter; stroke-linecap: square"/>
</g>
<g id="patch_267">
<path d="M 41.98 375.48 L 604.94 375.48 " style="fill: none; stroke: #000000; stroke-width: 0.8; stroke-linejoin: miter; stroke-linecap: square"/>
</g>
<g id="patch_268">
<path d="M 47.41 435.35 L 50.27 435.35 L 50.27 435.35 L 47.41 435.35 z
" clip-path="url(#p8f85cdcc2b)" style="fill: #99ff66; stroke: #000000; stroke-width: 0.6; stroke-linejoin: miter"/>
</g>
<g id="patch_269">
<path d="M 61.14 392.06 L 64 392.06 L 64 390.35 L 61.14 390.35 z
" clip-path="url(#p8f85cdcc2b)" style="fill: #99ff66; stroke: #000000; stroke-width: 0.6; stroke-linejoin: miter"/>
</g>
<g id="patch_270">
<path d="M 74.87 406 L 77.73 406 L 77.73 404.28 L 74.87 404.28 z
" clip-path="url(#p8f85cdcc2b)" style="fill: #99ff66; stroke: #000000; stroke-width: 0.6; stroke-linejoin: miter"/>
</g>
<g id="patch_271">
<path d="M 88.6 423.19 L 91.46 423.19 L 91.46 420.9 L 88.6 420.9 z
" clip-path="url(#p8f85cdcc2b)" style="fill: #99ff66; stroke: #000000; stroke-width: 0.6; stroke-linejoin: miter"/>
</g>
<g id="patch_272">
<path d="M 102.33 438.78 L 105.2 438.78 L 105.2 437.07 L 102.33 437.07 z
" clip-path="url(#p8f85cdcc2b)" style="fill: #99ff66; stroke: #000000; stroke-width: 0.6; stroke-linejoin: miter"/>
</g>
<g id="patch_273">
<path d="M 116.07 394.97 L 118.93 394.97 L 118.93 391.83 L 116.07 391.83 z
" clip-path="url(#p8f85cdcc2b)" style="fill: #99ff66; stroke: #000000; stroke-width: 0.6; stroke-linejoin: miter"/>
</g>
<g id="patch_274">
<path d="M 129.8 411.14 L 132.66 411.14 L 132.66 408.17 L 129.8 408.17 z
" clip-path="url(#p8f85cdcc2b)" style="fill: #99ff66; stroke: #000000; stroke-width: 0.6; stroke-linejoin: miter"/>
</g>
<g id="patch_275">
<path d="M 143.53 431.3 L 146.39 431.3 L 146.39 429.24 L 143.53 429.24 z
" clip-path="url(#p8f85cdcc2b)" style="fill: #99ff66; stroke: #000000; stroke-width: 0.6; stroke-linejoin: miter"/>
</g>
<g id="patch_276">
<path d="M 157.26 443.58 L 160.12 443.58 L 160.12 441.86 L 157.26 441.86 z
" clip-path="url(#p8f85cdcc2b)" style="fill: #99ff66; stroke: #000000; stroke-width: 0.6; stroke-linejoin: miter"/>
</g>
<g id="patch_277">
<path d="M 170.99 402.51 L 173.85 402.51 L 173.85 400.46 L 170.99 400.46 z
" clip-path="url(#p8f85cdcc2b)" style="fill: #99ff66; stroke: #000000; stroke-width: 0.6; stroke-linejoin: miter"/>
</g>
<g id="patch_278">
<path d="M 184.72 416.28 L 187.58 416.28 L 187.58 414.56 L 184.72 414.56 z
" clip-path="url(#p8f85cdcc2b)" style="fill: #99ff66; stroke: #000000; stroke-width: 0.6; stroke-linejoin: miter"/>
</g>
<g id="patch_279">
<path d="M 198.45 437.24 L 201.31 437.24 L 201.31 434.67 L 198.45 434.67 z
" clip-path="url(#p8f85cdcc2b)" style="fill: #99ff66; stroke: #000000; stroke-width: 0.6; stroke-linejoin: miter"/>
</g>
<g id="patch_280">
<path d="M 212.18 451.86 L 215.04 451.86 L 215.04 450.14 L 212.18 450.14 z
" clip-path="url(#p8f85cdcc2b)" style="fill: #99ff66; stroke: #000000; stroke-width: 0.6; stroke-linejoin: miter"/>
</g>
<g id="patch_281">
<path d="M 225.91 400.63 L 228.77 400.63 L 228.77 398.57 L 225.91 398.57 z
" clip-path="url(#p8f85cdcc2b)" style="fill: #99ff66; stroke: #000000; stroke-width: 0.6; stroke-linejoin: miter"/>
</g>
<g id="patch_282">
<path d="M 239.64 418.05 L 242.5 418.05 L 242.5 416.33 L 239.64 416.33 z
" clip-path="url(#p8f85cdcc2b)" style="fill: #99ff66; stroke: #000000; stroke-width: 0.6; stroke-linejoin: miter"/>
</g>
<g id="patch_283">
<path d="M 253.38 440.44 L 256.24 440.44 L 256.24 436.61 L 253.38 436.61 z
" clip-path="url(#p8f85cdcc2b)" style="fill: #99ff66; stroke: #000000; stroke-width: 0.6; stroke-linejoin: miter"/>
</g>
<g id="patch_284">
<path d="M 267.11 448.72 L 269.97 448.72 L 269.97 444.26 L 267.11 444.26 z
" clip-path="url(#p8f85cdcc2b)" style="fill: #99ff66; stroke: #000000; stroke-width: 0.6; stroke-linejoin: miter"/>
</g>
<g id="patch_285">
<path d="M 280.84 392.86 L 283.7 392.86 L 283.7 389.66 L 280.84 389.66 z
" clip-path="url(#p8f85cdcc2b)" style="fill: #99ff66; stroke: #000000; stroke-width: 0.6; stroke-linejoin: miter"/>
</g>
<g id="patch_286">
<path d="M 294.57 415.42 L 297.43 415.42 L 297.43 410.62 L 294.57 410.62 z
" clip-path="url(#p8f85cdcc2b)" style="fill: #99ff66; stroke: #000000; stroke-width: 0.6; stroke-linejoin: miter"/>
</g>
<g id="patch_287">
<path d="M 308.3 435.98 L 311.16 435.98 L 311.16 432.44 L 308.3 432.44 z
" clip-path="url(#p8f85cdcc2b)" style="fill: #99ff66; stroke: #000000; stroke-width: 0.6; stroke-linejoin: miter"/>
</g>
<g id="patch_288">
<path d="M 322.03 451.23 L 324.89 451.23 L 324.89 446.43 L 322.03 446.43 z
" clip-path="url(#p8f85cdcc2b)" style="fill: #99ff66; stroke: #000000; stroke-width: 0.6; stroke-linejoin: miter"/>
</g>
<g id="patch_289">
<path d="M 335.76 397.31 L 338.62 397.31 L 338.62 393.49 L 335.76 393.49 z
" clip-path="url(#p8f85cdcc2b)" style="fill: #99ff66; stroke: #000000; stroke-width: 0.6; stroke-linejoin: miter"/>
</g>
<g id="patch_290">
<path d="M 349.49 416.96 L 352.35 416.96 L 352.35 412.51 L 349.49 412.51 z
" clip-path="url(#p8f85cdcc2b)" style="fill: #99ff66; stroke: #000000; stroke-width: 0.6; stroke-linejoin: miter"/>
</g>
<g id="patch_291">
<path d="M 363.22 435.98 L 366.08 435.98 L 366.08 432.21 L 363.22 432.21 z
" clip-path="url(#p8f85cdcc2b)" style="fill: #99ff66; stroke: #000000; stroke-width: 0.6; stroke-linejoin: miter"/>
</g>
<g id="patch_292">
<path d="M 376.95 451.23 L 379.81 451.23 L 379.81 447.4 L 376.95 447.4 z
" clip-path="url(#p8f85cdcc2b)" style="fill: #99ff66; stroke: #000000; stroke-width: 0.6; stroke-linejoin: miter"/>
</g>
<g id="patch_293">
<path d="M 390.68 404.4 L 393.54 404.4 L 393.54 396.4 L 390.68 396.4 z
" clip-path="url(#p8f85cdcc2b)" style="fill: #99ff66; stroke: #000000; stroke-width: 0.6; stroke-linejoin: miter"/>
</g>
<g id="patch_294">
<path d="M 404.42 416.96 L 407.28 416.96 L 407.28 411.25 L 404.42 411.25 z
" clip-path="url(#p8f85cdcc2b)" style="fill: #99ff66; stroke: #000000; stroke-width: 0.6; stroke-linejoin: miter"/>
</g>
<g id="patch_295">
<path d="M 418.15 436.61 L 421.01 436.61 L 421.01 430.9 L 418.15 430.9 z
" clip-path="url(#p8f85cdcc2b)" style="fill: #99ff66; stroke: #000000; stroke-width: 0.6; stroke-linejoin: miter"/>
</g>
<g id="patch_296">
<path d="M 431.88 447.4 L 434.74 447.4 L 434.74 441.69 L 431.88 441.69 z
" clip-path="url(#p8f85cdcc2b)" style="fill: #99ff66; stroke: #000000; stroke-width: 0.6; stroke-linejoin: miter"/>
</g>
<g id="patch_297">
<path d="M 445.61 394.12 L 448.47 394.12 L 448.47 388.4 L 445.61 388.4 z
" clip-path="url(#p8f85cdcc2b)" style="fill: #99ff66; stroke: #000000; stroke-width: 0.6; stroke-linejoin: miter"/>
</g>
<g id="patch_298">
<path d="M 459.34 414.45 L 462.2 414.45 L 462.2 410.62 L 459.34 410.62 z
" clip-path="url(#p8f85cdcc2b)" style="fill: #99ff66; stroke: #000000; stroke-width: 0.6; stroke-linejoin: miter"/>
</g>
<g id="patch_299">
<path d="M 473.07 435.98 L 475.93 435.98 L 475.93 429.64 L 473.07 429.64 z
" clip-path="url(#p8f85cdcc2b)" style="fill: #99ff66; stroke: #000000; stroke-width: 0.6; stroke-linejoin: miter"/>
</g>
<g id="patch_300">
<path d="M 486.8 443.63 L 489.66 443.63 L 489.66 439.18 L 486.8 439.18 z
" clip-path="url(#p8f85cdcc2b)" style="fill: #99ff66; stroke: #000000; stroke-width: 0.6; stroke-linejoin: miter"/>
</g>
<g id="patch_301">
<path d="M 500.53 392.23 L 503.39 392.23 L 503.39 382.07 L 500.53 382.07 z
" clip-path="url(#p8f85cdcc2b)" style="fill: #99ff66; stroke: #000000; stroke-width: 0.6; stroke-linejoin: miter"/>
</g>
<g id="patch_302">
<path d="M 514.26 411.88 L 517.12 411.88 L 517.12 407.42 L 514.26 407.42 z
" clip-path="url(#p8f85cdcc2b)" style="fill: #99ff66; stroke: #000000; stroke-width: 0.6; stroke-linejoin: miter"/>
</g>
<g id="patch_303">
<path d="M 527.99 437.01 L 530.85 437.01 L 530.85 427.36 L 527.99 427.36 z
" clip-path="url(#p8f85cdcc2b)" style="fill: #99ff66; stroke: #000000; stroke-width: 0.6; stroke-linejoin: miter"/>
</g>
<g id="patch_304">
<path d="M 541.72 446.78 L 544.59 446.78 L 544.59 438.55 L 541.72 438.55 z
" clip-path="url(#p8f85cdcc2b)" style="fill: #99ff66; stroke: #000000; stroke-width: 0.6; stroke-linejoin: miter"/>
</g>
<g id="patch_305">
<path d="M 555.46 396 L 558.32 396 L 558.32 382.47 L 555.46 382.47 z
" clip-path="url(#p8f85cdcc2b)" style="fill: #99ff66; stroke: #000000; stroke-width: 0.6; stroke-linejoin: miter"/>
</g>
<g id="patch_306">
<path d="M 569.19 411.88 L 572.05 411.88 L 572.05 406.68 L 569.19 406.68 z
" clip-path="url(#p8f85cdcc2b)" style="fill: #99ff66; stroke: #000000; stroke-width: 0.6; stroke-linejoin: miter"/>
</g>
<g id="patch_307">
<path d="M 582.92 434.1 L 585.78 434.1 L 585.78 429.64 L 582.92 429.64 z
" clip-path="url(#p8f85cdcc2b)" style="fill: #99ff66; stroke: #000000; stroke-width: 0.6; stroke-linejoin: miter"/>
</g>
<g id="patch_308">
<path d="M 596.65 451.46 L 599.51 451.46 L 599.51 439.81 L 596.65 439.81 z
" clip-path="url(#p8f85cdcc2b)" style="fill: #99ff66; stroke: #000000; stroke-width: 0.6; stroke-linejoin: miter"/>
</g>
<g id="patch_309">
<path d="M 46.04 435.35 L 51.64 435.35 L 51.64 435.35 L 46.04 435.35 z
" clip-path="url(#p8f85cdcc2b)" style="fill: #99ff66; stroke: #000000; stroke-width: 0.6; stroke-linejoin: miter"/>
</g>
<g id="patch_310">
<path d="M 59.77 391.63 L 65.38 391.63 L 65.38 390.78 L 59.77 390.78 z
" clip-path="url(#p8f85cdcc2b)" style="fill: #99ff66; stroke: #000000; stroke-width: 0.6; stroke-linejoin: miter"/>
</g>
<g id="patch_311">
<path d="M 73.5 405.57 L 79.11 405.57 L 79.11 404.71 L 73.5 404.71 z
" clip-path="url(#p8f85cdcc2b)" style="fill: #99ff66; stroke: #000000; stroke-width: 0.6; stroke-linejoin: miter"/>
</g>
<g id="patch_312">
<path d="M 87.23 422.62 L 92.84 422.62 L 92.84 421.47 L 87.23 421.47 z
" clip-path="url(#p8f85cdcc2b)" style="fill: #99ff66; stroke: #000000; stroke-width: 0.6; stroke-linejoin: miter"/>
</g>
<g id="patch_313">
<path d="M 100.96 438.35 L 106.57 438.35 L 106.57 437.49 L 100.96 437.49 z
" clip-path="url(#p8f85cdcc2b)" style="fill: #99ff66; stroke: #000000; stroke-width: 0.6; stroke-linejoin: miter"/>
</g>
<g id="patch_314">
<path d="M 114.69 394.74 L 120.3 394.74 L 120.3 392.46 L 114.69 392.46 z
" clip-path="url(#p8f85cdcc2b)" style="fill: #99ff66; stroke: #000000; stroke-width: 0.6; stroke-linejoin: miter"/>
</g>
<g id="patch_315">
<path d="M 128.42 410.91 L 134.03 410.91 L 134.03 408.68 L 128.42 408.68 z
" clip-path="url(#p8f85cdcc2b)" style="fill: #99ff66; stroke: #000000; stroke-width: 0.6; stroke-linejoin: miter"/>
</g>
<g id="patch_316">
<path d="M 142.15 430.78 L 147.76 430.78 L 147.76 429.76 L 142.15 429.76 z
" clip-path="url(#p8f85cdcc2b)" style="fill: #99ff66; stroke: #000000; stroke-width: 0.6; stroke-linejoin: miter"/>
</g>
<g id="patch_317">
<path d="M 155.89 443.15 L 161.49 443.15 L 161.49 442.29 L 155.89 442.29 z
" clip-path="url(#p8f85cdcc2b)" style="fill: #99ff66; stroke: #000000; stroke-width: 0.6; stroke-linejoin: miter"/>
</g>
<g id="patch_318">
<path d="M 169.62 402 L 175.22 402 L 175.22 400.97 L 169.62 400.97 z
" clip-path="url(#p8f85cdcc2b)" style="fill: #99ff66; stroke: #000000; stroke-width: 0.6; stroke-linejoin: miter"/>
</g>
<g id="patch_319">
<path d="M 183.35 415.85 L 188.95 415.85 L 188.95 414.99 L 183.35 414.99 z
" clip-path="url(#p8f85cdcc2b)" style="fill: #99ff66; stroke: #000000; stroke-width: 0.6; stroke-linejoin: miter"/>
</g>
<g id="patch_320">
<path d="M 197.08 436.67 L 202.69 436.67 L 202.69 435.24 L 197.08 435.24 z
" clip-path="url(#p8f85cdcc2b)" style="fill: #99ff66; stroke: #000000; stroke-width: 0.6; stroke-linejoin: miter"/>
</g>
<g id="patch_321">
<path d="M 210.81 451.43 L 216.42 451.43 L 216.42 450.57 L 210.81 450.57 z
" clip-path="url(#p8f85cdcc2b)" style="fill: #99ff66; stroke: #000000; stroke-width: 0.6; stroke-linejoin: miter"/>
</g>
<g id="patch_322">
<path d="M 224.54 400.11 L 230.15 400.11 L 230.15 399.09 L 224.54 399.09 z
" clip-path="url(#p8f85cdcc2b)" style="fill: #99ff66; stroke: #000000; stroke-width: 0.6; stroke-linejoin: miter"/>
</g>
<g id="patch_323">
<path d="M 238.27 417.62 L 243.88 417.62 L 243.88 416.76 L 238.27 416.76 z
" clip-path="url(#p8f85cdcc2b)" style="fill: #99ff66; stroke: #000000; stroke-width: 0.6; stroke-linejoin: miter"/>
</g>
<g id="patch_324">
<path d="M 252 439.81 L 257.61 439.81 L 257.61 437.52 L 252 437.52 z
" clip-path="url(#p8f85cdcc2b)" style="fill: #99ff66; stroke: #000000; stroke-width: 0.6; stroke-linejoin: miter"/>
</g>
<g id="patch_325">
<path d="M 265.73 447.23 L 271.34 447.23 L 271.34 444.95 L 265.73 444.95 z
" clip-path="url(#p8f85cdcc2b)" style="fill: #99ff66; stroke: #000000; stroke-width: 0.6; stroke-linejoin: miter"/>
</g>
<g id="patch_326">
<path d="M 279.46 392.4 L 285.07 392.4 L 285.07 390.69 L 279.46 390.69 z
" clip-path="url(#p8f85cdcc2b)" style="fill: #99ff66; stroke: #000000; stroke-width: 0.6; stroke-linejoin: miter"/>
</g>
<g id="patch_327">
<path d="M 293.19 414.68 L 298.8 414.68 L 298.8 411.82 L 293.19 411.82 z
" clip-path="url(#p8f85cdcc2b)" style="fill: #99ff66; stroke: #000000; stroke-width: 0.6; stroke-linejoin: miter"/>
</g>
<g id="patch_328">
<path d="M 306.93 435.24 L 312.53 435.24 L 312.53 433.24 L 306.93 433.24 z
" clip-path="url(#p8f85cdcc2b)" style="fill: #99ff66; stroke: #000000; stroke-width: 0.6; stroke-linejoin: miter"/>
</g>
<g id="patch_329">
<path d="M 320.66 450.09 L 326.26 450.09 L 326.26 447.23 L 320.66 447.23 z
" clip-path="url(#p8f85cdcc2b)" style="fill: #99ff66; stroke: #000000; stroke-width: 0.6; stroke-linejoin: miter"/>
</g>
<g id="patch_330">
<path d="M 334.39 396.4 L 339.99 396.4 L 339.99 394.12 L 334.39 394.12 z
" clip-path="url(#p8f85cdcc2b)" style="fill: #99ff66; stroke: #000000; stroke-width: 0.6; stroke-linejoin: miter"/>
</g>
<g id="patch_331">
<path d="M 348.12 415.82 L 353.73 415.82 L 353.73 413.25 L 348.12 413.25 z
" clip-path="url(#p8f85cdcc2b)" style="fill: #99ff66; stroke: #000000; stroke-width: 0.6; stroke-linejoin: miter"/>
</g>
<g id="patch_332">
<path d="M 361.85 435.24 L 367.46 435.24 L 367.46 432.67 L 361.85 432.67 z
" clip-path="url(#p8f85cdcc2b)" style="fill: #99ff66; stroke: #000000; stroke-width: 0.6; stroke-linejoin: miter"/>
</g>
<g id="patch_333">
<path d="M 375.58 450.09 L 381.19 450.09 L 381.19 448.37 L 375.58 448.37 z
" clip-path="url(#p8f85cdcc2b)" style="fill: #99ff66; stroke: #000000; stroke-width: 0.6; stroke-linejoin: miter"/>
</g>
<g id="patch_334">
<path d="M 389.31 401.54 L 394.92 401.54 L 394.92 397.54 L 389.31 397.54 z
" clip-path="url(#p8f85cdcc2b)" style="fill: #99ff66; stroke: #000000; stroke-width: 0.6; stroke-linejoin: miter"/>
</g>
<g id="patch_335">
<path d="M 403.04 415.82 L 408.65 415.82 L 408.65 412.39 L 403.04 412.39 z
" clip-path="url(#p8f85cdcc2b)" style="fill: #99ff66; stroke: #000000; stroke-width: 0.6; stroke-linejoin: miter"/>
</g>
<g id="patch_336">
<path d="M 416.77 435.24 L 422.38 435.24 L 422.38 432.1 L 416.77 432.1 z
" clip-path="url(#p8f85cdcc2b)" style="fill: #99ff66; stroke: #000000; stroke-width: 0.6; stroke-linejoin: miter"/>
</g>
<g id="patch_337">
<path d="M 430.5 446.09 L 436.11 446.09 L 436.11 442.66 L 430.5 442.66 z
" clip-path="url(#p8f85cdcc2b)" style="fill: #99ff66; stroke: #000000; stroke-width: 0.6; stroke-linejoin: miter"/>
</g>
<g id="patch_338">
<path d="M 444.23 392.97 L 449.84 392.97 L 449.84 389.55 L 444.23 389.55 z
" clip-path="url(#p8f85cdcc2b)" style="fill: #99ff66; stroke: #000000; stroke-width: 0.6; stroke-linejoin: miter"/>
</g>
<g id="patch_339">
<path d="M 457.97 413.53 L 463.57 413.53 L 463.57 411.25 L 457.97 411.25 z
" clip-path="url(#p8f85cdcc2b)" style="fill: #99ff66; stroke: #000000; stroke-width: 0.6; stroke-linejoin: miter"/>
</g>
<g id="patch_340">
<path d="M 471.7 434.67 L 477.3 434.67 L 477.3 431.24 L 471.7 431.24 z
" clip-path="url(#p8f85cdcc2b)" style="fill: #99ff66; stroke: #000000; stroke-width: 0.6; stroke-linejoin: miter"/>
</g>
<g id="patch_341">
<path d="M 485.43 442.95 L 491.03 442.95 L 491.03 440.09 L 485.43 440.09 z
" clip-path="url(#p8f85cdcc2b)" style="fill: #99ff66; stroke: #000000; stroke-width: 0.6; stroke-linejoin: miter"/>
</g>
<g id="patch_342">
<path d="M 499.16 390.12 L 504.77 390.12 L 504.77 383.84 L 499.16 383.84 z
" clip-path="url(#p8f85cdcc2b)" style="fill: #99ff66; stroke: #000000; stroke-width: 0.6; stroke-linejoin: miter"/>
</g>
<g id="patch_343">
<path d="M 512.89 411.25 L 518.5 411.25 L 518.5 408.39 L 512.89 408.39 z
" clip-path="url(#p8f85cdcc2b)" style="fill: #99ff66; stroke: #000000; stroke-width: 0.6; stroke-linejoin: miter"/>
</g>
<g id="patch_344">
<path d="M 526.62 434.32 L 532.23 434.32 L 532.23 430.9 L 526.62 430.9 z
" clip-path="url(#p8f85cdcc2b)" style="fill: #99ff66; stroke: #000000; stroke-width: 0.6; stroke-linejoin: miter"/>
</g>
<g id="patch_345">
<path d="M 540.35 446.15 L 545.96 446.15 L 545.96 441.06 L 540.35 441.06 z
" clip-path="url(#p8f85cdcc2b)" style="fill: #99ff66; stroke: #000000; stroke-width: 0.6; stroke-linejoin: miter"/>
</g>
<g id="patch_346">
<path d="M 554.08 392.86 L 559.69 392.86 L 559.69 383.32 L 554.08 383.32 z
" clip-path="url(#p8f85cdcc2b)" style="fill: #99ff66; stroke: #000000; stroke-width: 0.6; stroke-linejoin: miter"/>
</g>
<g id="patch_347">
<path d="M 567.81 410.62 L 573.42 410.62 L 573.42 407.2 L 567.81 407.2 z
" clip-path="url(#p8f85cdcc2b)" style="fill: #99ff66; stroke: #000000; stroke-width: 0.6; stroke-linejoin: miter"/>
</g>
<g id="patch_348">
<path d="M 581.54 432.84 L 587.15 432.84 L 587.15 430.27 L 581.54 430.27 z
" clip-path="url(#p8f85cdcc2b)" style="fill: #99ff66; stroke: #000000; stroke-width: 0.6; stroke-linejoin: miter"/>
</g>
<g id="patch_349">
<path d="M 595.28 449.97 L 600.88 449.97 L 600.88 444.89 L 595.28 444.89 z
" clip-path="url(#p8f85cdcc2b)" style="fill: #99ff66; stroke: #000000; stroke-width: 0.6; stroke-linejoin: miter"/>
</g>
<g id="line2d_414">
<path d="M 46.04 435.35 L 51.64 435.35 " clip-path="url(#p8f85cdcc2b)" style="fill: none; stroke: #000000; stroke-width: 0.6"/>
</g>
<g id="line2d_415">
<path d="M 59.77 391.2 L 65.38 391.2 " clip-path="url(#p8f85cdcc2b)" style="fill: none; stroke: #000000; stroke-width: 0.6"/>
</g>
<g id="line2d_416">
<path d="M 73.5 405.14 L 79.11 405.14 " clip-path="url(#p8f85cdcc2b)" style="fill: none; stroke: #000000; stroke-width: 0.6"/>
</g>
<g id="line2d_417">
<path d="M 87.23 422.04 L 92.84 422.04 " clip-path="url(#p8f85cdcc2b)" style="fill: none; stroke: #000000; stroke-width: 0.6"/>
</g>
<g id="line2d_418">
<path d="M 100.96 437.92 L 106.57 437.92 " clip-path="url(#p8f85cdcc2b)" style="fill: none; stroke: #000000; stroke-width: 0.6"/>
</g>
<g id="line2d_419">
<path d="M 114.69 393.6 L 120.3 393.6 " clip-path="url(#p8f85cdcc2b)" style="fill: none; stroke: #000000; stroke-width: 0.6"/>
</g>
<g id="line2d_420">
<path d="M 128.42 409.79 L 134.03 409.79 " clip-path="url(#p8f85cdcc2b)" style="fill: none; stroke: #000000; stroke-width: 0.6"/>
</g>
<g id="line2d_421">
<path d="M 142.15 430.27 L 147.76 430.27 " clip-path="url(#p8f85cdcc2b)" style="fill: none; stroke: #000000; stroke-width: 0.6"/>
</g>
<g id="line2d_422">
<path d="M 155.89 442.72 L 161.49 442.72 " clip-path="url(#p8f85cdcc2b)" style="fill: none; stroke: #000000; stroke-width: 0.6"/>
</g>
<g id="line2d_423">
<path d="M 169.62 401.48 L 175.22 401.48 " clip-path="url(#p8f85cdcc2b)" style="fill: none; stroke: #000000; stroke-width: 0.6"/>
</g>
<g id="line2d_424">
<path d="M 183.35 415.42 L 188.95 415.42 " clip-path="url(#p8f85cdcc2b)" style="fill: none; stroke: #000000; stroke-width: 0.6"/>
</g>
<g id="line2d_425">
<path d="M 197.08 435.95 L 202.69 435.95 " clip-path="url(#p8f85cdcc2b)" style="fill: none; stroke: #000000; stroke-width: 0.6"/>
</g>
<g id="line2d_426">
<path d="M 210.81 451 L 216.42 451 " clip-path="url(#p8f85cdcc2b)" style="fill: none; stroke: #000000; stroke-width: 0.6"/>
</g>
<g id="line2d_427">
<path d="M 224.54 399.6 L 230.15 399.6 " clip-path="url(#p8f85cdcc2b)" style="fill: none; stroke: #000000; stroke-width: 0.6"/>
</g>
<g id="line2d_428">
<path d="M 238.27 417.19 L 243.88 417.19 " clip-path="url(#p8f85cdcc2b)" style="fill: none; stroke: #000000; stroke-width: 0.6"/>
</g>
<g id="line2d_429">
<path d="M 252 438.66 L 257.61 438.66 " clip-path="url(#p8f85cdcc2b)" style="fill: none; stroke: #000000; stroke-width: 0.6"/>
</g>
<g id="line2d_430">
<path d="M 265.73 446.09 L 271.34 446.09 " clip-path="url(#p8f85cdcc2b)" style="fill: none; stroke: #000000; stroke-width: 0.6"/>
</g>
<g id="line2d_431">
<path d="M 279.46 391.55 L 285.07 391.55 " clip-path="url(#p8f85cdcc2b)" style="fill: none; stroke: #000000; stroke-width: 0.6"/>
</g>
<g id="line2d_432">
<path d="M 293.19 413.25 L 298.8 413.25 " clip-path="url(#p8f85cdcc2b)" style="fill: none; stroke: #000000; stroke-width: 0.6"/>
</g>
<g id="line2d_433">
<path d="M 306.93 434.24 L 312.53 434.24 " clip-path="url(#p8f85cdcc2b)" style="fill: none; stroke: #000000; stroke-width: 0.6"/>
</g>
<g id="line2d_434">
<path d="M 320.66 448.66 L 326.26 448.66 " clip-path="url(#p8f85cdcc2b)" style="fill: none; stroke: #000000; stroke-width: 0.6"/>
</g>
<g id="line2d_435">
<path d="M 334.39 395.26 L 339.99 395.26 " clip-path="url(#p8f85cdcc2b)" style="fill: none; stroke: #000000; stroke-width: 0.6"/>
</g>
<g id="line2d_436">
<path d="M 348.12 414.53 L 353.73 414.53 " clip-path="url(#p8f85cdcc2b)" style="fill: none; stroke: #000000; stroke-width: 0.6"/>
</g>
<g id="line2d_437">
<path d="M 361.85 433.95 L 367.46 433.95 " clip-path="url(#p8f85cdcc2b)" style="fill: none; stroke: #000000; stroke-width: 0.6"/>
</g>
<g id="line2d_438">
<path d="M 375.58 449.23 L 381.19 449.23 " clip-path="url(#p8f85cdcc2b)" style="fill: none; stroke: #000000; stroke-width: 0.6"/>
</g>
<g id="line2d_439">
<path d="M 389.31 399.54 L 394.92 399.54 " clip-path="url(#p8f85cdcc2b)" style="fill: none; stroke: #000000; stroke-width: 0.6"/>
</g>
<g id="line2d_440">
<path d="M 403.04 414.11 L 408.65 414.11 " clip-path="url(#p8f85cdcc2b)" style="fill: none; stroke: #000000; stroke-width: 0.6"/>
</g>
<g id="line2d_441">
<path d="M 416.77 433.67 L 422.38 433.67 " clip-path="url(#p8f85cdcc2b)" style="fill: none; stroke: #000000; stroke-width: 0.6"/>
</g>
<g id="line2d_442">
<path d="M 430.5 444.38 L 436.11 444.38 " clip-path="url(#p8f85cdcc2b)" style="fill: none; stroke: #000000; stroke-width: 0.6"/>
</g>
<g id="line2d_443">
<path d="M 444.23 391.26 L 449.84 391.26 " clip-path="url(#p8f85cdcc2b)" style="fill: none; stroke: #000000; stroke-width: 0.6"/>
</g>
<g id="line2d_444">
<path d="M 457.97 412.39 L 463.57 412.39 " clip-path="url(#p8f85cdcc2b)" style="fill: none; stroke: #000000; stroke-width: 0.6"/>
</g>
<g id="line2d_445">
<path d="M 471.7 432.95 L 477.3 432.95 " clip-path="url(#p8f85cdcc2b)" style="fill: none; stroke: #000000; stroke-width: 0.6"/>
</g>
<g id="line2d_446">
<path d="M 485.43 441.52 L 491.03 441.52 " clip-path="url(#p8f85cdcc2b)" style="fill: none; stroke: #000000; stroke-width: 0.6"/>
</g>
<g id="line2d_447">
<path d="M 499.16 386.98 L 504.77 386.98 " clip-path="url(#p8f85cdcc2b)" style="fill: none; stroke: #000000; stroke-width: 0.6"/>
</g>
<g id="line2d_448">
<path d="M 512.89 409.82 L 518.5 409.82 " clip-path="url(#p8f85cdcc2b)" style="fill: none; stroke: #000000; stroke-width: 0.6"/>
</g>
<g id="line2d_449">
<path d="M 526.62 432.61 L 532.23 432.61 " clip-path="url(#p8f85cdcc2b)" style="fill: none; stroke: #000000; stroke-width: 0.6"/>
</g>
<g id="line2d_450">
<path d="M 540.35 443.61 L 545.96 443.61 " clip-path="url(#p8f85cdcc2b)" style="fill: none; stroke: #000000; stroke-width: 0.6"/>
</g>
<g id="line2d_451">
<path d="M 554.08 388.09 L 559.69 388.09 " clip-path="url(#p8f85cdcc2b)" style="fill: none; stroke: #000000; stroke-width: 0.6"/>
</g>
<g id="line2d_452">
<path d="M 567.81 408.91 L 573.42 408.91 " clip-path="url(#p8f85cdcc2b)" style="fill: none; stroke: #000000; stroke-width: 0.6"/>
</g>
<g id="line2d_453">
<path d="M 581.54 431.55 L 587.15 431.55 " clip-path="url(#p8f85cdcc2b)" style="fill: none; stroke: #000000; stroke-width: 0.6"/>
</g>
<g id="line2d_454">
<path d="M 595.28 447.43 L 600.88 447.43 " clip-path="url(#p8f85cdcc2b)" style="fill: none; stroke: #000000; stroke-width: 0.6"/>
</g>
<g id="line2d_455">
<path d="M 48.84 435.35 L 62.57 391.2 L 76.3 405.14 L 90.03 422.04 L 103.77 437.92 L 117.5 394.74 L 131.23 410.28 L 144.96 430.27 L 158.69 442.72 L 172.42 401.48 L 186.15 415.42 L 199.88 435.98 L 213.61 451 L 227.34 399.6 L 241.07 417.19 L 254.81 438.55 L 268.54 446.15 L 282.27 392.23 L 296 413.14 L 309.73 434.5 L 323.46 448.72 L 337.19 395.66 L 350.92 413.14 L 364.65 432.21 L 378.38 448.37 L 392.11 398.17 L 405.85 412.51 L 419.58 432.44 L 433.31 440.04 L 447.04 389.66 L 460.77 411.88 L 474.5 432.21 L 488.23 441.06 L 501.96 385.21 L 515.69 409.37 L 529.42 432.44 L 543.15 443.01 L 556.89 385.49 L 570.62 408.74 L 584.35 430.9 L 598.08 446.43 " clip-path="url(#p8f85cdcc2b)" style="fill: none; stroke: #ff0000; stroke-linecap: square"/>
</g>
<g id="line2d_456">
<path d="M 48.84 435.35 L 62.57 391.2 L 76.3 405.14 L 90.03 422.04 L 103.77 437.92 L 117.5 394.74 L 131.23 410.28 L 144.96 430.27 L 158.69 442.72 L 172.42 401.48 L 186.15 415.42 L 199.88 435.98 L 213.61 451 L 227.34 399.6 L 241.07 417.19 L 254.81 438.55 L 268.54 446.15 L 282.27 392.23 L 296 413.14 L 309.73 434.5 L 323.46 448.72 L 337.19 395.66 L 350.92 414.45 L 364.65 433.47 L 378.38 448.95 L 392.11 399.83 L 405.85 414.16 L 419.58 433.7 L 433.31 443.63 L 447.04 393.49 L 460.77 411.88 L 474.5 433.18 L 488.23 442.09 L 501.96 387.49 L 515.69 410.62 L 529.42 432.44 L 543.15 443.01 L 556.89 388.4 L 570.62 409.59 L 584.35 431.58 L 598.08 446.78 " clip-path="url(#p8f85cdcc2b)" style="fill: none; stroke: #0000ff; stroke-linecap: square"/>
</g>
</g>
<g id="axes_5">
<g id="line2d_457">
<path d="M 406.51 11.23 L 406.51 60.84 " clip-path="url(#pc23416d26c)" style="fill: none; stroke: #3a3a3a; stroke-width: 0.8"/>
</g>
<g id="patch_350">
<path d="M 403.74 20.2 L 409.64 20.2 L 409.64 52.6 L 403.74 52.6 z
" clip-path="url(#pc23416d26c)" style="fill: #99ff66; stroke: #000000; stroke-width: 0.8; stroke-linejoin: miter"/>
</g>
<g id="line2d_458">
<path d="M 501.48 27.5 L 519.62 27.5 " clip-path="url(#pc23416d26c)" style="fill: none; stroke: #ff0000; stroke-linecap: square"/>
</g>
<g id="line2d_459">
<path d="M 501.48 45.22 L 519.62 45.22 " clip-path="url(#pc23416d26c)" style="fill: none; stroke: #0000ff; stroke-linecap: square"/>
</g>
<g id="patch_351">
<path d="M 400.43 28.33 L 412.52 28.33 L 412.52 43.74 L 400.43 43.74 z
" clip-path="url(#pc23416d26c)" style="fill: #99ff66; stroke: #000000; stroke-width: 0.8; stroke-linejoin: miter"/>
</g>
<g id="text_28">
<text style="font-size: 7.25px; font-family: 'Liberation Sans'; text-anchor: start" x="419.83" y="13.1" transform="rotate(-0 419.83 13.1)" textLength="14.52" lengthAdjust="spacingAndGlyphs">max</text>
</g>
<g id="text_29">
<text style="font-size: 7.25px; font-family: 'Liberation Sans'; text-anchor: start" x="419.83" y="21.31" transform="rotate(-0 419.83 21.31)" textLength="14.81" lengthAdjust="spacingAndGlyphs">90%</text>
</g>
<g id="text_30">
<text style="font-size: 7.25px; font-family: 'Liberation Sans'; text-anchor: start" x="419.83" y="29.52" transform="rotate(-0 419.83 29.52)" textLength="14.81" lengthAdjust="spacingAndGlyphs">75%</text>
</g>
<g id="text_31">
<text style="font-size: 7.25px; font-family: 'Liberation Sans'; text-anchor: start" x="419.83" y="37.73" transform="rotate(-0 419.83 37.73)" textLength="24.98" lengthAdjust="spacingAndGlyphs">median</text>
</g>
<g id="text_32">
<text style="font-size: 7.25px; font-family: 'Liberation Sans'; text-anchor: start" x="419.83" y="45.94" transform="rotate(-0 419.83 45.94)" textLength="14.81" lengthAdjust="spacingAndGlyphs">25%</text>
</g>
<g id="text_33">
<text style="font-size: 7.25px; font-family: 'Liberation Sans'; text-anchor: start" x="419.83" y="54.14" transform="rotate(-0 419.83 54.14)" textLength="14.81" lengthAdjust="spacingAndGlyphs">10%</text>
</g>
<g id="text_34">
<text style="font-size: 7.25px; font-family: 'Liberation Sans'; text-anchor: start" x="419.83" y="62.35" transform="rotate(-0 419.83 62.35)" textLength="12.57" lengthAdjust="spacingAndGlyphs">min</text>
</g>
<g id="text_35">
<text style="font-size: 9.31px; font-family: 'Liberation Sans'; text-anchor: start" x="526.75" y="30.74" transform="rotate(-0 526.75 30.74)" textLength="31.94" lengthAdjust="spacingAndGlyphs">Control</text>
</g>
<g id="text_36">
<text style="font-size: 9.31px; font-family: 'Liberation Sans'; text-anchor: start" x="526.75" y="48.17" transform="rotate(-0 526.75 48.17)" textLength="70.08" lengthAdjust="spacingAndGlyphs">Ensemble Mean</text>
</g>
<g id="line2d_460">
<path d="M 400.43 36.5 L 412.52 36.5 " clip-path="url(#pc23416d26c)" style="fill: none; stroke: #000000; stroke-width: 0.8; stroke-linecap: square"/>
</g>
</g>
<g id="text_37">
<text style="font-size: 9.31px; font-family: 'Liberation Sans'; text-anchor: start" x="41.83" y="64.69" transform="rotate(-0 41.83 64.69)" textLength="93.14" lengthAdjust="spacingAndGlyphs">Total cloud cover (%)</text>
</g>
<g id="text_38">
<text style="font-size: 9.31px; font-family: 'Liberation Sans'; text-anchor: start" x="41.83" y="167.08" transform="rotate(-0 41.83 167.08)" textLength="120.44" lengthAdjust="spacingAndGlyphs">Total precipitation (mm/6h)</text>
</g>
<g id="text_39">
<text style="font-size: 9.31px; font-family: 'Liberation Sans'; text-anchor: start" x="41.83" y="269.6" transform="rotate(-0 41.83 269.6)" textLength="99.41" lengthAdjust="spacingAndGlyphs">10m wind speed (m/s)</text>
</g>
<g id="text_40">
<text style="font-size: 9.31px; font-family: 'Liberation Sans'; text-anchor: start" x="41.83" y="371.99" transform="rotate(-0 41.83 371.99)" textLength="92.53" lengthAdjust="spacingAndGlyphs">2m temperature (°C)</text>
</g>
<g id="text_41">
<text style="font-size: 11.38px; font-family: 'Liberation Sans'; text-anchor: start" x="41.76" y="16.56" textLength="126.37" lengthAdjust="spacingAndGlyphs">CMA-GEPS meteogram</text>
</g>
<g id="text_42">
<text style="font-size: 11.38px; font-family: 'Liberation Sans'; text-anchor: start" x="41.76" y="31.82" textLength="211.88" lengthAdjust="spacingAndGlyphs">NakhonRatchasima 14.96°N 102.07°E</text>
</g>
<g id="text_43">
<text style="font-size: 11.38px; font-family: 'Liberation Sans'; text-anchor: start" x="41.76" y="46.51" textLength="142.70" lengthAdjust="spacingAndGlyphs">Initime: 20251216 00UTC</text>
</g>
</g>
<defs>
<clipPath id="p63c5d4109b">
<rect x="41.98" y="68.18" width="562.97" height="83.09"/>
</clipPath>
<clipPath id="p84e7c9f761">
<rect x="41.98" y="170.57" width="562.97" height="83.09"/>
</clipPath>
<clipPath id="p38d35d230c">
<rect x="41.98" y="273.1" width="562.97" height="82.73"/>
</clipPath>
<clipPath id="p8f85cdcc2b">
<rect x="41.98" y="375.48" width="562.97" height="82.87"/>
</clipPath>
<clipPath id="pc23416d26c">
<rect x="0" y="0" width="618.48" height="489.6"/>
</clipPath>
</defs>
</svg>
</body></html>
